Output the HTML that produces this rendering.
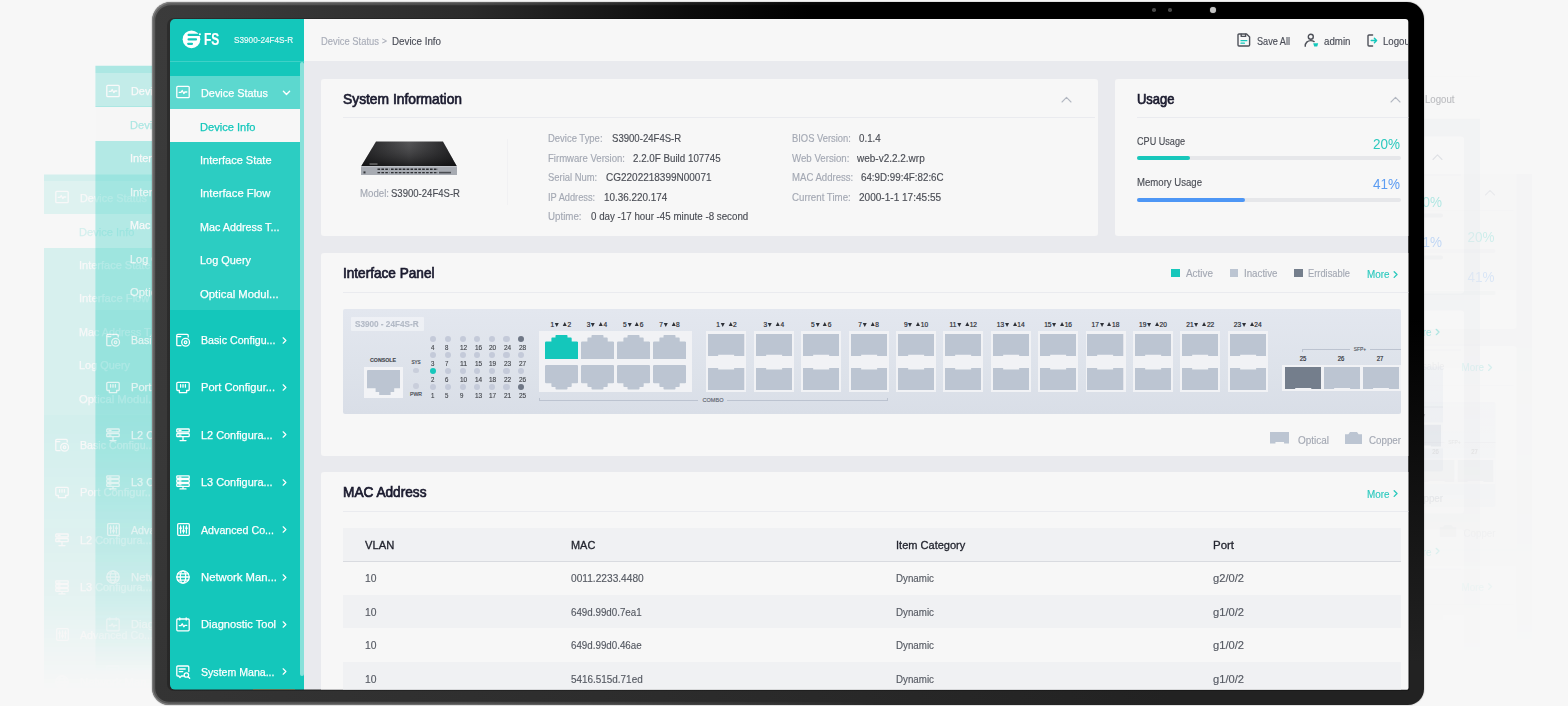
<!DOCTYPE html><html><head><meta charset="utf-8"><title>S3900-24F4S-R</title><style>
html,body{margin:0;padding:0}
body{width:1568px;height:706px;overflow:hidden;background:#f7f7f7;position:relative;font-family:"Liberation Sans",sans-serif}
.r,.t,.L{position:absolute}
.t{white-space:nowrap}
.L{left:0;top:0;width:1568px;height:706px;overflow:hidden}
.td,.tu{display:inline-block;width:0;height:0;border-left:2.7px solid transparent;border-right:2.7px solid transparent;position:relative}
.td{border-top:4.4px solid #2e3138;top:0;margin:0 1.9px 0 .8px}
.tu{border-bottom:4.4px solid #2e3138;top:-.7px;margin:0 .6px 0 1.9px}
</style></head><body><div class="L" style="clip-path:inset(174.5px 1415.5px 0 44px);-webkit-mask-image:linear-gradient(180deg,rgba(0,0,0,.155) 0,rgba(0,0,0,.155) 430px,rgba(0,0,0,.08) 600px,rgba(0,0,0,.0) 690px);mask-image:linear-gradient(180deg,rgba(0,0,0,.155) 0,rgba(0,0,0,.155) 430px,rgba(0,0,0,.08) 600px,rgba(0,0,0,.0) 690px)"><div class="L" style="overflow:visible;transform:translate(-121px,105px)"><div class="r" style="left:150.0px;top:19.0px;width:154.0px;height:681.0px;background:#14c7bb;"></div><div class="r" style="left:150.0px;top:61.0px;width:154.0px;height:1.0px;background:rgba(255,255,255,.18);"></div><div class="r" style="left:300.0px;top:61.7px;width:3.5px;height:614.3px;background:#88e1da;border-radius:2px"></div><svg class="r" style="left:180.0px;top:28.0px;" width="24" height="24" viewBox="0 0 24 24" fill="none"><circle cx="11.5" cy="11.3" r="8.85" fill="#fff"/><path d="M8.6 6.9h10.6M8.6 11.4h7.4M8.2 15.8h3.8" stroke="#14c7bb" stroke-width="2.2" stroke-linecap="round"/><circle cx="19.9" cy="6.2" r="1.05" fill="#fff"/></svg><span class="t" style="left:203.9px;transform-origin:0 50%;transform:scaleX(0.753);top:28.7px;font-size:16px;line-height:21px;color:#fff;font-weight:700;-webkit-text-stroke:0.15px #fff;">FS</span><span class="t" style="left:234.1px;transform-origin:0 50%;transform:scaleX(0.910);top:34.4px;font-size:9px;line-height:12px;color:#fff;font-weight:400;-webkit-text-stroke:0.15px #fff;opacity:.93">S3900-24F4S-R</span><div class="r" style="left:150.0px;top:76.0px;width:150.0px;height:32.6px;background:#5cd8cf;"></div><svg class="r" style="left:176.0px;top:85.0px;" width="14" height="14" viewBox="0 0 14 14" fill="none"><rect x="0.8" y="1.3" width="12.4" height="11.4" rx="1" stroke="#fff" stroke-width="1.3" stroke-linecap="round" stroke-linejoin="round"/><path d="M3.2 7.3h1.8l1.2-1.8 1.6 3 1.1-1.5h1.9" stroke="#fff" stroke-width="1.3" stroke-linecap="round" stroke-linejoin="round" stroke-width="1.1"/></svg><span class="t" style="left:201.0px;transform-origin:0 50%;transform:scaleX(0.929);top:84.8px;font-size:11.7px;line-height:15px;color:#fff;font-weight:400;-webkit-text-stroke:0.25px #fff;">Device Status</span><svg class="r" style="left:282.0px;top:89.5px;" width="9" height="6" viewBox="0 0 9 6" fill="none"><path d="M1.4 1.3l3.1 3.1L7.6 1.3" stroke="#fff" stroke-width="1.4" stroke-linecap="round" stroke-linejoin="round"/></svg><div class="r" style="left:150.0px;top:143.0px;width:150.0px;height:167.0px;background:#2ccdc2;"></div><div class="r" style="left:150.0px;top:108.6px;width:150.0px;height:34.4px;background:#f7f7f7;"></div><span class="t" style="left:200.0px;transform-origin:0 50%;transform:scaleX(0.949);top:118.5px;font-size:11.7px;line-height:15px;color:#14c7bb;font-weight:400;-webkit-text-stroke:0.25px #14c7bb;">Device Info</span><span class="t" style="left:200.0px;transform-origin:0 50%;transform:scaleX(0.941);top:151.8px;font-size:11.7px;line-height:15px;color:#fff;font-weight:400;-webkit-text-stroke:0.25px #fff;">Interface State</span><span class="t" style="left:200.0px;transform-origin:0 50%;transform:scaleX(0.960);top:185.3px;font-size:11.7px;line-height:15px;color:#fff;font-weight:400;-webkit-text-stroke:0.25px #fff;">Interface Flow</span><span class="t" style="left:200.0px;transform-origin:0 50%;transform:scaleX(0.922);top:218.8px;font-size:11.7px;line-height:15px;color:#fff;font-weight:400;-webkit-text-stroke:0.25px #fff;">Mac Address T...</span><span class="t" style="left:200.0px;transform-origin:0 50%;transform:scaleX(0.934);top:252.3px;font-size:11.7px;line-height:15px;color:#fff;font-weight:400;-webkit-text-stroke:0.25px #fff;">Log Query</span><span class="t" style="left:200.0px;transform-origin:0 50%;transform:scaleX(0.967);top:285.8px;font-size:11.7px;line-height:15px;color:#fff;font-weight:400;-webkit-text-stroke:0.25px #fff;">Optical Modul...</span><svg class="r" style="left:176.0px;top:333.3px;" width="15" height="14" viewBox="0 0 15 14" fill="none"><path d="M5 12.7H1.8a1 1 0 0 1-1-1V2.3a1 1 0 0 1 1-1h9.4a1 1 0 0 1 1 1V4" stroke="#fff" stroke-width="1.3" stroke-linecap="round" stroke-linejoin="round"/><path d="M.8 3.6h4" stroke="#fff" stroke-width="1.3" stroke-linecap="round" stroke-linejoin="round"/><circle cx="9.6" cy="9.2" r="3.9" stroke="#fff" stroke-width="1.3" stroke-linecap="round" stroke-linejoin="round"/><circle cx="9.6" cy="9.2" r="1.3" stroke="#fff" stroke-width="1.3" stroke-linecap="round" stroke-linejoin="round"/></svg><span class="t" style="left:201.0px;transform-origin:0 50%;transform:scaleX(0.910);top:332.1px;font-size:11.7px;line-height:15px;color:#fff;font-weight:400;-webkit-text-stroke:0.25px #fff;">Basic Configu...</span><svg class="r" style="left:282.0px;top:336.6px;" width="4.68" height="7.02" viewBox="0 0 6 9" fill="none"><path d="M1.5 1l3.5 3.5L1.5 8" stroke="#fff" stroke-width="1.5" stroke-linecap="round" stroke-linejoin="round"/></svg><svg class="r" style="left:176.0px;top:380.6px;" width="14" height="14" viewBox="0 0 14 14" fill="none"><path d="M1.8 1.3h10.4a1 1 0 0 1 1 1v6.2a1 1 0 0 1-1 1H10.6v2.2H3.4V9.5H1.8a1 1 0 0 1-1-1V2.3a1 1 0 0 1 1-1z" stroke="#fff" stroke-width="1.3" stroke-linecap="round" stroke-linejoin="round"/><path d="M4.6 3.6v2.6M7 3.6v2.6M9.4 3.6v2.6" stroke="#fff" stroke-width="1.3" stroke-linecap="round" stroke-linejoin="round"/></svg><span class="t" style="left:201.0px;transform-origin:0 50%;transform:scaleX(0.949);top:379.4px;font-size:11.7px;line-height:15px;color:#fff;font-weight:400;-webkit-text-stroke:0.25px #fff;">Port Configur...</span><svg class="r" style="left:282.0px;top:383.9px;" width="4.68" height="7.02" viewBox="0 0 6 9" fill="none"><path d="M1.5 1l3.5 3.5L1.5 8" stroke="#fff" stroke-width="1.5" stroke-linecap="round" stroke-linejoin="round"/></svg><svg class="r" style="left:176.0px;top:428.0px;" width="14" height="14" viewBox="0 0 14 14" fill="none"><rect x="0.8" y="1" width="12.4" height="3" rx=".6" stroke="#fff" stroke-width="1.3" stroke-linecap="round" stroke-linejoin="round"/><rect x="0.8" y="5.6" width="12.4" height="3" rx=".6" stroke="#fff" stroke-width="1.3" stroke-linecap="round" stroke-linejoin="round"/><path d="M7 8.6v3.6M4 12.6h6M3 2.5h2M3 7.1h2" stroke="#fff" stroke-width="1.3" stroke-linecap="round" stroke-linejoin="round"/></svg><span class="t" style="left:201.0px;transform-origin:0 50%;transform:scaleX(0.933);top:426.8px;font-size:11.7px;line-height:15px;color:#fff;font-weight:400;-webkit-text-stroke:0.25px #fff;">L2 Configura...</span><svg class="r" style="left:282.0px;top:431.3px;" width="4.68" height="7.02" viewBox="0 0 6 9" fill="none"><path d="M1.5 1l3.5 3.5L1.5 8" stroke="#fff" stroke-width="1.5" stroke-linecap="round" stroke-linejoin="round"/></svg><svg class="r" style="left:176.0px;top:474.9px;" width="14" height="15" viewBox="0 0 14 15" fill="none"><rect x="0.8" y=".8" width="12.4" height="2.7" rx=".6" stroke="#fff" stroke-width="1.3" stroke-linecap="round" stroke-linejoin="round"/><rect x="0.8" y="4.7" width="12.4" height="2.7" rx=".6" stroke="#fff" stroke-width="1.3" stroke-linecap="round" stroke-linejoin="round"/><rect x="0.8" y="8.6" width="12.4" height="2.7" rx=".6" stroke="#fff" stroke-width="1.3" stroke-linecap="round" stroke-linejoin="round"/><path d="M7 11.3v2.2M4 13.9h6M3 2.1h2M3 6h2M3 9.9h2" stroke="#fff" stroke-width="1.3" stroke-linecap="round" stroke-linejoin="round"/></svg><span class="t" style="left:201.0px;transform-origin:0 50%;transform:scaleX(0.933);top:474.2px;font-size:11.7px;line-height:15px;color:#fff;font-weight:400;-webkit-text-stroke:0.25px #fff;">L3 Configura...</span><svg class="r" style="left:282.0px;top:478.7px;" width="4.68" height="7.02" viewBox="0 0 6 9" fill="none"><path d="M1.5 1l3.5 3.5L1.5 8" stroke="#fff" stroke-width="1.5" stroke-linecap="round" stroke-linejoin="round"/></svg><svg class="r" style="left:176.5px;top:523.3px;" width="13" height="13" viewBox="0 0 13 13" fill="none"><rect x="0.7" y=".7" width="11.6" height="11.6" rx="1" stroke="#fff" stroke-width="1.3" stroke-linecap="round" stroke-linejoin="round"/><path d="M3.6 3v7M6.5 3v7M9.4 3v7" stroke="#fff" stroke-width="1.3" stroke-linecap="round" stroke-linejoin="round" stroke-width="1"/><path d="M2.7 5.2h1.8M5.6 8h1.8M8.5 5.2h1.8" stroke="#fff" stroke-width="1.3" stroke-linecap="round" stroke-linejoin="round" stroke-width="1.4"/></svg><span class="t" style="left:201.0px;transform-origin:0 50%;transform:scaleX(0.913);top:521.6px;font-size:11.7px;line-height:15px;color:#fff;font-weight:400;-webkit-text-stroke:0.25px #fff;">Advanced Co...</span><svg class="r" style="left:282.0px;top:526.1px;" width="4.68" height="7.02" viewBox="0 0 6 9" fill="none"><path d="M1.5 1l3.5 3.5L1.5 8" stroke="#fff" stroke-width="1.5" stroke-linecap="round" stroke-linejoin="round"/></svg><svg class="r" style="left:176.0px;top:570.2px;" width="14" height="14" viewBox="0 0 14 14" fill="none"><circle cx="7" cy="7" r="6.2" stroke="#fff" stroke-width="1.3" stroke-linecap="round" stroke-linejoin="round"/><ellipse cx="7" cy="7" rx="2.7" ry="6.2" stroke="#fff" stroke-width="1.3" stroke-linecap="round" stroke-linejoin="round" stroke-width="1.1"/><path d="M.8 7h12.4M1.7 3.9h10.6M1.7 10.1h10.6" stroke="#fff" stroke-width="1.3" stroke-linecap="round" stroke-linejoin="round" stroke-width="1.1"/></svg><span class="t" style="left:201.0px;transform-origin:0 50%;transform:scaleX(0.967);top:569.0px;font-size:11.7px;line-height:15px;color:#fff;font-weight:400;-webkit-text-stroke:0.25px #fff;">Network Man...</span><svg class="r" style="left:282.0px;top:573.5px;" width="4.68" height="7.02" viewBox="0 0 6 9" fill="none"><path d="M1.5 1l3.5 3.5L1.5 8" stroke="#fff" stroke-width="1.5" stroke-linecap="round" stroke-linejoin="round"/></svg><svg class="r" style="left:176.0px;top:617.1px;" width="14" height="15" viewBox="0 0 14 15" fill="none"><rect x="0.8" y="2" width="12.4" height="11.8" rx="1" stroke="#fff" stroke-width="1.3" stroke-linecap="round" stroke-linejoin="round"/><path d="M3.8 .8v2.2M10.2 .8v2.2M3.2 8.6h1.8l1.2-1.8 1.6 3 1.1-1.5h1.9" stroke="#fff" stroke-width="1.3" stroke-linecap="round" stroke-linejoin="round" stroke-width="1.1"/></svg><span class="t" style="left:201.0px;transform-origin:0 50%;transform:scaleX(0.949);top:616.4px;font-size:11.7px;line-height:15px;color:#fff;font-weight:400;-webkit-text-stroke:0.25px #fff;">Diagnostic Tool</span><svg class="r" style="left:282.0px;top:620.9px;" width="4.68" height="7.02" viewBox="0 0 6 9" fill="none"><path d="M1.5 1l3.5 3.5L1.5 8" stroke="#fff" stroke-width="1.5" stroke-linecap="round" stroke-linejoin="round"/></svg><svg class="r" style="left:176.0px;top:665.0px;" width="15" height="15" viewBox="0 0 15 15" fill="none"><path d="M7.6 11H5.4L4 12.6 2.8 11H1.8a1 1 0 0 1-1-1V2a1 1 0 0 1 1-1h10a1 1 0 0 1 1 1v4.5" stroke="#fff" stroke-width="1.3" stroke-linecap="round" stroke-linejoin="round"/><path d="M3.2 4h6M3.2 6.6h3.6" stroke="#fff" stroke-width="1.3" stroke-linecap="round" stroke-linejoin="round"/><circle cx="10.4" cy="10" r="2.2" stroke="#fff" stroke-width="1.3" stroke-linecap="round" stroke-linejoin="round"/><path d="M12.1 11.7l1.6 1.6" stroke="#fff" stroke-width="1.3" stroke-linecap="round" stroke-linejoin="round"/></svg><span class="t" style="left:201.0px;transform-origin:0 50%;transform:scaleX(0.905);top:663.8px;font-size:11.7px;line-height:15px;color:#fff;font-weight:400;-webkit-text-stroke:0.25px #fff;">System Mana...</span><svg class="r" style="left:282.0px;top:668.3px;" width="4.68" height="7.02" viewBox="0 0 6 9" fill="none"><path d="M1.5 1l3.5 3.5L1.5 8" stroke="#fff" stroke-width="1.5" stroke-linecap="round" stroke-linejoin="round"/></svg></div></div><div class="L" style="clip-path:inset(65.7px 1415.5px 0 95.4px);-webkit-mask-image:linear-gradient(180deg,rgba(0,0,0,.33) 0,rgba(0,0,0,.33) 380px,rgba(0,0,0,.21) 500px,rgba(0,0,0,.1) 600px,rgba(0,0,0,.0) 672px);mask-image:linear-gradient(180deg,rgba(0,0,0,.33) 0,rgba(0,0,0,.33) 380px,rgba(0,0,0,.21) 500px,rgba(0,0,0,.1) 600px,rgba(0,0,0,.0) 672px)"><div class="L" style="overflow:visible;transform:translate(-70px,0px)"><div class="r" style="left:150.0px;top:19.0px;width:154.0px;height:681.0px;background:#14c7bb;"></div><div class="r" style="left:150.0px;top:61.0px;width:154.0px;height:1.0px;background:rgba(255,255,255,.18);"></div><div class="r" style="left:300.0px;top:61.7px;width:3.5px;height:614.3px;background:#88e1da;border-radius:2px"></div><svg class="r" style="left:180.0px;top:28.0px;" width="24" height="24" viewBox="0 0 24 24" fill="none"><circle cx="11.5" cy="11.3" r="8.85" fill="#fff"/><path d="M8.6 6.9h10.6M8.6 11.4h7.4M8.2 15.8h3.8" stroke="#14c7bb" stroke-width="2.2" stroke-linecap="round"/><circle cx="19.9" cy="6.2" r="1.05" fill="#fff"/></svg><span class="t" style="left:203.9px;transform-origin:0 50%;transform:scaleX(0.753);top:28.7px;font-size:16px;line-height:21px;color:#fff;font-weight:700;-webkit-text-stroke:0.15px #fff;">FS</span><span class="t" style="left:234.1px;transform-origin:0 50%;transform:scaleX(0.910);top:34.4px;font-size:9px;line-height:12px;color:#fff;font-weight:400;-webkit-text-stroke:0.15px #fff;opacity:.93">S3900-24F4S-R</span><div class="r" style="left:150.0px;top:73.4px;width:150.0px;height:33.1px;background:#5cd8cf;"></div><svg class="r" style="left:176.0px;top:83.5px;" width="14" height="14" viewBox="0 0 14 14" fill="none"><rect x="0.8" y="1.3" width="12.4" height="11.4" rx="1" stroke="#fff" stroke-width="1.3" stroke-linecap="round" stroke-linejoin="round"/><path d="M3.2 7.3h1.8l1.2-1.8 1.6 3 1.1-1.5h1.9" stroke="#fff" stroke-width="1.3" stroke-linecap="round" stroke-linejoin="round" stroke-width="1.1"/></svg><span class="t" style="left:201.0px;transform-origin:0 50%;transform:scaleX(0.929);top:83.3px;font-size:11.7px;line-height:15px;color:#fff;font-weight:400;-webkit-text-stroke:0.25px #fff;">Device Status</span><svg class="r" style="left:282.0px;top:88.0px;" width="9" height="6" viewBox="0 0 9 6" fill="none"><path d="M1.4 1.3l3.1 3.1L7.6 1.3" stroke="#fff" stroke-width="1.4" stroke-linecap="round" stroke-linejoin="round"/></svg><div class="r" style="left:150.0px;top:141.0px;width:150.0px;height:169.0px;background:#2ccdc2;"></div><div class="r" style="left:150.0px;top:106.5px;width:150.0px;height:34.5px;background:#f7f7f7;"></div><span class="t" style="left:200.0px;transform-origin:0 50%;transform:scaleX(0.949);top:117.0px;font-size:11.7px;line-height:15px;color:#14c7bb;font-weight:400;-webkit-text-stroke:0.25px #14c7bb;">Device Info</span><span class="t" style="left:200.0px;transform-origin:0 50%;transform:scaleX(0.941);top:150.3px;font-size:11.7px;line-height:15px;color:#fff;font-weight:400;-webkit-text-stroke:0.25px #fff;">Interface State</span><span class="t" style="left:200.0px;transform-origin:0 50%;transform:scaleX(0.960);top:183.8px;font-size:11.7px;line-height:15px;color:#fff;font-weight:400;-webkit-text-stroke:0.25px #fff;">Interface Flow</span><span class="t" style="left:200.0px;transform-origin:0 50%;transform:scaleX(0.922);top:217.3px;font-size:11.7px;line-height:15px;color:#fff;font-weight:400;-webkit-text-stroke:0.25px #fff;">Mac Address T...</span><span class="t" style="left:200.0px;transform-origin:0 50%;transform:scaleX(0.934);top:250.8px;font-size:11.7px;line-height:15px;color:#fff;font-weight:400;-webkit-text-stroke:0.25px #fff;">Log Query</span><span class="t" style="left:200.0px;transform-origin:0 50%;transform:scaleX(0.967);top:284.3px;font-size:11.7px;line-height:15px;color:#fff;font-weight:400;-webkit-text-stroke:0.25px #fff;">Optical Modul...</span><svg class="r" style="left:176.0px;top:333.3px;" width="15" height="14" viewBox="0 0 15 14" fill="none"><path d="M5 12.7H1.8a1 1 0 0 1-1-1V2.3a1 1 0 0 1 1-1h9.4a1 1 0 0 1 1 1V4" stroke="#fff" stroke-width="1.3" stroke-linecap="round" stroke-linejoin="round"/><path d="M.8 3.6h4" stroke="#fff" stroke-width="1.3" stroke-linecap="round" stroke-linejoin="round"/><circle cx="9.6" cy="9.2" r="3.9" stroke="#fff" stroke-width="1.3" stroke-linecap="round" stroke-linejoin="round"/><circle cx="9.6" cy="9.2" r="1.3" stroke="#fff" stroke-width="1.3" stroke-linecap="round" stroke-linejoin="round"/></svg><span class="t" style="left:201.0px;transform-origin:0 50%;transform:scaleX(0.910);top:332.1px;font-size:11.7px;line-height:15px;color:#fff;font-weight:400;-webkit-text-stroke:0.25px #fff;">Basic Configu...</span><svg class="r" style="left:282.0px;top:336.6px;" width="4.68" height="7.02" viewBox="0 0 6 9" fill="none"><path d="M1.5 1l3.5 3.5L1.5 8" stroke="#fff" stroke-width="1.5" stroke-linecap="round" stroke-linejoin="round"/></svg><svg class="r" style="left:176.0px;top:380.6px;" width="14" height="14" viewBox="0 0 14 14" fill="none"><path d="M1.8 1.3h10.4a1 1 0 0 1 1 1v6.2a1 1 0 0 1-1 1H10.6v2.2H3.4V9.5H1.8a1 1 0 0 1-1-1V2.3a1 1 0 0 1 1-1z" stroke="#fff" stroke-width="1.3" stroke-linecap="round" stroke-linejoin="round"/><path d="M4.6 3.6v2.6M7 3.6v2.6M9.4 3.6v2.6" stroke="#fff" stroke-width="1.3" stroke-linecap="round" stroke-linejoin="round"/></svg><span class="t" style="left:201.0px;transform-origin:0 50%;transform:scaleX(0.949);top:379.4px;font-size:11.7px;line-height:15px;color:#fff;font-weight:400;-webkit-text-stroke:0.25px #fff;">Port Configur...</span><svg class="r" style="left:282.0px;top:383.9px;" width="4.68" height="7.02" viewBox="0 0 6 9" fill="none"><path d="M1.5 1l3.5 3.5L1.5 8" stroke="#fff" stroke-width="1.5" stroke-linecap="round" stroke-linejoin="round"/></svg><svg class="r" style="left:176.0px;top:428.0px;" width="14" height="14" viewBox="0 0 14 14" fill="none"><rect x="0.8" y="1" width="12.4" height="3" rx=".6" stroke="#fff" stroke-width="1.3" stroke-linecap="round" stroke-linejoin="round"/><rect x="0.8" y="5.6" width="12.4" height="3" rx=".6" stroke="#fff" stroke-width="1.3" stroke-linecap="round" stroke-linejoin="round"/><path d="M7 8.6v3.6M4 12.6h6M3 2.5h2M3 7.1h2" stroke="#fff" stroke-width="1.3" stroke-linecap="round" stroke-linejoin="round"/></svg><span class="t" style="left:201.0px;transform-origin:0 50%;transform:scaleX(0.933);top:426.8px;font-size:11.7px;line-height:15px;color:#fff;font-weight:400;-webkit-text-stroke:0.25px #fff;">L2 Configura...</span><svg class="r" style="left:282.0px;top:431.3px;" width="4.68" height="7.02" viewBox="0 0 6 9" fill="none"><path d="M1.5 1l3.5 3.5L1.5 8" stroke="#fff" stroke-width="1.5" stroke-linecap="round" stroke-linejoin="round"/></svg><svg class="r" style="left:176.0px;top:474.9px;" width="14" height="15" viewBox="0 0 14 15" fill="none"><rect x="0.8" y=".8" width="12.4" height="2.7" rx=".6" stroke="#fff" stroke-width="1.3" stroke-linecap="round" stroke-linejoin="round"/><rect x="0.8" y="4.7" width="12.4" height="2.7" rx=".6" stroke="#fff" stroke-width="1.3" stroke-linecap="round" stroke-linejoin="round"/><rect x="0.8" y="8.6" width="12.4" height="2.7" rx=".6" stroke="#fff" stroke-width="1.3" stroke-linecap="round" stroke-linejoin="round"/><path d="M7 11.3v2.2M4 13.9h6M3 2.1h2M3 6h2M3 9.9h2" stroke="#fff" stroke-width="1.3" stroke-linecap="round" stroke-linejoin="round"/></svg><span class="t" style="left:201.0px;transform-origin:0 50%;transform:scaleX(0.933);top:474.2px;font-size:11.7px;line-height:15px;color:#fff;font-weight:400;-webkit-text-stroke:0.25px #fff;">L3 Configura...</span><svg class="r" style="left:282.0px;top:478.7px;" width="4.68" height="7.02" viewBox="0 0 6 9" fill="none"><path d="M1.5 1l3.5 3.5L1.5 8" stroke="#fff" stroke-width="1.5" stroke-linecap="round" stroke-linejoin="round"/></svg><svg class="r" style="left:176.5px;top:523.3px;" width="13" height="13" viewBox="0 0 13 13" fill="none"><rect x="0.7" y=".7" width="11.6" height="11.6" rx="1" stroke="#fff" stroke-width="1.3" stroke-linecap="round" stroke-linejoin="round"/><path d="M3.6 3v7M6.5 3v7M9.4 3v7" stroke="#fff" stroke-width="1.3" stroke-linecap="round" stroke-linejoin="round" stroke-width="1"/><path d="M2.7 5.2h1.8M5.6 8h1.8M8.5 5.2h1.8" stroke="#fff" stroke-width="1.3" stroke-linecap="round" stroke-linejoin="round" stroke-width="1.4"/></svg><span class="t" style="left:201.0px;transform-origin:0 50%;transform:scaleX(0.913);top:521.6px;font-size:11.7px;line-height:15px;color:#fff;font-weight:400;-webkit-text-stroke:0.25px #fff;">Advanced Co...</span><svg class="r" style="left:282.0px;top:526.1px;" width="4.68" height="7.02" viewBox="0 0 6 9" fill="none"><path d="M1.5 1l3.5 3.5L1.5 8" stroke="#fff" stroke-width="1.5" stroke-linecap="round" stroke-linejoin="round"/></svg><svg class="r" style="left:176.0px;top:570.2px;" width="14" height="14" viewBox="0 0 14 14" fill="none"><circle cx="7" cy="7" r="6.2" stroke="#fff" stroke-width="1.3" stroke-linecap="round" stroke-linejoin="round"/><ellipse cx="7" cy="7" rx="2.7" ry="6.2" stroke="#fff" stroke-width="1.3" stroke-linecap="round" stroke-linejoin="round" stroke-width="1.1"/><path d="M.8 7h12.4M1.7 3.9h10.6M1.7 10.1h10.6" stroke="#fff" stroke-width="1.3" stroke-linecap="round" stroke-linejoin="round" stroke-width="1.1"/></svg><span class="t" style="left:201.0px;transform-origin:0 50%;transform:scaleX(0.967);top:569.0px;font-size:11.7px;line-height:15px;color:#fff;font-weight:400;-webkit-text-stroke:0.25px #fff;">Network Man...</span><svg class="r" style="left:282.0px;top:573.5px;" width="4.68" height="7.02" viewBox="0 0 6 9" fill="none"><path d="M1.5 1l3.5 3.5L1.5 8" stroke="#fff" stroke-width="1.5" stroke-linecap="round" stroke-linejoin="round"/></svg><svg class="r" style="left:176.0px;top:617.1px;" width="14" height="15" viewBox="0 0 14 15" fill="none"><rect x="0.8" y="2" width="12.4" height="11.8" rx="1" stroke="#fff" stroke-width="1.3" stroke-linecap="round" stroke-linejoin="round"/><path d="M3.8 .8v2.2M10.2 .8v2.2M3.2 8.6h1.8l1.2-1.8 1.6 3 1.1-1.5h1.9" stroke="#fff" stroke-width="1.3" stroke-linecap="round" stroke-linejoin="round" stroke-width="1.1"/></svg><span class="t" style="left:201.0px;transform-origin:0 50%;transform:scaleX(0.949);top:616.4px;font-size:11.7px;line-height:15px;color:#fff;font-weight:400;-webkit-text-stroke:0.25px #fff;">Diagnostic Tool</span><svg class="r" style="left:282.0px;top:620.9px;" width="4.68" height="7.02" viewBox="0 0 6 9" fill="none"><path d="M1.5 1l3.5 3.5L1.5 8" stroke="#fff" stroke-width="1.5" stroke-linecap="round" stroke-linejoin="round"/></svg><svg class="r" style="left:176.0px;top:665.0px;" width="15" height="15" viewBox="0 0 15 15" fill="none"><path d="M7.6 11H5.4L4 12.6 2.8 11H1.8a1 1 0 0 1-1-1V2a1 1 0 0 1 1-1h10a1 1 0 0 1 1 1v4.5" stroke="#fff" stroke-width="1.3" stroke-linecap="round" stroke-linejoin="round"/><path d="M3.2 4h6M3.2 6.6h3.6" stroke="#fff" stroke-width="1.3" stroke-linecap="round" stroke-linejoin="round"/><circle cx="10.4" cy="10" r="2.2" stroke="#fff" stroke-width="1.3" stroke-linecap="round" stroke-linejoin="round"/><path d="M12.1 11.7l1.6 1.6" stroke="#fff" stroke-width="1.3" stroke-linecap="round" stroke-linejoin="round"/></svg><span class="t" style="left:201.0px;transform-origin:0 50%;transform:scaleX(0.905);top:663.8px;font-size:11.7px;line-height:15px;color:#fff;font-weight:400;-webkit-text-stroke:0.25px #fff;">System Mana...</span><svg class="r" style="left:282.0px;top:668.3px;" width="4.68" height="7.02" viewBox="0 0 6 9" fill="none"><path d="M1.5 1l3.5 3.5L1.5 8" stroke="#fff" stroke-width="1.5" stroke-linecap="round" stroke-linejoin="round"/></svg></div></div><div class="L" style="clip-path:inset(174px 36px 0 1423px);-webkit-mask-image:linear-gradient(180deg,rgba(0,0,0,.2) 0,rgba(0,0,0,.2) 250px,rgba(0,0,0,.15) 400px,rgba(0,0,0,.0) 680px);mask-image:linear-gradient(180deg,rgba(0,0,0,.2) 0,rgba(0,0,0,.2) 250px,rgba(0,0,0,.15) 400px,rgba(0,0,0,.0) 680px)"><div class="L" style="overflow:visible;transform:translate(94.5px,93px)"><div class="r" style="left:304.0px;top:61.0px;width:1134.0px;height:699.0px;background:#e9eaee;"></div><div class="r" style="left:304.0px;top:19.0px;width:1134.0px;height:42.0px;background:#f7f7f7;"></div><span class="t" style="left:321.0px;transform-origin:0 50%;transform:scaleX(0.895);top:34.0px;font-size:10.5px;line-height:14px;color:#a9adb8;font-weight:400;-webkit-text-stroke:0.15px #a9adb8;">Device Status</span><span class="t" style="left:382.0px;transform-origin:0 50%;transform:scaleX(0.950);top:35.0px;font-size:9px;line-height:12px;color:#a9adb8;font-weight:400;-webkit-text-stroke:0.15px #a9adb8;">&gt;</span><span class="t" style="left:391.5px;transform-origin:0 50%;transform:scaleX(0.933);top:34.0px;font-size:10.5px;line-height:14px;color:#4a4d57;font-weight:400;-webkit-text-stroke:0.15px #4a4d57;">Device Info</span><svg class="r" style="left:1237.0px;top:33.0px;" width="14" height="14" viewBox="0 0 14 14" fill="none"><path d="M2 1h7.6L12.6 4v8a1 1 0 0 1-1 1H2a1 1 0 0 1-1-1V2a1 1 0 0 1 1-1z" stroke="#4e5159" stroke-width="1.4" stroke-linecap="round" stroke-linejoin="round"/><path d="M4.2 1.2v2.2h4.4V1.2" stroke="#4e5159" stroke-width="1.4" stroke-linecap="round" stroke-linejoin="round" stroke-width="1.8"/><path d="M4 7.7h5.8M4 10.2h3.4" stroke="#14c7bb" stroke-width="1.3" stroke-linecap="round"/></svg><span class="t" style="left:1257.0px;transform-origin:0 50%;transform:scaleX(0.913);top:34.5px;font-size:10px;line-height:13px;color:#4a4d57;font-weight:400;-webkit-text-stroke:0.15px #4a4d57;">Save All</span><svg class="r" style="left:1303.5px;top:33.0px;" width="15" height="15" viewBox="0 0 15 15" fill="none"><circle cx="6.8" cy="3.8" r="2.5" stroke="#4e5159" stroke-width="1.4" stroke-linecap="round" stroke-linejoin="round"/><path d="M1.2 13.2c0-3.4 2.4-5.6 5.6-5.6 1.3 0 2.4.3 3.3 1" stroke="#4e5159" stroke-width="1.4" stroke-linecap="round" stroke-linejoin="round"/><path d="M9.2 10.2h5l-1 3.4h-3z" fill="#14c7bb"/></svg><span class="t" style="left:1324.0px;transform-origin:0 50%;transform:scaleX(0.955);top:34.5px;font-size:10.2px;line-height:13px;color:#4a4d57;font-weight:400;-webkit-text-stroke:0.15px #4a4d57;">admin</span><svg class="r" style="left:1366.5px;top:34.0px;" width="12" height="13" viewBox="0 0 12 13" fill="none"><path d="M5.6 1H2a1 1 0 0 0-1 1v9a1 1 0 0 0 1 1h3.6" stroke="#4e5159" stroke-width="1.4" stroke-linecap="round" stroke-linejoin="round"/><path d="M4.2 6.5h5.2M7.4 4.2l2.2 2.3L7.4 8.8" stroke="#14c7bb" stroke-width="1.4" stroke-linecap="round" stroke-linejoin="round"/></svg><span class="t" style="left:1382.5px;transform-origin:0 50%;transform:scaleX(0.946);top:34.5px;font-size:10.2px;line-height:13px;color:#4a4d57;font-weight:400;-webkit-text-stroke:0.15px #4a4d57;">Logout</span><div class="r" style="left:321.0px;top:79.4px;width:777.0px;height:156.9px;background:#f7f7f7;border-radius:3px"></div><span class="t" style="left:343.0px;transform-origin:0 50%;transform:scaleX(0.953);top:90.3px;font-size:14.5px;line-height:19px;color:#1a1a2e;font-weight:400;-webkit-text-stroke:0.7px #1a1a2e;">System Information</span><svg class="r" style="left:1061.0px;top:96.0px;" width="11" height="7" viewBox="0 0 11 7" fill="none"><path d="M1 6l4.5-4.7L10 6" stroke="#b3b8c2" stroke-width="1.1" stroke-linecap="round" stroke-linejoin="round"/></svg><div class="r" style="left:343.0px;top:117.0px;width:752.0px;height:1.0px;background:#eaebef;"></div><svg class="r" style="left:360.0px;top:140.0px;" width="98" height="36" viewBox="0 0 98 36" fill="none"><defs><linearGradient id="sw1" x1="0" y1="0" x2="1" y2="0"><stop offset="0" stop-color="#1f1f21"/><stop offset=".5" stop-color="#555557"/><stop offset="1" stop-color="#1a1a1c"/></linearGradient><linearGradient id="sw2" x1="0" y1="0" x2="0" y2="1"><stop offset="0" stop-color="#3a3a3c" stop-opacity="0"/><stop offset="1" stop-color="#0c0c0d" stop-opacity=".75"/></linearGradient></defs><path d="M16 1.6h67L96.9 26.4H1.1z" fill="url(#sw1)"/><path d="M16 1.6h67L96.9 26.4H1.1z" fill="url(#sw2)"/><rect x="1" y="26.2" width="96" height="8.8" fill="#a7abb2"/><rect x="1" y="26.2" width="96" height=".9" fill="#c9ccd1"/><path d="M17.5 29.2h12M31 29.2h47M17.5 32.6h12M31 32.6h47" stroke="#2d2f33" stroke-width="1.4" stroke-dasharray="2.6 1.3"/><rect x="79" y="31.8" width="12" height="1.6" fill="#4a4d52"/><rect x="3.5" y="31.4" width="2" height="2" fill="#33363a"/><rect x="9.5" y="23.4" width="8" height="1.3" fill="#777"/></svg><span class="t" style="left:360.0px;transform-origin:0 50%;transform:scaleX(0.920);top:186.3px;font-size:10.5px;line-height:14px;color:#a3a8b3;font-weight:400;-webkit-text-stroke:0.15px #a3a8b3;">Model:</span><span class="t" style="left:391.3px;transform-origin:0 50%;transform:scaleX(0.909);top:186.3px;font-size:10.5px;line-height:14px;color:#4a4d55;font-weight:400;-webkit-text-stroke:0.15px #4a4d55;">S3900-24F4S-R</span><div class="r" style="left:507.0px;top:139.0px;width:1.0px;height:66.0px;background:#f1f1f3;"></div><span class="t" style="left:548.4px;transform-origin:0 50%;transform:scaleX(0.901);top:131.0px;font-size:10.5px;line-height:14px;color:#a3a8b3;font-weight:400;-webkit-text-stroke:0.15px #a3a8b3;">Device Type:</span><span class="t" style="left:611.5px;transform-origin:0 50%;transform:scaleX(0.912);top:131.0px;font-size:10.5px;line-height:14px;color:#4a4d55;font-weight:400;-webkit-text-stroke:0.15px #4a4d55;">S3900-24F4S-R</span><span class="t" style="left:548.4px;transform-origin:0 50%;transform:scaleX(0.910);top:150.5px;font-size:10.5px;line-height:14px;color:#a3a8b3;font-weight:400;-webkit-text-stroke:0.15px #a3a8b3;">Firmware Version:</span><span class="t" style="left:633.4px;transform-origin:0 50%;transform:scaleX(0.932);top:150.5px;font-size:10.5px;line-height:14px;color:#4a4d55;font-weight:400;-webkit-text-stroke:0.15px #4a4d55;">2.2.0F Build 107745</span><span class="t" style="left:548.4px;transform-origin:0 50%;transform:scaleX(0.897);top:170.0px;font-size:10.5px;line-height:14px;color:#a3a8b3;font-weight:400;-webkit-text-stroke:0.15px #a3a8b3;">Serial Num:</span><span class="t" style="left:606.0px;transform-origin:0 50%;transform:scaleX(0.951);top:170.0px;font-size:10.5px;line-height:14px;color:#4a4d55;font-weight:400;-webkit-text-stroke:0.15px #4a4d55;">CG2202218399N00071</span><span class="t" style="left:548.4px;transform-origin:0 50%;transform:scaleX(0.882);top:189.7px;font-size:10.5px;line-height:14px;color:#a3a8b3;font-weight:400;-webkit-text-stroke:0.15px #a3a8b3;">IP Address:</span><span class="t" style="left:604.0px;transform-origin:0 50%;transform:scaleX(0.943);top:189.7px;font-size:10.5px;line-height:14px;color:#4a4d55;font-weight:400;-webkit-text-stroke:0.15px #4a4d55;">10.36.220.174</span><span class="t" style="left:548.4px;transform-origin:0 50%;transform:scaleX(0.928);top:209.2px;font-size:10.5px;line-height:14px;color:#a3a8b3;font-weight:400;-webkit-text-stroke:0.15px #a3a8b3;">Uptime:</span><span class="t" style="left:590.6px;transform-origin:0 50%;transform:scaleX(0.929);top:209.2px;font-size:10.5px;line-height:14px;color:#4a4d55;font-weight:400;-webkit-text-stroke:0.15px #4a4d55;">0 day -17 hour -45 minute -8 second</span><span class="t" style="left:792.0px;transform-origin:0 50%;transform:scaleX(0.892);top:131.0px;font-size:10.5px;line-height:14px;color:#a3a8b3;font-weight:400;-webkit-text-stroke:0.15px #a3a8b3;">BIOS Version:</span><span class="t" style="left:859.3px;transform-origin:0 50%;transform:scaleX(0.929);top:131.0px;font-size:10.5px;line-height:14px;color:#4a4d55;font-weight:400;-webkit-text-stroke:0.15px #4a4d55;">0.1.4</span><span class="t" style="left:792.0px;transform-origin:0 50%;transform:scaleX(0.922);top:150.5px;font-size:10.5px;line-height:14px;color:#a3a8b3;font-weight:400;-webkit-text-stroke:0.15px #a3a8b3;">Web Version:</span><span class="t" style="left:857.3px;transform-origin:0 50%;transform:scaleX(0.951);top:150.5px;font-size:10.5px;line-height:14px;color:#4a4d55;font-weight:400;-webkit-text-stroke:0.15px #4a4d55;">web-v2.2.2.wrp</span><span class="t" style="left:792.0px;transform-origin:0 50%;transform:scaleX(0.913);top:170.0px;font-size:10.5px;line-height:14px;color:#a3a8b3;font-weight:400;-webkit-text-stroke:0.15px #a3a8b3;">MAC Address:</span><span class="t" style="left:861.3px;transform-origin:0 50%;transform:scaleX(0.931);top:170.0px;font-size:10.5px;line-height:14px;color:#4a4d55;font-weight:400;-webkit-text-stroke:0.15px #4a4d55;">64:9D:99:4F:82:6C</span><span class="t" style="left:792.0px;transform-origin:0 50%;transform:scaleX(0.924);top:189.7px;font-size:10.5px;line-height:14px;color:#a3a8b3;font-weight:400;-webkit-text-stroke:0.15px #a3a8b3;">Current Time:</span><span class="t" style="left:859.3px;transform-origin:0 50%;transform:scaleX(0.957);top:189.7px;font-size:10.5px;line-height:14px;color:#4a4d55;font-weight:400;-webkit-text-stroke:0.15px #4a4d55;">2000-1-1 17:45:55</span><div class="r" style="left:1114.7px;top:79.4px;width:307.3px;height:156.9px;background:#f7f7f7;border-radius:3px"></div><span class="t" style="left:1137.0px;transform-origin:0 50%;transform:scaleX(0.895);top:90.3px;font-size:14.5px;line-height:19px;color:#1a1a2e;font-weight:400;-webkit-text-stroke:0.7px #1a1a2e;">Usage</span><svg class="r" style="left:1390.0px;top:96.0px;" width="11" height="7" viewBox="0 0 11 7" fill="none"><path d="M1 6l4.5-4.7L10 6" stroke="#b3b8c2" stroke-width="1.1" stroke-linecap="round" stroke-linejoin="round"/></svg><div class="r" style="left:1137.0px;top:117.0px;width:282.0px;height:1.0px;background:#eaebef;"></div><span class="t" style="left:1137.0px;transform-origin:0 50%;transform:scaleX(0.866);top:134.2px;font-size:10.5px;line-height:14px;color:#4a4d55;font-weight:400;-webkit-text-stroke:0.15px #4a4d55;">CPU Usage</span><span class="t" style="right:167.5px;transform-origin:100% 50%;transform:scaleX(0.930);top:134.5px;font-size:14.5px;line-height:19px;color:#2cc9be;font-weight:400;">20%</span><div class="r" style="left:1137.0px;top:156.2px;width:263.5px;height:4.0px;background:#e6e7ea;border-radius:2px"></div><div class="r" style="left:1137.0px;top:156.2px;width:53.0px;height:4.0px;background:#17c7bb;border-radius:2px"></div><span class="t" style="left:1137.0px;transform-origin:0 50%;transform:scaleX(0.913);top:175.0px;font-size:10.5px;line-height:14px;color:#4a4d55;font-weight:400;-webkit-text-stroke:0.15px #4a4d55;">Memory Usage</span><span class="t" style="right:167.5px;transform-origin:100% 50%;transform:scaleX(0.930);top:175.2px;font-size:14.5px;line-height:19px;color:#5b9cf2;font-weight:400;">41%</span><div class="r" style="left:1137.0px;top:197.8px;width:263.5px;height:4.0px;background:#e6e7ea;border-radius:2px"></div><div class="r" style="left:1137.0px;top:197.8px;width:108.0px;height:4.0px;background:#4d96f5;border-radius:2px"></div><div class="r" style="left:321.0px;top:253.3px;width:1101.0px;height:202.5px;background:#f7f7f7;border-radius:3px"></div><span class="t" style="left:343.0px;transform-origin:0 50%;transform:scaleX(0.938);top:264.3px;font-size:14.5px;line-height:19px;color:#1a1a2e;font-weight:400;-webkit-text-stroke:0.7px #1a1a2e;">Interface Panel</span><div class="r" style="left:343.0px;top:291.6px;width:1076.0px;height:1.0px;background:#eaebef;"></div><div class="r" style="left:1171.4px;top:268.5px;width:8.6px;height:8.5px;background:#17c7bb;"></div><span class="t" style="left:1185.7px;transform-origin:0 50%;transform:scaleX(0.944);top:266.0px;font-size:10.5px;line-height:14px;color:#a3a8b3;font-weight:400;-webkit-text-stroke:0.15px #a3a8b3;">Active</span><div class="r" style="left:1229.8px;top:268.5px;width:8.4px;height:8.5px;background:#bcc5d2;"></div><span class="t" style="left:1243.5px;transform-origin:0 50%;transform:scaleX(0.926);top:266.0px;font-size:10.5px;line-height:14px;color:#a3a8b3;font-weight:400;-webkit-text-stroke:0.15px #a3a8b3;">Inactive</span><div class="r" style="left:1294.0px;top:268.5px;width:8.6px;height:8.5px;background:#747e8c;"></div><span class="t" style="left:1308.0px;transform-origin:0 50%;transform:scaleX(0.888);top:266.0px;font-size:10.5px;line-height:14px;color:#a3a8b3;font-weight:400;-webkit-text-stroke:0.15px #a3a8b3;">Errdisable</span><span class="t" style="left:1367.0px;transform-origin:0 50%;transform:scaleX(0.940);top:267.0px;font-size:10.5px;line-height:14px;color:#2cc9be;font-weight:400;-webkit-text-stroke:0.15px #2cc9be;">More</span><svg class="r" style="left:1393.3px;top:270.7px;" width="4.8" height="7.2" viewBox="0 0 6 9" fill="none"><path d="M1.5 1l3.5 3.5L1.5 8" stroke="#2cc9be" stroke-width="1.7" stroke-linecap="round" stroke-linejoin="round"/></svg><div class="r" style="left:343.0px;top:309.2px;width:1058.0px;height:105.3px;background:linear-gradient(180deg,#e3e7ef 0%,#dde2ea 60%,#d9dee7 100%);border-radius:2px"></div><div class="r" style="left:351.0px;top:317.2px;width:73.0px;height:13.6px;background:rgba(255,255,255,.42);border-radius:1px"></div><span class="t" style="left:355.2px;transform-origin:0 50%;transform:scaleX(0.907);top:318.0px;font-size:9px;line-height:12px;color:#b3bac6;font-weight:700;-webkit-text-stroke:0.15px #b3bac6;">S3900 - 24F4S-R</span><span class="t" style="left:383.0px;transform:translateX(-50%) scaleX(0.956);top:356.5px;font-size:5.5px;line-height:7px;color:#44474d;font-weight:700;-webkit-text-stroke:0.15px #44474d;">CONSOLE</span><div class="r" style="left:364.0px;top:367.2px;width:38.7px;height:30.6px;background:#f2f3f6;"></div><svg class="r" style="left:366.5px;top:369.8px;" width="33.8" height="25" viewBox="0 0 33.8 25" fill="none"><path d="M1 0h31.8a1 1 0 0 1 1 1v17.3h-6.6v3.6h-3.6v3h-11.4v-3h-3.6v-3.6H0V1a1 1 0 0 1 1-1z" fill="#bcc5d2"/></svg><span class="t" style="left:416.3px;transform:translateX(-50%) scaleX(0.885);top:359.3px;font-size:5.2px;line-height:7px;color:#4a4e56;font-weight:400;-webkit-text-stroke:0.2px #4a4e56;">SYS</span><span class="t" style="left:416.3px;transform:translateX(-50%) scaleX(0.991);top:391.3px;font-size:5.2px;line-height:7px;color:#4a4e56;font-weight:400;-webkit-text-stroke:0.2px #4a4e56;">PWR</span><div class="r" style="left:413.4px;top:367.6px;width:5.8px;height:5.8px;background:#c9cedb;border-radius:50%"></div><div class="r" style="left:413.4px;top:383.3px;width:5.8px;height:5.8px;background:#c9cedb;border-radius:50%"></div><div class="r" style="left:430.1px;top:335.5px;width:6.2px;height:6.2px;background:#c4cad9;border-radius:50%"></div><span class="t" style="left:430.5px;transform-origin:0 50%;transform:scaleX(0.899);top:342.8px;font-size:6.8px;line-height:9px;color:#44474d;font-weight:400;-webkit-text-stroke:0.15px #44474d;">4</span><div class="r" style="left:430.1px;top:351.5px;width:6.2px;height:6.2px;background:#c4cad9;border-radius:50%"></div><span class="t" style="left:430.5px;transform-origin:0 50%;transform:scaleX(0.899);top:358.9px;font-size:6.8px;line-height:9px;color:#44474d;font-weight:400;-webkit-text-stroke:0.15px #44474d;">3</span><div class="r" style="left:430.1px;top:367.5px;width:6.2px;height:6.2px;background:#17c7bb;border-radius:50%"></div><span class="t" style="left:430.5px;transform-origin:0 50%;transform:scaleX(0.899);top:374.9px;font-size:6.8px;line-height:9px;color:#44474d;font-weight:400;-webkit-text-stroke:0.15px #44474d;">2</span><div class="r" style="left:430.1px;top:383.5px;width:6.2px;height:6.2px;background:#c4cad9;border-radius:50%"></div><span class="t" style="left:430.5px;transform-origin:0 50%;transform:scaleX(0.899);top:390.7px;font-size:6.8px;line-height:9px;color:#44474d;font-weight:400;-webkit-text-stroke:0.15px #44474d;">1</span><div class="r" style="left:444.9px;top:335.5px;width:6.2px;height:6.2px;background:#c4cad9;border-radius:50%"></div><span class="t" style="left:445.3px;transform-origin:0 50%;transform:scaleX(0.899);top:342.8px;font-size:6.8px;line-height:9px;color:#44474d;font-weight:400;-webkit-text-stroke:0.15px #44474d;">8</span><div class="r" style="left:444.9px;top:351.5px;width:6.2px;height:6.2px;background:#c4cad9;border-radius:50%"></div><span class="t" style="left:445.3px;transform-origin:0 50%;transform:scaleX(0.899);top:358.9px;font-size:6.8px;line-height:9px;color:#44474d;font-weight:400;-webkit-text-stroke:0.15px #44474d;">7</span><div class="r" style="left:444.9px;top:367.5px;width:6.2px;height:6.2px;background:#c4cad9;border-radius:50%"></div><span class="t" style="left:445.3px;transform-origin:0 50%;transform:scaleX(0.899);top:374.9px;font-size:6.8px;line-height:9px;color:#44474d;font-weight:400;-webkit-text-stroke:0.15px #44474d;">6</span><div class="r" style="left:444.9px;top:383.5px;width:6.2px;height:6.2px;background:#c4cad9;border-radius:50%"></div><span class="t" style="left:445.3px;transform-origin:0 50%;transform:scaleX(0.899);top:390.7px;font-size:6.8px;line-height:9px;color:#44474d;font-weight:400;-webkit-text-stroke:0.15px #44474d;">5</span><div class="r" style="left:459.5px;top:335.5px;width:6.2px;height:6.2px;background:#c4cad9;border-radius:50%"></div><span class="t" style="left:459.9px;transform-origin:0 50%;transform:scaleX(0.952);top:342.8px;font-size:6.8px;line-height:9px;color:#44474d;font-weight:400;-webkit-text-stroke:0.15px #44474d;">12</span><div class="r" style="left:459.5px;top:351.5px;width:6.2px;height:6.2px;background:#c4cad9;border-radius:50%"></div><span class="t" style="left:459.9px;transform-origin:0 50%;transform:scaleX(1.019);top:358.9px;font-size:6.8px;line-height:9px;color:#44474d;font-weight:400;-webkit-text-stroke:0.15px #44474d;">11</span><div class="r" style="left:459.5px;top:367.5px;width:6.2px;height:6.2px;background:#c4cad9;border-radius:50%"></div><span class="t" style="left:459.9px;transform-origin:0 50%;transform:scaleX(0.952);top:374.9px;font-size:6.8px;line-height:9px;color:#44474d;font-weight:400;-webkit-text-stroke:0.15px #44474d;">10</span><div class="r" style="left:459.5px;top:383.5px;width:6.2px;height:6.2px;background:#c4cad9;border-radius:50%"></div><span class="t" style="left:459.9px;transform-origin:0 50%;transform:scaleX(0.899);top:390.7px;font-size:6.8px;line-height:9px;color:#44474d;font-weight:400;-webkit-text-stroke:0.15px #44474d;">9</span><div class="r" style="left:474.1px;top:335.5px;width:6.2px;height:6.2px;background:#c4cad9;border-radius:50%"></div><span class="t" style="left:474.5px;transform-origin:0 50%;transform:scaleX(0.952);top:342.8px;font-size:6.8px;line-height:9px;color:#44474d;font-weight:400;-webkit-text-stroke:0.15px #44474d;">16</span><div class="r" style="left:474.1px;top:351.5px;width:6.2px;height:6.2px;background:#c4cad9;border-radius:50%"></div><span class="t" style="left:474.5px;transform-origin:0 50%;transform:scaleX(0.952);top:358.9px;font-size:6.8px;line-height:9px;color:#44474d;font-weight:400;-webkit-text-stroke:0.15px #44474d;">15</span><div class="r" style="left:474.1px;top:367.5px;width:6.2px;height:6.2px;background:#c4cad9;border-radius:50%"></div><span class="t" style="left:474.5px;transform-origin:0 50%;transform:scaleX(0.952);top:374.9px;font-size:6.8px;line-height:9px;color:#44474d;font-weight:400;-webkit-text-stroke:0.15px #44474d;">14</span><div class="r" style="left:474.1px;top:383.5px;width:6.2px;height:6.2px;background:#c4cad9;border-radius:50%"></div><span class="t" style="left:474.5px;transform-origin:0 50%;transform:scaleX(0.952);top:390.7px;font-size:6.8px;line-height:9px;color:#44474d;font-weight:400;-webkit-text-stroke:0.15px #44474d;">13</span><div class="r" style="left:488.9px;top:335.5px;width:6.2px;height:6.2px;background:#c4cad9;border-radius:50%"></div><span class="t" style="left:489.3px;transform-origin:0 50%;transform:scaleX(0.952);top:342.8px;font-size:6.8px;line-height:9px;color:#44474d;font-weight:400;-webkit-text-stroke:0.15px #44474d;">20</span><div class="r" style="left:488.9px;top:351.5px;width:6.2px;height:6.2px;background:#c4cad9;border-radius:50%"></div><span class="t" style="left:489.3px;transform-origin:0 50%;transform:scaleX(0.952);top:358.9px;font-size:6.8px;line-height:9px;color:#44474d;font-weight:400;-webkit-text-stroke:0.15px #44474d;">19</span><div class="r" style="left:488.9px;top:367.5px;width:6.2px;height:6.2px;background:#c4cad9;border-radius:50%"></div><span class="t" style="left:489.3px;transform-origin:0 50%;transform:scaleX(0.952);top:374.9px;font-size:6.8px;line-height:9px;color:#44474d;font-weight:400;-webkit-text-stroke:0.15px #44474d;">18</span><div class="r" style="left:488.9px;top:383.5px;width:6.2px;height:6.2px;background:#c4cad9;border-radius:50%"></div><span class="t" style="left:489.3px;transform-origin:0 50%;transform:scaleX(0.952);top:390.7px;font-size:6.8px;line-height:9px;color:#44474d;font-weight:400;-webkit-text-stroke:0.15px #44474d;">17</span><div class="r" style="left:503.4px;top:335.5px;width:6.2px;height:6.2px;background:#c4cad9;border-radius:50%"></div><span class="t" style="left:503.8px;transform-origin:0 50%;transform:scaleX(0.952);top:342.8px;font-size:6.8px;line-height:9px;color:#44474d;font-weight:400;-webkit-text-stroke:0.15px #44474d;">24</span><div class="r" style="left:503.4px;top:351.5px;width:6.2px;height:6.2px;background:#c4cad9;border-radius:50%"></div><span class="t" style="left:503.8px;transform-origin:0 50%;transform:scaleX(0.952);top:358.9px;font-size:6.8px;line-height:9px;color:#44474d;font-weight:400;-webkit-text-stroke:0.15px #44474d;">23</span><div class="r" style="left:503.4px;top:367.5px;width:6.2px;height:6.2px;background:#c4cad9;border-radius:50%"></div><span class="t" style="left:503.8px;transform-origin:0 50%;transform:scaleX(0.952);top:374.9px;font-size:6.8px;line-height:9px;color:#44474d;font-weight:400;-webkit-text-stroke:0.15px #44474d;">22</span><div class="r" style="left:503.4px;top:383.5px;width:6.2px;height:6.2px;background:#c4cad9;border-radius:50%"></div><span class="t" style="left:503.8px;transform-origin:0 50%;transform:scaleX(0.952);top:390.7px;font-size:6.8px;line-height:9px;color:#44474d;font-weight:400;-webkit-text-stroke:0.15px #44474d;">21</span><div class="r" style="left:518.1px;top:335.5px;width:6.2px;height:6.2px;background:#6f7786;border-radius:50%"></div><span class="t" style="left:518.5px;transform-origin:0 50%;transform:scaleX(0.952);top:342.8px;font-size:6.8px;line-height:9px;color:#44474d;font-weight:400;-webkit-text-stroke:0.15px #44474d;">28</span><div class="r" style="left:518.1px;top:351.5px;width:6.2px;height:6.2px;background:#c4cad9;border-radius:50%"></div><span class="t" style="left:518.5px;transform-origin:0 50%;transform:scaleX(0.952);top:358.9px;font-size:6.8px;line-height:9px;color:#44474d;font-weight:400;-webkit-text-stroke:0.15px #44474d;">27</span><div class="r" style="left:518.1px;top:367.5px;width:6.2px;height:6.2px;background:#c4cad9;border-radius:50%"></div><span class="t" style="left:518.5px;transform-origin:0 50%;transform:scaleX(0.952);top:374.9px;font-size:6.8px;line-height:9px;color:#44474d;font-weight:400;-webkit-text-stroke:0.15px #44474d;">26</span><div class="r" style="left:518.1px;top:383.5px;width:6.2px;height:6.2px;background:#6f7786;border-radius:50%"></div><span class="t" style="left:518.5px;transform-origin:0 50%;transform:scaleX(0.952);top:390.7px;font-size:6.8px;line-height:9px;color:#44474d;font-weight:400;-webkit-text-stroke:0.15px #44474d;">25</span><div class="r" style="left:539.0px;top:331.0px;width:153.0px;height:61.0px;background:#f1f2f5;"></div><svg class="r" style="left:544.6px;top:334.6px;" width="33.2" height="24.6" viewBox="0 0 33.2 24.6" fill="none"><path d="M11.3 0h10.4a.8 .8 0 0 1 .8 .8v1.8h3.4a.8 .8 0 0 1 .8 .8v3.1h5.3a1.2 1.2 0 0 1 1.2 1.2v15.7a1.2 1.2 0 0 1-1.2 1.2H1.2a1.2 1.2 0 0 1-1.2-1.2V7.7a1.2 1.2 0 0 1 1.2-1.2h5.2V3.4a.8 .8 0 0 1 .8-.8h3.3V.8a.8 .8 0 0 1 .8-.8z" fill="#14c7bb"/></svg><svg class="r" style="left:544.6px;top:365.2px;" width="33.2" height="24.6" viewBox="0 0 33.2 24.6" fill="none"><path d="M1.2 0h30.8a1.2 1.2 0 0 1 1.2 1.2v15.8a1.2 1.2 0 0 1-1.2 1.2h-5.3v3a.8 .8 0 0 1-.8 .8h-3.4v1.8a.8 .8 0 0 1-.8 .8h-10.4a.8 .8 0 0 1-.8-.8v-1.8h-3.3a.8 .8 0 0 1-.8-.8v-3H1.2a1.2 1.2 0 0 1-1.2-1.2V1.2a1.2 1.2 0 0 1 1.2-1.2z" fill="#bcc5d2"/></svg><span class="t" style="left:560.8px;top:319.8px;transform:translateX(-50%);font-size:6.6px;line-height:9px;color:#2e3138;font-weight:400;-webkit-text-stroke:.2px #2e3138">1<i class="td"></i><i class="tu"></i>2</span><svg class="r" style="left:580.8px;top:334.6px;" width="33.2" height="24.6" viewBox="0 0 33.2 24.6" fill="none"><path d="M11.3 0h10.4a.8 .8 0 0 1 .8 .8v1.8h3.4a.8 .8 0 0 1 .8 .8v3.1h5.3a1.2 1.2 0 0 1 1.2 1.2v15.7a1.2 1.2 0 0 1-1.2 1.2H1.2a1.2 1.2 0 0 1-1.2-1.2V7.7a1.2 1.2 0 0 1 1.2-1.2h5.2V3.4a.8 .8 0 0 1 .8-.8h3.3V.8a.8 .8 0 0 1 .8-.8z" fill="#bcc5d2"/></svg><svg class="r" style="left:580.8px;top:365.2px;" width="33.2" height="24.6" viewBox="0 0 33.2 24.6" fill="none"><path d="M1.2 0h30.8a1.2 1.2 0 0 1 1.2 1.2v15.8a1.2 1.2 0 0 1-1.2 1.2h-5.3v3a.8 .8 0 0 1-.8 .8h-3.4v1.8a.8 .8 0 0 1-.8 .8h-10.4a.8 .8 0 0 1-.8-.8v-1.8h-3.3a.8 .8 0 0 1-.8-.8v-3H1.2a1.2 1.2 0 0 1-1.2-1.2V1.2a1.2 1.2 0 0 1 1.2-1.2z" fill="#bcc5d2"/></svg><span class="t" style="left:597.0px;top:319.8px;transform:translateX(-50%);font-size:6.6px;line-height:9px;color:#2e3138;font-weight:400;-webkit-text-stroke:.2px #2e3138">3<i class="td"></i><i class="tu"></i>4</span><svg class="r" style="left:617.0px;top:334.6px;" width="33.2" height="24.6" viewBox="0 0 33.2 24.6" fill="none"><path d="M11.3 0h10.4a.8 .8 0 0 1 .8 .8v1.8h3.4a.8 .8 0 0 1 .8 .8v3.1h5.3a1.2 1.2 0 0 1 1.2 1.2v15.7a1.2 1.2 0 0 1-1.2 1.2H1.2a1.2 1.2 0 0 1-1.2-1.2V7.7a1.2 1.2 0 0 1 1.2-1.2h5.2V3.4a.8 .8 0 0 1 .8-.8h3.3V.8a.8 .8 0 0 1 .8-.8z" fill="#bcc5d2"/></svg><svg class="r" style="left:617.0px;top:365.2px;" width="33.2" height="24.6" viewBox="0 0 33.2 24.6" fill="none"><path d="M1.2 0h30.8a1.2 1.2 0 0 1 1.2 1.2v15.8a1.2 1.2 0 0 1-1.2 1.2h-5.3v3a.8 .8 0 0 1-.8 .8h-3.4v1.8a.8 .8 0 0 1-.8 .8h-10.4a.8 .8 0 0 1-.8-.8v-1.8h-3.3a.8 .8 0 0 1-.8-.8v-3H1.2a1.2 1.2 0 0 1-1.2-1.2V1.2a1.2 1.2 0 0 1 1.2-1.2z" fill="#bcc5d2"/></svg><span class="t" style="left:633.2px;top:319.8px;transform:translateX(-50%);font-size:6.6px;line-height:9px;color:#2e3138;font-weight:400;-webkit-text-stroke:.2px #2e3138">5<i class="td"></i><i class="tu"></i>6</span><svg class="r" style="left:653.2px;top:334.6px;" width="33.2" height="24.6" viewBox="0 0 33.2 24.6" fill="none"><path d="M11.3 0h10.4a.8 .8 0 0 1 .8 .8v1.8h3.4a.8 .8 0 0 1 .8 .8v3.1h5.3a1.2 1.2 0 0 1 1.2 1.2v15.7a1.2 1.2 0 0 1-1.2 1.2H1.2a1.2 1.2 0 0 1-1.2-1.2V7.7a1.2 1.2 0 0 1 1.2-1.2h5.2V3.4a.8 .8 0 0 1 .8-.8h3.3V.8a.8 .8 0 0 1 .8-.8z" fill="#bcc5d2"/></svg><svg class="r" style="left:653.2px;top:365.2px;" width="33.2" height="24.6" viewBox="0 0 33.2 24.6" fill="none"><path d="M1.2 0h30.8a1.2 1.2 0 0 1 1.2 1.2v15.8a1.2 1.2 0 0 1-1.2 1.2h-5.3v3a.8 .8 0 0 1-.8 .8h-3.4v1.8a.8 .8 0 0 1-.8 .8h-10.4a.8 .8 0 0 1-.8-.8v-1.8h-3.3a.8 .8 0 0 1-.8-.8v-3H1.2a1.2 1.2 0 0 1-1.2-1.2V1.2a1.2 1.2 0 0 1 1.2-1.2z" fill="#bcc5d2"/></svg><span class="t" style="left:669.4px;top:319.8px;transform:translateX(-50%);font-size:6.6px;line-height:9px;color:#2e3138;font-weight:400;-webkit-text-stroke:.2px #2e3138">7<i class="td"></i><i class="tu"></i>8</span><div class="r" style="left:539.2px;top:397.6px;width:0.8px;height:3.0px;background:#bcc3d0;"></div><div class="r" style="left:539.2px;top:399.8px;width:158.8px;height:0.8px;background:#bcc3d0;"></div><span class="t" style="left:712.6px;transform:translateX(-50%) scaleX(1.011);top:396.7px;font-size:5.5px;line-height:7px;color:#5f6570;font-weight:400;-webkit-text-stroke:0.15px #5f6570;">COMBO</span><div class="r" style="left:727.0px;top:399.8px;width:160.6px;height:0.8px;background:#bcc3d0;"></div><div class="r" style="left:886.8px;top:397.6px;width:0.8px;height:3.0px;background:#bcc3d0;"></div><div class="r" style="left:706.4px;top:331.0px;width:40.1px;height:61.0px;background:#f1f2f5;"></div><svg class="r" style="left:708.3px;top:334.3px;" width="36.3" height="22.2" viewBox="0 0 36.3 22.2" fill="none"><path d="M0 0h36.3 v22.2 h-10.164 v-1.5 h-15.972 v1.5 H0z" fill="#bcc5d2"/></svg><svg class="r" style="left:708.3px;top:368.2px;" width="36.3" height="22.2" viewBox="0 0 36.3 22.2" fill="none"><path d="M0 22.2 V0 h10.164 v1.5 h15.972 v-1.5 H36.3 V22.2 z" fill="#bcc5d2"/></svg><span class="t" style="left:726.4px;top:319.8px;transform:translateX(-50%);font-size:6.6px;line-height:9px;color:#2e3138;font-weight:400;-webkit-text-stroke:.2px #2e3138">1<i class="td"></i><i class="tu"></i>2</span><div class="r" style="left:753.8px;top:331.0px;width:40.1px;height:61.0px;background:#f1f2f5;"></div><svg class="r" style="left:755.7px;top:334.3px;" width="36.3" height="22.2" viewBox="0 0 36.3 22.2" fill="none"><path d="M0 0h36.3 v22.2 h-10.164 v-1.5 h-15.972 v1.5 H0z" fill="#bcc5d2"/></svg><svg class="r" style="left:755.7px;top:368.2px;" width="36.3" height="22.2" viewBox="0 0 36.3 22.2" fill="none"><path d="M0 22.2 V0 h10.164 v1.5 h15.972 v-1.5 H36.3 V22.2 z" fill="#bcc5d2"/></svg><span class="t" style="left:773.8px;top:319.8px;transform:translateX(-50%);font-size:6.6px;line-height:9px;color:#2e3138;font-weight:400;-webkit-text-stroke:.2px #2e3138">3<i class="td"></i><i class="tu"></i>4</span><div class="r" style="left:801.2px;top:331.0px;width:40.1px;height:61.0px;background:#f1f2f5;"></div><svg class="r" style="left:803.1px;top:334.3px;" width="36.3" height="22.2" viewBox="0 0 36.3 22.2" fill="none"><path d="M0 0h36.3 v22.2 h-10.164 v-1.5 h-15.972 v1.5 H0z" fill="#bcc5d2"/></svg><svg class="r" style="left:803.1px;top:368.2px;" width="36.3" height="22.2" viewBox="0 0 36.3 22.2" fill="none"><path d="M0 22.2 V0 h10.164 v1.5 h15.972 v-1.5 H36.3 V22.2 z" fill="#bcc5d2"/></svg><span class="t" style="left:821.2px;top:319.8px;transform:translateX(-50%);font-size:6.6px;line-height:9px;color:#2e3138;font-weight:400;-webkit-text-stroke:.2px #2e3138">5<i class="td"></i><i class="tu"></i>6</span><div class="r" style="left:848.6px;top:331.0px;width:40.1px;height:61.0px;background:#f1f2f5;"></div><svg class="r" style="left:850.5px;top:334.3px;" width="36.3" height="22.2" viewBox="0 0 36.3 22.2" fill="none"><path d="M0 0h36.3 v22.2 h-10.164 v-1.5 h-15.972 v1.5 H0z" fill="#bcc5d2"/></svg><svg class="r" style="left:850.5px;top:368.2px;" width="36.3" height="22.2" viewBox="0 0 36.3 22.2" fill="none"><path d="M0 22.2 V0 h10.164 v1.5 h15.972 v-1.5 H36.3 V22.2 z" fill="#bcc5d2"/></svg><span class="t" style="left:868.6px;top:319.8px;transform:translateX(-50%);font-size:6.6px;line-height:9px;color:#2e3138;font-weight:400;-webkit-text-stroke:.2px #2e3138">7<i class="td"></i><i class="tu"></i>8</span><div class="r" style="left:896.0px;top:331.0px;width:40.1px;height:61.0px;background:#f1f2f5;"></div><svg class="r" style="left:897.9px;top:334.3px;" width="36.3" height="22.2" viewBox="0 0 36.3 22.2" fill="none"><path d="M0 0h36.3 v22.2 h-10.164 v-1.5 h-15.972 v1.5 H0z" fill="#bcc5d2"/></svg><svg class="r" style="left:897.9px;top:368.2px;" width="36.3" height="22.2" viewBox="0 0 36.3 22.2" fill="none"><path d="M0 22.2 V0 h10.164 v1.5 h15.972 v-1.5 H36.3 V22.2 z" fill="#bcc5d2"/></svg><span class="t" style="left:916.0px;top:319.8px;transform:translateX(-50%);font-size:6.6px;line-height:9px;color:#2e3138;font-weight:400;-webkit-text-stroke:.2px #2e3138">9<i class="td"></i><i class="tu"></i>10</span><div class="r" style="left:943.3px;top:331.0px;width:40.1px;height:61.0px;background:#f1f2f5;"></div><svg class="r" style="left:945.2px;top:334.3px;" width="36.3" height="22.2" viewBox="0 0 36.3 22.2" fill="none"><path d="M0 0h36.3 v22.2 h-10.164 v-1.5 h-15.972 v1.5 H0z" fill="#bcc5d2"/></svg><svg class="r" style="left:945.2px;top:368.2px;" width="36.3" height="22.2" viewBox="0 0 36.3 22.2" fill="none"><path d="M0 22.2 V0 h10.164 v1.5 h15.972 v-1.5 H36.3 V22.2 z" fill="#bcc5d2"/></svg><span class="t" style="left:963.3px;top:319.8px;transform:translateX(-50%);font-size:6.6px;line-height:9px;color:#2e3138;font-weight:400;-webkit-text-stroke:.2px #2e3138">11<i class="td"></i><i class="tu"></i>12</span><div class="r" style="left:990.7px;top:331.0px;width:40.1px;height:61.0px;background:#f1f2f5;"></div><svg class="r" style="left:992.6px;top:334.3px;" width="36.3" height="22.2" viewBox="0 0 36.3 22.2" fill="none"><path d="M0 0h36.3 v22.2 h-10.164 v-1.5 h-15.972 v1.5 H0z" fill="#bcc5d2"/></svg><svg class="r" style="left:992.6px;top:368.2px;" width="36.3" height="22.2" viewBox="0 0 36.3 22.2" fill="none"><path d="M0 22.2 V0 h10.164 v1.5 h15.972 v-1.5 H36.3 V22.2 z" fill="#bcc5d2"/></svg><span class="t" style="left:1010.7px;top:319.8px;transform:translateX(-50%);font-size:6.6px;line-height:9px;color:#2e3138;font-weight:400;-webkit-text-stroke:.2px #2e3138">13<i class="td"></i><i class="tu"></i>14</span><div class="r" style="left:1038.1px;top:331.0px;width:40.1px;height:61.0px;background:#f1f2f5;"></div><svg class="r" style="left:1040.0px;top:334.3px;" width="36.3" height="22.2" viewBox="0 0 36.3 22.2" fill="none"><path d="M0 0h36.3 v22.2 h-10.164 v-1.5 h-15.972 v1.5 H0z" fill="#bcc5d2"/></svg><svg class="r" style="left:1040.0px;top:368.2px;" width="36.3" height="22.2" viewBox="0 0 36.3 22.2" fill="none"><path d="M0 22.2 V0 h10.164 v1.5 h15.972 v-1.5 H36.3 V22.2 z" fill="#bcc5d2"/></svg><span class="t" style="left:1058.1px;top:319.8px;transform:translateX(-50%);font-size:6.6px;line-height:9px;color:#2e3138;font-weight:400;-webkit-text-stroke:.2px #2e3138">15<i class="td"></i><i class="tu"></i>16</span><div class="r" style="left:1085.5px;top:331.0px;width:40.1px;height:61.0px;background:#f1f2f5;"></div><svg class="r" style="left:1087.4px;top:334.3px;" width="36.3" height="22.2" viewBox="0 0 36.3 22.2" fill="none"><path d="M0 0h36.3 v22.2 h-10.164 v-1.5 h-15.972 v1.5 H0z" fill="#bcc5d2"/></svg><svg class="r" style="left:1087.4px;top:368.2px;" width="36.3" height="22.2" viewBox="0 0 36.3 22.2" fill="none"><path d="M0 22.2 V0 h10.164 v1.5 h15.972 v-1.5 H36.3 V22.2 z" fill="#bcc5d2"/></svg><span class="t" style="left:1105.5px;top:319.8px;transform:translateX(-50%);font-size:6.6px;line-height:9px;color:#2e3138;font-weight:400;-webkit-text-stroke:.2px #2e3138">17<i class="td"></i><i class="tu"></i>18</span><div class="r" style="left:1132.9px;top:331.0px;width:40.1px;height:61.0px;background:#f1f2f5;"></div><svg class="r" style="left:1134.8px;top:334.3px;" width="36.3" height="22.2" viewBox="0 0 36.3 22.2" fill="none"><path d="M0 0h36.3 v22.2 h-10.164 v-1.5 h-15.972 v1.5 H0z" fill="#bcc5d2"/></svg><svg class="r" style="left:1134.8px;top:368.2px;" width="36.3" height="22.2" viewBox="0 0 36.3 22.2" fill="none"><path d="M0 22.2 V0 h10.164 v1.5 h15.972 v-1.5 H36.3 V22.2 z" fill="#bcc5d2"/></svg><span class="t" style="left:1152.9px;top:319.8px;transform:translateX(-50%);font-size:6.6px;line-height:9px;color:#2e3138;font-weight:400;-webkit-text-stroke:.2px #2e3138">19<i class="td"></i><i class="tu"></i>20</span><div class="r" style="left:1180.3px;top:331.0px;width:40.1px;height:61.0px;background:#f1f2f5;"></div><svg class="r" style="left:1182.2px;top:334.3px;" width="36.3" height="22.2" viewBox="0 0 36.3 22.2" fill="none"><path d="M0 0h36.3 v22.2 h-10.164 v-1.5 h-15.972 v1.5 H0z" fill="#bcc5d2"/></svg><svg class="r" style="left:1182.2px;top:368.2px;" width="36.3" height="22.2" viewBox="0 0 36.3 22.2" fill="none"><path d="M0 22.2 V0 h10.164 v1.5 h15.972 v-1.5 H36.3 V22.2 z" fill="#bcc5d2"/></svg><span class="t" style="left:1200.3px;top:319.8px;transform:translateX(-50%);font-size:6.6px;line-height:9px;color:#2e3138;font-weight:400;-webkit-text-stroke:.2px #2e3138">21<i class="td"></i><i class="tu"></i>22</span><div class="r" style="left:1227.7px;top:331.0px;width:40.1px;height:61.0px;background:#f1f2f5;"></div><svg class="r" style="left:1229.6px;top:334.3px;" width="36.3" height="22.2" viewBox="0 0 36.3 22.2" fill="none"><path d="M0 0h36.3 v22.2 h-10.164 v-1.5 h-15.972 v1.5 H0z" fill="#bcc5d2"/></svg><svg class="r" style="left:1229.6px;top:368.2px;" width="36.3" height="22.2" viewBox="0 0 36.3 22.2" fill="none"><path d="M0 22.2 V0 h10.164 v1.5 h15.972 v-1.5 H36.3 V22.2 z" fill="#bcc5d2"/></svg><span class="t" style="left:1247.7px;top:319.8px;transform:translateX(-50%);font-size:6.6px;line-height:9px;color:#2e3138;font-weight:400;-webkit-text-stroke:.2px #2e3138">23<i class="td"></i><i class="tu"></i>24</span><div class="r" style="left:1282.0px;top:364.6px;width:119.0px;height:26.6px;background:#f1f2f5;"></div><svg class="r" style="left:1284.5px;top:366.5px;" width="36.5" height="22.6" viewBox="0 0 36.5 22.6" fill="none"><path d="M0 0h36.5 v22.6 h-10.22 v-1.5 h-16.06 v1.5 H0z" fill="#747e8c"/></svg><span class="t" style="left:1302.5px;transform:translateX(-50%) scaleX(0.928);top:354.6px;font-size:6.4px;line-height:8px;color:#2e3138;font-weight:400;-webkit-text-stroke:0.2px #2e3138;">25</span><svg class="r" style="left:1323.6px;top:366.5px;" width="36.2" height="22.6" viewBox="0 0 36.2 22.6" fill="none"><path d="M0 0h36.2 v22.6 h-10.136 v-1.5 h-15.928 v1.5 H0z" fill="#bcc5d2"/></svg><span class="t" style="left:1341.4px;transform:translateX(-50%) scaleX(0.928);top:354.6px;font-size:6.4px;line-height:8px;color:#2e3138;font-weight:400;-webkit-text-stroke:0.2px #2e3138;">26</span><svg class="r" style="left:1362.6px;top:366.5px;" width="36" height="22.6" viewBox="0 0 36 22.6" fill="none"><path d="M0 0h36 v22.6 h-10.08 v-1.5 h-15.84 v1.5 H0z" fill="#bcc5d2"/></svg><span class="t" style="left:1380.3px;transform:translateX(-50%) scaleX(0.928);top:354.6px;font-size:6.4px;line-height:8px;color:#2e3138;font-weight:400;-webkit-text-stroke:0.2px #2e3138;">27</span><div class="r" style="left:1302.0px;top:348.8px;width:0.8px;height:3.0px;background:#bcc3d0;"></div><div class="r" style="left:1302.0px;top:348.8px;width:48.0px;height:0.8px;background:#bcc3d0;"></div><div class="r" style="left:1369.5px;top:348.8px;width:31.5px;height:0.8px;background:#bcc3d0;"></div><span class="t" style="left:1359.8px;transform:translateX(-50%) scaleX(0.898);top:345.5px;font-size:5.5px;line-height:7px;color:#555a64;font-weight:400;-webkit-text-stroke:0.15px #555a64;">SFP+</span><svg class="r" style="left:1269.8px;top:432.0px;" width="19.5" height="11.5" viewBox="0 0 19.5 11.5" fill="none"><path d="M0 0h19.5 v11.5 h-5.46 v-1.5 h-8.58 v1.5 H0z" fill="#bcc5d2"/></svg><span class="t" style="left:1297.5px;transform-origin:0 50%;transform:scaleX(0.948);top:432.7px;font-size:10.5px;line-height:14px;color:#a3a8b3;font-weight:400;-webkit-text-stroke:0.15px #a3a8b3;">Optical</span><svg class="r" style="left:1344.5px;top:431.5px;" width="17" height="12" viewBox="0 0 17 12" fill="none"><path d="M5 0h7l1.6 2.2h3.4V12H0V2.2h3.4z" fill="#bcc5d2"/></svg><span class="t" style="left:1369.0px;transform-origin:0 50%;transform:scaleX(0.929);top:432.7px;font-size:10.5px;line-height:14px;color:#a3a8b3;font-weight:400;-webkit-text-stroke:0.15px #a3a8b3;">Copper</span><div class="r" style="left:321.0px;top:471.7px;width:1101.0px;height:288.3px;background:#f7f7f7;border-radius:3px"></div><span class="t" style="left:343.0px;transform-origin:0 50%;transform:scaleX(0.942);top:482.5px;font-size:14.5px;line-height:19px;color:#1a1a2e;font-weight:400;-webkit-text-stroke:0.7px #1a1a2e;">MAC Address</span><span class="t" style="left:1367.0px;transform-origin:0 50%;transform:scaleX(0.940);top:486.5px;font-size:10.5px;line-height:14px;color:#2cc9be;font-weight:400;-webkit-text-stroke:0.15px #2cc9be;">More</span><svg class="r" style="left:1393.3px;top:490.2px;" width="4.8" height="7.2" viewBox="0 0 6 9" fill="none"><path d="M1.5 1l3.5 3.5L1.5 8" stroke="#2cc9be" stroke-width="1.7" stroke-linecap="round" stroke-linejoin="round"/></svg><div class="r" style="left:343.0px;top:511.0px;width:1076.0px;height:1.0px;background:#eaebef;"></div><div class="r" style="left:343.0px;top:528.0px;width:1058.0px;height:33.3px;background:#f0f1f3;"></div><div class="r" style="left:343.0px;top:560.5px;width:1058.0px;height:1.0px;background:#d9dbe0;"></div><span class="t" style="left:365.3px;transform-origin:0 50%;transform:scaleX(0.984);top:537.5px;font-size:11.4px;line-height:15px;color:#23252f;font-weight:400;-webkit-text-stroke:0.3px #23252f;">VLAN</span><span class="t" style="left:570.7px;transform-origin:0 50%;transform:scaleX(0.960);top:537.5px;font-size:11.4px;line-height:15px;color:#23252f;font-weight:400;-webkit-text-stroke:0.3px #23252f;">MAC</span><span class="t" style="left:896.0px;transform-origin:0 50%;transform:scaleX(0.969);top:537.5px;font-size:11.4px;line-height:15px;color:#23252f;font-weight:400;-webkit-text-stroke:0.3px #23252f;">Item Category</span><span class="t" style="left:1213.0px;transform-origin:0 50%;transform:scaleX(1.005);top:537.5px;font-size:11.4px;line-height:15px;color:#23252f;font-weight:400;-webkit-text-stroke:0.3px #23252f;">Port</span><div class="r" style="left:343.0px;top:594.7px;width:1058.0px;height:33.4px;background:#f0f1f3;"></div><div class="r" style="left:343.0px;top:661.5px;width:1058.0px;height:33.5px;background:#f0f1f3;"></div><span class="t" style="left:365.3px;transform-origin:0 50%;transform:scaleX(0.984);top:571.4px;font-size:10.5px;line-height:14px;color:#555962;font-weight:400;-webkit-text-stroke:0.15px #555962;">10</span><span class="t" style="left:570.7px;transform-origin:0 50%;transform:scaleX(0.968);top:571.4px;font-size:10.5px;line-height:14px;color:#555962;font-weight:400;-webkit-text-stroke:0.15px #555962;">0011.2233.4480</span><span class="t" style="left:896.0px;transform-origin:0 50%;transform:scaleX(0.930);top:571.4px;font-size:10.5px;line-height:14px;color:#555962;font-weight:400;-webkit-text-stroke:0.15px #555962;">Dynamic</span><span class="t" style="left:1213.0px;transform-origin:0 50%;transform:scaleX(1.062);top:571.4px;font-size:10.5px;line-height:14px;color:#555962;font-weight:400;-webkit-text-stroke:0.15px #555962;">g2/0/2</span><span class="t" style="left:365.3px;transform-origin:0 50%;transform:scaleX(0.984);top:604.8px;font-size:10.5px;line-height:14px;color:#555962;font-weight:400;-webkit-text-stroke:0.15px #555962;">10</span><span class="t" style="left:570.7px;transform-origin:0 50%;transform:scaleX(0.931);top:604.8px;font-size:10.5px;line-height:14px;color:#555962;font-weight:400;-webkit-text-stroke:0.15px #555962;">649d.99d0.7ea1</span><span class="t" style="left:896.0px;transform-origin:0 50%;transform:scaleX(0.930);top:604.8px;font-size:10.5px;line-height:14px;color:#555962;font-weight:400;-webkit-text-stroke:0.15px #555962;">Dynamic</span><span class="t" style="left:1213.0px;transform-origin:0 50%;transform:scaleX(1.062);top:604.8px;font-size:10.5px;line-height:14px;color:#555962;font-weight:400;-webkit-text-stroke:0.15px #555962;">g1/0/2</span><span class="t" style="left:365.3px;transform-origin:0 50%;transform:scaleX(0.984);top:638.2px;font-size:10.5px;line-height:14px;color:#555962;font-weight:400;-webkit-text-stroke:0.15px #555962;">10</span><span class="t" style="left:570.7px;transform-origin:0 50%;transform:scaleX(0.931);top:638.2px;font-size:10.5px;line-height:14px;color:#555962;font-weight:400;-webkit-text-stroke:0.15px #555962;">649d.99d0.46ae</span><span class="t" style="left:896.0px;transform-origin:0 50%;transform:scaleX(0.930);top:638.2px;font-size:10.5px;line-height:14px;color:#555962;font-weight:400;-webkit-text-stroke:0.15px #555962;">Dynamic</span><span class="t" style="left:1213.0px;transform-origin:0 50%;transform:scaleX(1.062);top:638.2px;font-size:10.5px;line-height:14px;color:#555962;font-weight:400;-webkit-text-stroke:0.15px #555962;">g1/0/2</span><span class="t" style="left:365.3px;transform-origin:0 50%;transform:scaleX(0.984);top:671.6px;font-size:10.5px;line-height:14px;color:#555962;font-weight:400;-webkit-text-stroke:0.15px #555962;">10</span><span class="t" style="left:570.7px;transform-origin:0 50%;transform:scaleX(0.944);top:671.6px;font-size:10.5px;line-height:14px;color:#555962;font-weight:400;-webkit-text-stroke:0.15px #555962;">5416.515d.71ed</span><span class="t" style="left:896.0px;transform-origin:0 50%;transform:scaleX(0.930);top:671.6px;font-size:10.5px;line-height:14px;color:#555962;font-weight:400;-webkit-text-stroke:0.15px #555962;">Dynamic</span><span class="t" style="left:1213.0px;transform-origin:0 50%;transform:scaleX(1.062);top:671.6px;font-size:10.5px;line-height:14px;color:#555962;font-weight:400;-webkit-text-stroke:0.15px #555962;">g1/0/2</span></div></div><div class="L" style="clip-path:inset(76px 88px 0 1423px);-webkit-mask-image:linear-gradient(180deg,rgba(0,0,0,.35) 0,rgba(0,0,0,.35) 330px,rgba(0,0,0,.12) 560px,rgba(0,0,0,.0) 670px);mask-image:linear-gradient(180deg,rgba(0,0,0,.35) 0,rgba(0,0,0,.35) 330px,rgba(0,0,0,.12) 560px,rgba(0,0,0,.0) 670px)"><div class="L" style="overflow:visible;transform:translate(42px,57.5px)"><div class="r" style="left:304.0px;top:61.0px;width:1134.0px;height:699.0px;background:#e9eaee;"></div><div class="r" style="left:304.0px;top:19.0px;width:1134.0px;height:42.0px;background:#f7f7f7;"></div><span class="t" style="left:321.0px;transform-origin:0 50%;transform:scaleX(0.895);top:34.0px;font-size:10.5px;line-height:14px;color:#a9adb8;font-weight:400;-webkit-text-stroke:0.15px #a9adb8;">Device Status</span><span class="t" style="left:382.0px;transform-origin:0 50%;transform:scaleX(0.950);top:35.0px;font-size:9px;line-height:12px;color:#a9adb8;font-weight:400;-webkit-text-stroke:0.15px #a9adb8;">&gt;</span><span class="t" style="left:391.5px;transform-origin:0 50%;transform:scaleX(0.933);top:34.0px;font-size:10.5px;line-height:14px;color:#4a4d57;font-weight:400;-webkit-text-stroke:0.15px #4a4d57;">Device Info</span><svg class="r" style="left:1237.0px;top:33.0px;" width="14" height="14" viewBox="0 0 14 14" fill="none"><path d="M2 1h7.6L12.6 4v8a1 1 0 0 1-1 1H2a1 1 0 0 1-1-1V2a1 1 0 0 1 1-1z" stroke="#4e5159" stroke-width="1.4" stroke-linecap="round" stroke-linejoin="round"/><path d="M4.2 1.2v2.2h4.4V1.2" stroke="#4e5159" stroke-width="1.4" stroke-linecap="round" stroke-linejoin="round" stroke-width="1.8"/><path d="M4 7.7h5.8M4 10.2h3.4" stroke="#14c7bb" stroke-width="1.3" stroke-linecap="round"/></svg><span class="t" style="left:1257.0px;transform-origin:0 50%;transform:scaleX(0.913);top:34.5px;font-size:10px;line-height:13px;color:#4a4d57;font-weight:400;-webkit-text-stroke:0.15px #4a4d57;">Save All</span><svg class="r" style="left:1303.5px;top:33.0px;" width="15" height="15" viewBox="0 0 15 15" fill="none"><circle cx="6.8" cy="3.8" r="2.5" stroke="#4e5159" stroke-width="1.4" stroke-linecap="round" stroke-linejoin="round"/><path d="M1.2 13.2c0-3.4 2.4-5.6 5.6-5.6 1.3 0 2.4.3 3.3 1" stroke="#4e5159" stroke-width="1.4" stroke-linecap="round" stroke-linejoin="round"/><path d="M9.2 10.2h5l-1 3.4h-3z" fill="#14c7bb"/></svg><span class="t" style="left:1324.0px;transform-origin:0 50%;transform:scaleX(0.955);top:34.5px;font-size:10.2px;line-height:13px;color:#4a4d57;font-weight:400;-webkit-text-stroke:0.15px #4a4d57;">admin</span><svg class="r" style="left:1366.5px;top:34.0px;" width="12" height="13" viewBox="0 0 12 13" fill="none"><path d="M5.6 1H2a1 1 0 0 0-1 1v9a1 1 0 0 0 1 1h3.6" stroke="#4e5159" stroke-width="1.4" stroke-linecap="round" stroke-linejoin="round"/><path d="M4.2 6.5h5.2M7.4 4.2l2.2 2.3L7.4 8.8" stroke="#14c7bb" stroke-width="1.4" stroke-linecap="round" stroke-linejoin="round"/></svg><span class="t" style="left:1382.5px;transform-origin:0 50%;transform:scaleX(0.946);top:34.5px;font-size:10.2px;line-height:13px;color:#4a4d57;font-weight:400;-webkit-text-stroke:0.15px #4a4d57;">Logout</span><div class="r" style="left:321.0px;top:79.4px;width:777.0px;height:156.9px;background:#f7f7f7;border-radius:3px"></div><span class="t" style="left:343.0px;transform-origin:0 50%;transform:scaleX(0.953);top:90.3px;font-size:14.5px;line-height:19px;color:#1a1a2e;font-weight:400;-webkit-text-stroke:0.7px #1a1a2e;">System Information</span><svg class="r" style="left:1061.0px;top:96.0px;" width="11" height="7" viewBox="0 0 11 7" fill="none"><path d="M1 6l4.5-4.7L10 6" stroke="#b3b8c2" stroke-width="1.1" stroke-linecap="round" stroke-linejoin="round"/></svg><div class="r" style="left:343.0px;top:117.0px;width:752.0px;height:1.0px;background:#eaebef;"></div><svg class="r" style="left:360.0px;top:140.0px;" width="98" height="36" viewBox="0 0 98 36" fill="none"><defs><linearGradient id="sw1" x1="0" y1="0" x2="1" y2="0"><stop offset="0" stop-color="#1f1f21"/><stop offset=".5" stop-color="#555557"/><stop offset="1" stop-color="#1a1a1c"/></linearGradient><linearGradient id="sw2" x1="0" y1="0" x2="0" y2="1"><stop offset="0" stop-color="#3a3a3c" stop-opacity="0"/><stop offset="1" stop-color="#0c0c0d" stop-opacity=".75"/></linearGradient></defs><path d="M16 1.6h67L96.9 26.4H1.1z" fill="url(#sw1)"/><path d="M16 1.6h67L96.9 26.4H1.1z" fill="url(#sw2)"/><rect x="1" y="26.2" width="96" height="8.8" fill="#a7abb2"/><rect x="1" y="26.2" width="96" height=".9" fill="#c9ccd1"/><path d="M17.5 29.2h12M31 29.2h47M17.5 32.6h12M31 32.6h47" stroke="#2d2f33" stroke-width="1.4" stroke-dasharray="2.6 1.3"/><rect x="79" y="31.8" width="12" height="1.6" fill="#4a4d52"/><rect x="3.5" y="31.4" width="2" height="2" fill="#33363a"/><rect x="9.5" y="23.4" width="8" height="1.3" fill="#777"/></svg><span class="t" style="left:360.0px;transform-origin:0 50%;transform:scaleX(0.920);top:186.3px;font-size:10.5px;line-height:14px;color:#a3a8b3;font-weight:400;-webkit-text-stroke:0.15px #a3a8b3;">Model:</span><span class="t" style="left:391.3px;transform-origin:0 50%;transform:scaleX(0.909);top:186.3px;font-size:10.5px;line-height:14px;color:#4a4d55;font-weight:400;-webkit-text-stroke:0.15px #4a4d55;">S3900-24F4S-R</span><div class="r" style="left:507.0px;top:139.0px;width:1.0px;height:66.0px;background:#f1f1f3;"></div><span class="t" style="left:548.4px;transform-origin:0 50%;transform:scaleX(0.901);top:131.0px;font-size:10.5px;line-height:14px;color:#a3a8b3;font-weight:400;-webkit-text-stroke:0.15px #a3a8b3;">Device Type:</span><span class="t" style="left:611.5px;transform-origin:0 50%;transform:scaleX(0.912);top:131.0px;font-size:10.5px;line-height:14px;color:#4a4d55;font-weight:400;-webkit-text-stroke:0.15px #4a4d55;">S3900-24F4S-R</span><span class="t" style="left:548.4px;transform-origin:0 50%;transform:scaleX(0.910);top:150.5px;font-size:10.5px;line-height:14px;color:#a3a8b3;font-weight:400;-webkit-text-stroke:0.15px #a3a8b3;">Firmware Version:</span><span class="t" style="left:633.4px;transform-origin:0 50%;transform:scaleX(0.932);top:150.5px;font-size:10.5px;line-height:14px;color:#4a4d55;font-weight:400;-webkit-text-stroke:0.15px #4a4d55;">2.2.0F Build 107745</span><span class="t" style="left:548.4px;transform-origin:0 50%;transform:scaleX(0.897);top:170.0px;font-size:10.5px;line-height:14px;color:#a3a8b3;font-weight:400;-webkit-text-stroke:0.15px #a3a8b3;">Serial Num:</span><span class="t" style="left:606.0px;transform-origin:0 50%;transform:scaleX(0.951);top:170.0px;font-size:10.5px;line-height:14px;color:#4a4d55;font-weight:400;-webkit-text-stroke:0.15px #4a4d55;">CG2202218399N00071</span><span class="t" style="left:548.4px;transform-origin:0 50%;transform:scaleX(0.882);top:189.7px;font-size:10.5px;line-height:14px;color:#a3a8b3;font-weight:400;-webkit-text-stroke:0.15px #a3a8b3;">IP Address:</span><span class="t" style="left:604.0px;transform-origin:0 50%;transform:scaleX(0.943);top:189.7px;font-size:10.5px;line-height:14px;color:#4a4d55;font-weight:400;-webkit-text-stroke:0.15px #4a4d55;">10.36.220.174</span><span class="t" style="left:548.4px;transform-origin:0 50%;transform:scaleX(0.928);top:209.2px;font-size:10.5px;line-height:14px;color:#a3a8b3;font-weight:400;-webkit-text-stroke:0.15px #a3a8b3;">Uptime:</span><span class="t" style="left:590.6px;transform-origin:0 50%;transform:scaleX(0.929);top:209.2px;font-size:10.5px;line-height:14px;color:#4a4d55;font-weight:400;-webkit-text-stroke:0.15px #4a4d55;">0 day -17 hour -45 minute -8 second</span><span class="t" style="left:792.0px;transform-origin:0 50%;transform:scaleX(0.892);top:131.0px;font-size:10.5px;line-height:14px;color:#a3a8b3;font-weight:400;-webkit-text-stroke:0.15px #a3a8b3;">BIOS Version:</span><span class="t" style="left:859.3px;transform-origin:0 50%;transform:scaleX(0.929);top:131.0px;font-size:10.5px;line-height:14px;color:#4a4d55;font-weight:400;-webkit-text-stroke:0.15px #4a4d55;">0.1.4</span><span class="t" style="left:792.0px;transform-origin:0 50%;transform:scaleX(0.922);top:150.5px;font-size:10.5px;line-height:14px;color:#a3a8b3;font-weight:400;-webkit-text-stroke:0.15px #a3a8b3;">Web Version:</span><span class="t" style="left:857.3px;transform-origin:0 50%;transform:scaleX(0.951);top:150.5px;font-size:10.5px;line-height:14px;color:#4a4d55;font-weight:400;-webkit-text-stroke:0.15px #4a4d55;">web-v2.2.2.wrp</span><span class="t" style="left:792.0px;transform-origin:0 50%;transform:scaleX(0.913);top:170.0px;font-size:10.5px;line-height:14px;color:#a3a8b3;font-weight:400;-webkit-text-stroke:0.15px #a3a8b3;">MAC Address:</span><span class="t" style="left:861.3px;transform-origin:0 50%;transform:scaleX(0.931);top:170.0px;font-size:10.5px;line-height:14px;color:#4a4d55;font-weight:400;-webkit-text-stroke:0.15px #4a4d55;">64:9D:99:4F:82:6C</span><span class="t" style="left:792.0px;transform-origin:0 50%;transform:scaleX(0.924);top:189.7px;font-size:10.5px;line-height:14px;color:#a3a8b3;font-weight:400;-webkit-text-stroke:0.15px #a3a8b3;">Current Time:</span><span class="t" style="left:859.3px;transform-origin:0 50%;transform:scaleX(0.957);top:189.7px;font-size:10.5px;line-height:14px;color:#4a4d55;font-weight:400;-webkit-text-stroke:0.15px #4a4d55;">2000-1-1 17:45:55</span><div class="r" style="left:1114.7px;top:79.4px;width:307.3px;height:156.9px;background:#f7f7f7;border-radius:3px"></div><span class="t" style="left:1137.0px;transform-origin:0 50%;transform:scaleX(0.895);top:90.3px;font-size:14.5px;line-height:19px;color:#1a1a2e;font-weight:400;-webkit-text-stroke:0.7px #1a1a2e;">Usage</span><svg class="r" style="left:1390.0px;top:96.0px;" width="11" height="7" viewBox="0 0 11 7" fill="none"><path d="M1 6l4.5-4.7L10 6" stroke="#b3b8c2" stroke-width="1.1" stroke-linecap="round" stroke-linejoin="round"/></svg><div class="r" style="left:1137.0px;top:117.0px;width:282.0px;height:1.0px;background:#eaebef;"></div><span class="t" style="left:1137.0px;transform-origin:0 50%;transform:scaleX(0.866);top:134.2px;font-size:10.5px;line-height:14px;color:#4a4d55;font-weight:400;-webkit-text-stroke:0.15px #4a4d55;">CPU Usage</span><span class="t" style="right:167.5px;transform-origin:100% 50%;transform:scaleX(0.930);top:134.5px;font-size:14.5px;line-height:19px;color:#2cc9be;font-weight:400;">20%</span><div class="r" style="left:1137.0px;top:156.2px;width:263.5px;height:4.0px;background:#e6e7ea;border-radius:2px"></div><div class="r" style="left:1137.0px;top:156.2px;width:53.0px;height:4.0px;background:#17c7bb;border-radius:2px"></div><span class="t" style="left:1137.0px;transform-origin:0 50%;transform:scaleX(0.913);top:175.0px;font-size:10.5px;line-height:14px;color:#4a4d55;font-weight:400;-webkit-text-stroke:0.15px #4a4d55;">Memory Usage</span><span class="t" style="right:167.5px;transform-origin:100% 50%;transform:scaleX(0.930);top:175.2px;font-size:14.5px;line-height:19px;color:#5b9cf2;font-weight:400;">41%</span><div class="r" style="left:1137.0px;top:197.8px;width:263.5px;height:4.0px;background:#e6e7ea;border-radius:2px"></div><div class="r" style="left:1137.0px;top:197.8px;width:108.0px;height:4.0px;background:#4d96f5;border-radius:2px"></div><div class="r" style="left:321.0px;top:253.3px;width:1101.0px;height:202.5px;background:#f7f7f7;border-radius:3px"></div><span class="t" style="left:343.0px;transform-origin:0 50%;transform:scaleX(0.938);top:264.3px;font-size:14.5px;line-height:19px;color:#1a1a2e;font-weight:400;-webkit-text-stroke:0.7px #1a1a2e;">Interface Panel</span><div class="r" style="left:343.0px;top:291.6px;width:1076.0px;height:1.0px;background:#eaebef;"></div><div class="r" style="left:1171.4px;top:268.5px;width:8.6px;height:8.5px;background:#17c7bb;"></div><span class="t" style="left:1185.7px;transform-origin:0 50%;transform:scaleX(0.944);top:266.0px;font-size:10.5px;line-height:14px;color:#a3a8b3;font-weight:400;-webkit-text-stroke:0.15px #a3a8b3;">Active</span><div class="r" style="left:1229.8px;top:268.5px;width:8.4px;height:8.5px;background:#bcc5d2;"></div><span class="t" style="left:1243.5px;transform-origin:0 50%;transform:scaleX(0.926);top:266.0px;font-size:10.5px;line-height:14px;color:#a3a8b3;font-weight:400;-webkit-text-stroke:0.15px #a3a8b3;">Inactive</span><div class="r" style="left:1294.0px;top:268.5px;width:8.6px;height:8.5px;background:#747e8c;"></div><span class="t" style="left:1308.0px;transform-origin:0 50%;transform:scaleX(0.888);top:266.0px;font-size:10.5px;line-height:14px;color:#a3a8b3;font-weight:400;-webkit-text-stroke:0.15px #a3a8b3;">Errdisable</span><span class="t" style="left:1367.0px;transform-origin:0 50%;transform:scaleX(0.940);top:267.0px;font-size:10.5px;line-height:14px;color:#2cc9be;font-weight:400;-webkit-text-stroke:0.15px #2cc9be;">More</span><svg class="r" style="left:1393.3px;top:270.7px;" width="4.8" height="7.2" viewBox="0 0 6 9" fill="none"><path d="M1.5 1l3.5 3.5L1.5 8" stroke="#2cc9be" stroke-width="1.7" stroke-linecap="round" stroke-linejoin="round"/></svg><div class="r" style="left:343.0px;top:309.2px;width:1058.0px;height:105.3px;background:linear-gradient(180deg,#e3e7ef 0%,#dde2ea 60%,#d9dee7 100%);border-radius:2px"></div><div class="r" style="left:351.0px;top:317.2px;width:73.0px;height:13.6px;background:rgba(255,255,255,.42);border-radius:1px"></div><span class="t" style="left:355.2px;transform-origin:0 50%;transform:scaleX(0.907);top:318.0px;font-size:9px;line-height:12px;color:#b3bac6;font-weight:700;-webkit-text-stroke:0.15px #b3bac6;">S3900 - 24F4S-R</span><span class="t" style="left:383.0px;transform:translateX(-50%) scaleX(0.956);top:356.5px;font-size:5.5px;line-height:7px;color:#44474d;font-weight:700;-webkit-text-stroke:0.15px #44474d;">CONSOLE</span><div class="r" style="left:364.0px;top:367.2px;width:38.7px;height:30.6px;background:#f2f3f6;"></div><svg class="r" style="left:366.5px;top:369.8px;" width="33.8" height="25" viewBox="0 0 33.8 25" fill="none"><path d="M1 0h31.8a1 1 0 0 1 1 1v17.3h-6.6v3.6h-3.6v3h-11.4v-3h-3.6v-3.6H0V1a1 1 0 0 1 1-1z" fill="#bcc5d2"/></svg><span class="t" style="left:416.3px;transform:translateX(-50%) scaleX(0.885);top:359.3px;font-size:5.2px;line-height:7px;color:#4a4e56;font-weight:400;-webkit-text-stroke:0.2px #4a4e56;">SYS</span><span class="t" style="left:416.3px;transform:translateX(-50%) scaleX(0.991);top:391.3px;font-size:5.2px;line-height:7px;color:#4a4e56;font-weight:400;-webkit-text-stroke:0.2px #4a4e56;">PWR</span><div class="r" style="left:413.4px;top:367.6px;width:5.8px;height:5.8px;background:#c9cedb;border-radius:50%"></div><div class="r" style="left:413.4px;top:383.3px;width:5.8px;height:5.8px;background:#c9cedb;border-radius:50%"></div><div class="r" style="left:430.1px;top:335.5px;width:6.2px;height:6.2px;background:#c4cad9;border-radius:50%"></div><span class="t" style="left:430.5px;transform-origin:0 50%;transform:scaleX(0.899);top:342.8px;font-size:6.8px;line-height:9px;color:#44474d;font-weight:400;-webkit-text-stroke:0.15px #44474d;">4</span><div class="r" style="left:430.1px;top:351.5px;width:6.2px;height:6.2px;background:#c4cad9;border-radius:50%"></div><span class="t" style="left:430.5px;transform-origin:0 50%;transform:scaleX(0.899);top:358.9px;font-size:6.8px;line-height:9px;color:#44474d;font-weight:400;-webkit-text-stroke:0.15px #44474d;">3</span><div class="r" style="left:430.1px;top:367.5px;width:6.2px;height:6.2px;background:#17c7bb;border-radius:50%"></div><span class="t" style="left:430.5px;transform-origin:0 50%;transform:scaleX(0.899);top:374.9px;font-size:6.8px;line-height:9px;color:#44474d;font-weight:400;-webkit-text-stroke:0.15px #44474d;">2</span><div class="r" style="left:430.1px;top:383.5px;width:6.2px;height:6.2px;background:#c4cad9;border-radius:50%"></div><span class="t" style="left:430.5px;transform-origin:0 50%;transform:scaleX(0.899);top:390.7px;font-size:6.8px;line-height:9px;color:#44474d;font-weight:400;-webkit-text-stroke:0.15px #44474d;">1</span><div class="r" style="left:444.9px;top:335.5px;width:6.2px;height:6.2px;background:#c4cad9;border-radius:50%"></div><span class="t" style="left:445.3px;transform-origin:0 50%;transform:scaleX(0.899);top:342.8px;font-size:6.8px;line-height:9px;color:#44474d;font-weight:400;-webkit-text-stroke:0.15px #44474d;">8</span><div class="r" style="left:444.9px;top:351.5px;width:6.2px;height:6.2px;background:#c4cad9;border-radius:50%"></div><span class="t" style="left:445.3px;transform-origin:0 50%;transform:scaleX(0.899);top:358.9px;font-size:6.8px;line-height:9px;color:#44474d;font-weight:400;-webkit-text-stroke:0.15px #44474d;">7</span><div class="r" style="left:444.9px;top:367.5px;width:6.2px;height:6.2px;background:#c4cad9;border-radius:50%"></div><span class="t" style="left:445.3px;transform-origin:0 50%;transform:scaleX(0.899);top:374.9px;font-size:6.8px;line-height:9px;color:#44474d;font-weight:400;-webkit-text-stroke:0.15px #44474d;">6</span><div class="r" style="left:444.9px;top:383.5px;width:6.2px;height:6.2px;background:#c4cad9;border-radius:50%"></div><span class="t" style="left:445.3px;transform-origin:0 50%;transform:scaleX(0.899);top:390.7px;font-size:6.8px;line-height:9px;color:#44474d;font-weight:400;-webkit-text-stroke:0.15px #44474d;">5</span><div class="r" style="left:459.5px;top:335.5px;width:6.2px;height:6.2px;background:#c4cad9;border-radius:50%"></div><span class="t" style="left:459.9px;transform-origin:0 50%;transform:scaleX(0.952);top:342.8px;font-size:6.8px;line-height:9px;color:#44474d;font-weight:400;-webkit-text-stroke:0.15px #44474d;">12</span><div class="r" style="left:459.5px;top:351.5px;width:6.2px;height:6.2px;background:#c4cad9;border-radius:50%"></div><span class="t" style="left:459.9px;transform-origin:0 50%;transform:scaleX(1.019);top:358.9px;font-size:6.8px;line-height:9px;color:#44474d;font-weight:400;-webkit-text-stroke:0.15px #44474d;">11</span><div class="r" style="left:459.5px;top:367.5px;width:6.2px;height:6.2px;background:#c4cad9;border-radius:50%"></div><span class="t" style="left:459.9px;transform-origin:0 50%;transform:scaleX(0.952);top:374.9px;font-size:6.8px;line-height:9px;color:#44474d;font-weight:400;-webkit-text-stroke:0.15px #44474d;">10</span><div class="r" style="left:459.5px;top:383.5px;width:6.2px;height:6.2px;background:#c4cad9;border-radius:50%"></div><span class="t" style="left:459.9px;transform-origin:0 50%;transform:scaleX(0.899);top:390.7px;font-size:6.8px;line-height:9px;color:#44474d;font-weight:400;-webkit-text-stroke:0.15px #44474d;">9</span><div class="r" style="left:474.1px;top:335.5px;width:6.2px;height:6.2px;background:#c4cad9;border-radius:50%"></div><span class="t" style="left:474.5px;transform-origin:0 50%;transform:scaleX(0.952);top:342.8px;font-size:6.8px;line-height:9px;color:#44474d;font-weight:400;-webkit-text-stroke:0.15px #44474d;">16</span><div class="r" style="left:474.1px;top:351.5px;width:6.2px;height:6.2px;background:#c4cad9;border-radius:50%"></div><span class="t" style="left:474.5px;transform-origin:0 50%;transform:scaleX(0.952);top:358.9px;font-size:6.8px;line-height:9px;color:#44474d;font-weight:400;-webkit-text-stroke:0.15px #44474d;">15</span><div class="r" style="left:474.1px;top:367.5px;width:6.2px;height:6.2px;background:#c4cad9;border-radius:50%"></div><span class="t" style="left:474.5px;transform-origin:0 50%;transform:scaleX(0.952);top:374.9px;font-size:6.8px;line-height:9px;color:#44474d;font-weight:400;-webkit-text-stroke:0.15px #44474d;">14</span><div class="r" style="left:474.1px;top:383.5px;width:6.2px;height:6.2px;background:#c4cad9;border-radius:50%"></div><span class="t" style="left:474.5px;transform-origin:0 50%;transform:scaleX(0.952);top:390.7px;font-size:6.8px;line-height:9px;color:#44474d;font-weight:400;-webkit-text-stroke:0.15px #44474d;">13</span><div class="r" style="left:488.9px;top:335.5px;width:6.2px;height:6.2px;background:#c4cad9;border-radius:50%"></div><span class="t" style="left:489.3px;transform-origin:0 50%;transform:scaleX(0.952);top:342.8px;font-size:6.8px;line-height:9px;color:#44474d;font-weight:400;-webkit-text-stroke:0.15px #44474d;">20</span><div class="r" style="left:488.9px;top:351.5px;width:6.2px;height:6.2px;background:#c4cad9;border-radius:50%"></div><span class="t" style="left:489.3px;transform-origin:0 50%;transform:scaleX(0.952);top:358.9px;font-size:6.8px;line-height:9px;color:#44474d;font-weight:400;-webkit-text-stroke:0.15px #44474d;">19</span><div class="r" style="left:488.9px;top:367.5px;width:6.2px;height:6.2px;background:#c4cad9;border-radius:50%"></div><span class="t" style="left:489.3px;transform-origin:0 50%;transform:scaleX(0.952);top:374.9px;font-size:6.8px;line-height:9px;color:#44474d;font-weight:400;-webkit-text-stroke:0.15px #44474d;">18</span><div class="r" style="left:488.9px;top:383.5px;width:6.2px;height:6.2px;background:#c4cad9;border-radius:50%"></div><span class="t" style="left:489.3px;transform-origin:0 50%;transform:scaleX(0.952);top:390.7px;font-size:6.8px;line-height:9px;color:#44474d;font-weight:400;-webkit-text-stroke:0.15px #44474d;">17</span><div class="r" style="left:503.4px;top:335.5px;width:6.2px;height:6.2px;background:#c4cad9;border-radius:50%"></div><span class="t" style="left:503.8px;transform-origin:0 50%;transform:scaleX(0.952);top:342.8px;font-size:6.8px;line-height:9px;color:#44474d;font-weight:400;-webkit-text-stroke:0.15px #44474d;">24</span><div class="r" style="left:503.4px;top:351.5px;width:6.2px;height:6.2px;background:#c4cad9;border-radius:50%"></div><span class="t" style="left:503.8px;transform-origin:0 50%;transform:scaleX(0.952);top:358.9px;font-size:6.8px;line-height:9px;color:#44474d;font-weight:400;-webkit-text-stroke:0.15px #44474d;">23</span><div class="r" style="left:503.4px;top:367.5px;width:6.2px;height:6.2px;background:#c4cad9;border-radius:50%"></div><span class="t" style="left:503.8px;transform-origin:0 50%;transform:scaleX(0.952);top:374.9px;font-size:6.8px;line-height:9px;color:#44474d;font-weight:400;-webkit-text-stroke:0.15px #44474d;">22</span><div class="r" style="left:503.4px;top:383.5px;width:6.2px;height:6.2px;background:#c4cad9;border-radius:50%"></div><span class="t" style="left:503.8px;transform-origin:0 50%;transform:scaleX(0.952);top:390.7px;font-size:6.8px;line-height:9px;color:#44474d;font-weight:400;-webkit-text-stroke:0.15px #44474d;">21</span><div class="r" style="left:518.1px;top:335.5px;width:6.2px;height:6.2px;background:#6f7786;border-radius:50%"></div><span class="t" style="left:518.5px;transform-origin:0 50%;transform:scaleX(0.952);top:342.8px;font-size:6.8px;line-height:9px;color:#44474d;font-weight:400;-webkit-text-stroke:0.15px #44474d;">28</span><div class="r" style="left:518.1px;top:351.5px;width:6.2px;height:6.2px;background:#c4cad9;border-radius:50%"></div><span class="t" style="left:518.5px;transform-origin:0 50%;transform:scaleX(0.952);top:358.9px;font-size:6.8px;line-height:9px;color:#44474d;font-weight:400;-webkit-text-stroke:0.15px #44474d;">27</span><div class="r" style="left:518.1px;top:367.5px;width:6.2px;height:6.2px;background:#c4cad9;border-radius:50%"></div><span class="t" style="left:518.5px;transform-origin:0 50%;transform:scaleX(0.952);top:374.9px;font-size:6.8px;line-height:9px;color:#44474d;font-weight:400;-webkit-text-stroke:0.15px #44474d;">26</span><div class="r" style="left:518.1px;top:383.5px;width:6.2px;height:6.2px;background:#6f7786;border-radius:50%"></div><span class="t" style="left:518.5px;transform-origin:0 50%;transform:scaleX(0.952);top:390.7px;font-size:6.8px;line-height:9px;color:#44474d;font-weight:400;-webkit-text-stroke:0.15px #44474d;">25</span><div class="r" style="left:539.0px;top:331.0px;width:153.0px;height:61.0px;background:#f1f2f5;"></div><svg class="r" style="left:544.6px;top:334.6px;" width="33.2" height="24.6" viewBox="0 0 33.2 24.6" fill="none"><path d="M11.3 0h10.4a.8 .8 0 0 1 .8 .8v1.8h3.4a.8 .8 0 0 1 .8 .8v3.1h5.3a1.2 1.2 0 0 1 1.2 1.2v15.7a1.2 1.2 0 0 1-1.2 1.2H1.2a1.2 1.2 0 0 1-1.2-1.2V7.7a1.2 1.2 0 0 1 1.2-1.2h5.2V3.4a.8 .8 0 0 1 .8-.8h3.3V.8a.8 .8 0 0 1 .8-.8z" fill="#14c7bb"/></svg><svg class="r" style="left:544.6px;top:365.2px;" width="33.2" height="24.6" viewBox="0 0 33.2 24.6" fill="none"><path d="M1.2 0h30.8a1.2 1.2 0 0 1 1.2 1.2v15.8a1.2 1.2 0 0 1-1.2 1.2h-5.3v3a.8 .8 0 0 1-.8 .8h-3.4v1.8a.8 .8 0 0 1-.8 .8h-10.4a.8 .8 0 0 1-.8-.8v-1.8h-3.3a.8 .8 0 0 1-.8-.8v-3H1.2a1.2 1.2 0 0 1-1.2-1.2V1.2a1.2 1.2 0 0 1 1.2-1.2z" fill="#bcc5d2"/></svg><span class="t" style="left:560.8px;top:319.8px;transform:translateX(-50%);font-size:6.6px;line-height:9px;color:#2e3138;font-weight:400;-webkit-text-stroke:.2px #2e3138">1<i class="td"></i><i class="tu"></i>2</span><svg class="r" style="left:580.8px;top:334.6px;" width="33.2" height="24.6" viewBox="0 0 33.2 24.6" fill="none"><path d="M11.3 0h10.4a.8 .8 0 0 1 .8 .8v1.8h3.4a.8 .8 0 0 1 .8 .8v3.1h5.3a1.2 1.2 0 0 1 1.2 1.2v15.7a1.2 1.2 0 0 1-1.2 1.2H1.2a1.2 1.2 0 0 1-1.2-1.2V7.7a1.2 1.2 0 0 1 1.2-1.2h5.2V3.4a.8 .8 0 0 1 .8-.8h3.3V.8a.8 .8 0 0 1 .8-.8z" fill="#bcc5d2"/></svg><svg class="r" style="left:580.8px;top:365.2px;" width="33.2" height="24.6" viewBox="0 0 33.2 24.6" fill="none"><path d="M1.2 0h30.8a1.2 1.2 0 0 1 1.2 1.2v15.8a1.2 1.2 0 0 1-1.2 1.2h-5.3v3a.8 .8 0 0 1-.8 .8h-3.4v1.8a.8 .8 0 0 1-.8 .8h-10.4a.8 .8 0 0 1-.8-.8v-1.8h-3.3a.8 .8 0 0 1-.8-.8v-3H1.2a1.2 1.2 0 0 1-1.2-1.2V1.2a1.2 1.2 0 0 1 1.2-1.2z" fill="#bcc5d2"/></svg><span class="t" style="left:597.0px;top:319.8px;transform:translateX(-50%);font-size:6.6px;line-height:9px;color:#2e3138;font-weight:400;-webkit-text-stroke:.2px #2e3138">3<i class="td"></i><i class="tu"></i>4</span><svg class="r" style="left:617.0px;top:334.6px;" width="33.2" height="24.6" viewBox="0 0 33.2 24.6" fill="none"><path d="M11.3 0h10.4a.8 .8 0 0 1 .8 .8v1.8h3.4a.8 .8 0 0 1 .8 .8v3.1h5.3a1.2 1.2 0 0 1 1.2 1.2v15.7a1.2 1.2 0 0 1-1.2 1.2H1.2a1.2 1.2 0 0 1-1.2-1.2V7.7a1.2 1.2 0 0 1 1.2-1.2h5.2V3.4a.8 .8 0 0 1 .8-.8h3.3V.8a.8 .8 0 0 1 .8-.8z" fill="#bcc5d2"/></svg><svg class="r" style="left:617.0px;top:365.2px;" width="33.2" height="24.6" viewBox="0 0 33.2 24.6" fill="none"><path d="M1.2 0h30.8a1.2 1.2 0 0 1 1.2 1.2v15.8a1.2 1.2 0 0 1-1.2 1.2h-5.3v3a.8 .8 0 0 1-.8 .8h-3.4v1.8a.8 .8 0 0 1-.8 .8h-10.4a.8 .8 0 0 1-.8-.8v-1.8h-3.3a.8 .8 0 0 1-.8-.8v-3H1.2a1.2 1.2 0 0 1-1.2-1.2V1.2a1.2 1.2 0 0 1 1.2-1.2z" fill="#bcc5d2"/></svg><span class="t" style="left:633.2px;top:319.8px;transform:translateX(-50%);font-size:6.6px;line-height:9px;color:#2e3138;font-weight:400;-webkit-text-stroke:.2px #2e3138">5<i class="td"></i><i class="tu"></i>6</span><svg class="r" style="left:653.2px;top:334.6px;" width="33.2" height="24.6" viewBox="0 0 33.2 24.6" fill="none"><path d="M11.3 0h10.4a.8 .8 0 0 1 .8 .8v1.8h3.4a.8 .8 0 0 1 .8 .8v3.1h5.3a1.2 1.2 0 0 1 1.2 1.2v15.7a1.2 1.2 0 0 1-1.2 1.2H1.2a1.2 1.2 0 0 1-1.2-1.2V7.7a1.2 1.2 0 0 1 1.2-1.2h5.2V3.4a.8 .8 0 0 1 .8-.8h3.3V.8a.8 .8 0 0 1 .8-.8z" fill="#bcc5d2"/></svg><svg class="r" style="left:653.2px;top:365.2px;" width="33.2" height="24.6" viewBox="0 0 33.2 24.6" fill="none"><path d="M1.2 0h30.8a1.2 1.2 0 0 1 1.2 1.2v15.8a1.2 1.2 0 0 1-1.2 1.2h-5.3v3a.8 .8 0 0 1-.8 .8h-3.4v1.8a.8 .8 0 0 1-.8 .8h-10.4a.8 .8 0 0 1-.8-.8v-1.8h-3.3a.8 .8 0 0 1-.8-.8v-3H1.2a1.2 1.2 0 0 1-1.2-1.2V1.2a1.2 1.2 0 0 1 1.2-1.2z" fill="#bcc5d2"/></svg><span class="t" style="left:669.4px;top:319.8px;transform:translateX(-50%);font-size:6.6px;line-height:9px;color:#2e3138;font-weight:400;-webkit-text-stroke:.2px #2e3138">7<i class="td"></i><i class="tu"></i>8</span><div class="r" style="left:539.2px;top:397.6px;width:0.8px;height:3.0px;background:#bcc3d0;"></div><div class="r" style="left:539.2px;top:399.8px;width:158.8px;height:0.8px;background:#bcc3d0;"></div><span class="t" style="left:712.6px;transform:translateX(-50%) scaleX(1.011);top:396.7px;font-size:5.5px;line-height:7px;color:#5f6570;font-weight:400;-webkit-text-stroke:0.15px #5f6570;">COMBO</span><div class="r" style="left:727.0px;top:399.8px;width:160.6px;height:0.8px;background:#bcc3d0;"></div><div class="r" style="left:886.8px;top:397.6px;width:0.8px;height:3.0px;background:#bcc3d0;"></div><div class="r" style="left:706.4px;top:331.0px;width:40.1px;height:61.0px;background:#f1f2f5;"></div><svg class="r" style="left:708.3px;top:334.3px;" width="36.3" height="22.2" viewBox="0 0 36.3 22.2" fill="none"><path d="M0 0h36.3 v22.2 h-10.164 v-1.5 h-15.972 v1.5 H0z" fill="#bcc5d2"/></svg><svg class="r" style="left:708.3px;top:368.2px;" width="36.3" height="22.2" viewBox="0 0 36.3 22.2" fill="none"><path d="M0 22.2 V0 h10.164 v1.5 h15.972 v-1.5 H36.3 V22.2 z" fill="#bcc5d2"/></svg><span class="t" style="left:726.4px;top:319.8px;transform:translateX(-50%);font-size:6.6px;line-height:9px;color:#2e3138;font-weight:400;-webkit-text-stroke:.2px #2e3138">1<i class="td"></i><i class="tu"></i>2</span><div class="r" style="left:753.8px;top:331.0px;width:40.1px;height:61.0px;background:#f1f2f5;"></div><svg class="r" style="left:755.7px;top:334.3px;" width="36.3" height="22.2" viewBox="0 0 36.3 22.2" fill="none"><path d="M0 0h36.3 v22.2 h-10.164 v-1.5 h-15.972 v1.5 H0z" fill="#bcc5d2"/></svg><svg class="r" style="left:755.7px;top:368.2px;" width="36.3" height="22.2" viewBox="0 0 36.3 22.2" fill="none"><path d="M0 22.2 V0 h10.164 v1.5 h15.972 v-1.5 H36.3 V22.2 z" fill="#bcc5d2"/></svg><span class="t" style="left:773.8px;top:319.8px;transform:translateX(-50%);font-size:6.6px;line-height:9px;color:#2e3138;font-weight:400;-webkit-text-stroke:.2px #2e3138">3<i class="td"></i><i class="tu"></i>4</span><div class="r" style="left:801.2px;top:331.0px;width:40.1px;height:61.0px;background:#f1f2f5;"></div><svg class="r" style="left:803.1px;top:334.3px;" width="36.3" height="22.2" viewBox="0 0 36.3 22.2" fill="none"><path d="M0 0h36.3 v22.2 h-10.164 v-1.5 h-15.972 v1.5 H0z" fill="#bcc5d2"/></svg><svg class="r" style="left:803.1px;top:368.2px;" width="36.3" height="22.2" viewBox="0 0 36.3 22.2" fill="none"><path d="M0 22.2 V0 h10.164 v1.5 h15.972 v-1.5 H36.3 V22.2 z" fill="#bcc5d2"/></svg><span class="t" style="left:821.2px;top:319.8px;transform:translateX(-50%);font-size:6.6px;line-height:9px;color:#2e3138;font-weight:400;-webkit-text-stroke:.2px #2e3138">5<i class="td"></i><i class="tu"></i>6</span><div class="r" style="left:848.6px;top:331.0px;width:40.1px;height:61.0px;background:#f1f2f5;"></div><svg class="r" style="left:850.5px;top:334.3px;" width="36.3" height="22.2" viewBox="0 0 36.3 22.2" fill="none"><path d="M0 0h36.3 v22.2 h-10.164 v-1.5 h-15.972 v1.5 H0z" fill="#bcc5d2"/></svg><svg class="r" style="left:850.5px;top:368.2px;" width="36.3" height="22.2" viewBox="0 0 36.3 22.2" fill="none"><path d="M0 22.2 V0 h10.164 v1.5 h15.972 v-1.5 H36.3 V22.2 z" fill="#bcc5d2"/></svg><span class="t" style="left:868.6px;top:319.8px;transform:translateX(-50%);font-size:6.6px;line-height:9px;color:#2e3138;font-weight:400;-webkit-text-stroke:.2px #2e3138">7<i class="td"></i><i class="tu"></i>8</span><div class="r" style="left:896.0px;top:331.0px;width:40.1px;height:61.0px;background:#f1f2f5;"></div><svg class="r" style="left:897.9px;top:334.3px;" width="36.3" height="22.2" viewBox="0 0 36.3 22.2" fill="none"><path d="M0 0h36.3 v22.2 h-10.164 v-1.5 h-15.972 v1.5 H0z" fill="#bcc5d2"/></svg><svg class="r" style="left:897.9px;top:368.2px;" width="36.3" height="22.2" viewBox="0 0 36.3 22.2" fill="none"><path d="M0 22.2 V0 h10.164 v1.5 h15.972 v-1.5 H36.3 V22.2 z" fill="#bcc5d2"/></svg><span class="t" style="left:916.0px;top:319.8px;transform:translateX(-50%);font-size:6.6px;line-height:9px;color:#2e3138;font-weight:400;-webkit-text-stroke:.2px #2e3138">9<i class="td"></i><i class="tu"></i>10</span><div class="r" style="left:943.3px;top:331.0px;width:40.1px;height:61.0px;background:#f1f2f5;"></div><svg class="r" style="left:945.2px;top:334.3px;" width="36.3" height="22.2" viewBox="0 0 36.3 22.2" fill="none"><path d="M0 0h36.3 v22.2 h-10.164 v-1.5 h-15.972 v1.5 H0z" fill="#bcc5d2"/></svg><svg class="r" style="left:945.2px;top:368.2px;" width="36.3" height="22.2" viewBox="0 0 36.3 22.2" fill="none"><path d="M0 22.2 V0 h10.164 v1.5 h15.972 v-1.5 H36.3 V22.2 z" fill="#bcc5d2"/></svg><span class="t" style="left:963.3px;top:319.8px;transform:translateX(-50%);font-size:6.6px;line-height:9px;color:#2e3138;font-weight:400;-webkit-text-stroke:.2px #2e3138">11<i class="td"></i><i class="tu"></i>12</span><div class="r" style="left:990.7px;top:331.0px;width:40.1px;height:61.0px;background:#f1f2f5;"></div><svg class="r" style="left:992.6px;top:334.3px;" width="36.3" height="22.2" viewBox="0 0 36.3 22.2" fill="none"><path d="M0 0h36.3 v22.2 h-10.164 v-1.5 h-15.972 v1.5 H0z" fill="#bcc5d2"/></svg><svg class="r" style="left:992.6px;top:368.2px;" width="36.3" height="22.2" viewBox="0 0 36.3 22.2" fill="none"><path d="M0 22.2 V0 h10.164 v1.5 h15.972 v-1.5 H36.3 V22.2 z" fill="#bcc5d2"/></svg><span class="t" style="left:1010.7px;top:319.8px;transform:translateX(-50%);font-size:6.6px;line-height:9px;color:#2e3138;font-weight:400;-webkit-text-stroke:.2px #2e3138">13<i class="td"></i><i class="tu"></i>14</span><div class="r" style="left:1038.1px;top:331.0px;width:40.1px;height:61.0px;background:#f1f2f5;"></div><svg class="r" style="left:1040.0px;top:334.3px;" width="36.3" height="22.2" viewBox="0 0 36.3 22.2" fill="none"><path d="M0 0h36.3 v22.2 h-10.164 v-1.5 h-15.972 v1.5 H0z" fill="#bcc5d2"/></svg><svg class="r" style="left:1040.0px;top:368.2px;" width="36.3" height="22.2" viewBox="0 0 36.3 22.2" fill="none"><path d="M0 22.2 V0 h10.164 v1.5 h15.972 v-1.5 H36.3 V22.2 z" fill="#bcc5d2"/></svg><span class="t" style="left:1058.1px;top:319.8px;transform:translateX(-50%);font-size:6.6px;line-height:9px;color:#2e3138;font-weight:400;-webkit-text-stroke:.2px #2e3138">15<i class="td"></i><i class="tu"></i>16</span><div class="r" style="left:1085.5px;top:331.0px;width:40.1px;height:61.0px;background:#f1f2f5;"></div><svg class="r" style="left:1087.4px;top:334.3px;" width="36.3" height="22.2" viewBox="0 0 36.3 22.2" fill="none"><path d="M0 0h36.3 v22.2 h-10.164 v-1.5 h-15.972 v1.5 H0z" fill="#bcc5d2"/></svg><svg class="r" style="left:1087.4px;top:368.2px;" width="36.3" height="22.2" viewBox="0 0 36.3 22.2" fill="none"><path d="M0 22.2 V0 h10.164 v1.5 h15.972 v-1.5 H36.3 V22.2 z" fill="#bcc5d2"/></svg><span class="t" style="left:1105.5px;top:319.8px;transform:translateX(-50%);font-size:6.6px;line-height:9px;color:#2e3138;font-weight:400;-webkit-text-stroke:.2px #2e3138">17<i class="td"></i><i class="tu"></i>18</span><div class="r" style="left:1132.9px;top:331.0px;width:40.1px;height:61.0px;background:#f1f2f5;"></div><svg class="r" style="left:1134.8px;top:334.3px;" width="36.3" height="22.2" viewBox="0 0 36.3 22.2" fill="none"><path d="M0 0h36.3 v22.2 h-10.164 v-1.5 h-15.972 v1.5 H0z" fill="#bcc5d2"/></svg><svg class="r" style="left:1134.8px;top:368.2px;" width="36.3" height="22.2" viewBox="0 0 36.3 22.2" fill="none"><path d="M0 22.2 V0 h10.164 v1.5 h15.972 v-1.5 H36.3 V22.2 z" fill="#bcc5d2"/></svg><span class="t" style="left:1152.9px;top:319.8px;transform:translateX(-50%);font-size:6.6px;line-height:9px;color:#2e3138;font-weight:400;-webkit-text-stroke:.2px #2e3138">19<i class="td"></i><i class="tu"></i>20</span><div class="r" style="left:1180.3px;top:331.0px;width:40.1px;height:61.0px;background:#f1f2f5;"></div><svg class="r" style="left:1182.2px;top:334.3px;" width="36.3" height="22.2" viewBox="0 0 36.3 22.2" fill="none"><path d="M0 0h36.3 v22.2 h-10.164 v-1.5 h-15.972 v1.5 H0z" fill="#bcc5d2"/></svg><svg class="r" style="left:1182.2px;top:368.2px;" width="36.3" height="22.2" viewBox="0 0 36.3 22.2" fill="none"><path d="M0 22.2 V0 h10.164 v1.5 h15.972 v-1.5 H36.3 V22.2 z" fill="#bcc5d2"/></svg><span class="t" style="left:1200.3px;top:319.8px;transform:translateX(-50%);font-size:6.6px;line-height:9px;color:#2e3138;font-weight:400;-webkit-text-stroke:.2px #2e3138">21<i class="td"></i><i class="tu"></i>22</span><div class="r" style="left:1227.7px;top:331.0px;width:40.1px;height:61.0px;background:#f1f2f5;"></div><svg class="r" style="left:1229.6px;top:334.3px;" width="36.3" height="22.2" viewBox="0 0 36.3 22.2" fill="none"><path d="M0 0h36.3 v22.2 h-10.164 v-1.5 h-15.972 v1.5 H0z" fill="#bcc5d2"/></svg><svg class="r" style="left:1229.6px;top:368.2px;" width="36.3" height="22.2" viewBox="0 0 36.3 22.2" fill="none"><path d="M0 22.2 V0 h10.164 v1.5 h15.972 v-1.5 H36.3 V22.2 z" fill="#bcc5d2"/></svg><span class="t" style="left:1247.7px;top:319.8px;transform:translateX(-50%);font-size:6.6px;line-height:9px;color:#2e3138;font-weight:400;-webkit-text-stroke:.2px #2e3138">23<i class="td"></i><i class="tu"></i>24</span><div class="r" style="left:1282.0px;top:364.6px;width:119.0px;height:26.6px;background:#f1f2f5;"></div><svg class="r" style="left:1284.5px;top:366.5px;" width="36.5" height="22.6" viewBox="0 0 36.5 22.6" fill="none"><path d="M0 0h36.5 v22.6 h-10.22 v-1.5 h-16.06 v1.5 H0z" fill="#747e8c"/></svg><span class="t" style="left:1302.5px;transform:translateX(-50%) scaleX(0.928);top:354.6px;font-size:6.4px;line-height:8px;color:#2e3138;font-weight:400;-webkit-text-stroke:0.2px #2e3138;">25</span><svg class="r" style="left:1323.6px;top:366.5px;" width="36.2" height="22.6" viewBox="0 0 36.2 22.6" fill="none"><path d="M0 0h36.2 v22.6 h-10.136 v-1.5 h-15.928 v1.5 H0z" fill="#bcc5d2"/></svg><span class="t" style="left:1341.4px;transform:translateX(-50%) scaleX(0.928);top:354.6px;font-size:6.4px;line-height:8px;color:#2e3138;font-weight:400;-webkit-text-stroke:0.2px #2e3138;">26</span><svg class="r" style="left:1362.6px;top:366.5px;" width="36" height="22.6" viewBox="0 0 36 22.6" fill="none"><path d="M0 0h36 v22.6 h-10.08 v-1.5 h-15.84 v1.5 H0z" fill="#bcc5d2"/></svg><span class="t" style="left:1380.3px;transform:translateX(-50%) scaleX(0.928);top:354.6px;font-size:6.4px;line-height:8px;color:#2e3138;font-weight:400;-webkit-text-stroke:0.2px #2e3138;">27</span><div class="r" style="left:1302.0px;top:348.8px;width:0.8px;height:3.0px;background:#bcc3d0;"></div><div class="r" style="left:1302.0px;top:348.8px;width:48.0px;height:0.8px;background:#bcc3d0;"></div><div class="r" style="left:1369.5px;top:348.8px;width:31.5px;height:0.8px;background:#bcc3d0;"></div><span class="t" style="left:1359.8px;transform:translateX(-50%) scaleX(0.898);top:345.5px;font-size:5.5px;line-height:7px;color:#555a64;font-weight:400;-webkit-text-stroke:0.15px #555a64;">SFP+</span><svg class="r" style="left:1269.8px;top:432.0px;" width="19.5" height="11.5" viewBox="0 0 19.5 11.5" fill="none"><path d="M0 0h19.5 v11.5 h-5.46 v-1.5 h-8.58 v1.5 H0z" fill="#bcc5d2"/></svg><span class="t" style="left:1297.5px;transform-origin:0 50%;transform:scaleX(0.948);top:432.7px;font-size:10.5px;line-height:14px;color:#a3a8b3;font-weight:400;-webkit-text-stroke:0.15px #a3a8b3;">Optical</span><svg class="r" style="left:1344.5px;top:431.5px;" width="17" height="12" viewBox="0 0 17 12" fill="none"><path d="M5 0h7l1.6 2.2h3.4V12H0V2.2h3.4z" fill="#bcc5d2"/></svg><span class="t" style="left:1369.0px;transform-origin:0 50%;transform:scaleX(0.929);top:432.7px;font-size:10.5px;line-height:14px;color:#a3a8b3;font-weight:400;-webkit-text-stroke:0.15px #a3a8b3;">Copper</span><div class="r" style="left:321.0px;top:471.7px;width:1101.0px;height:288.3px;background:#f7f7f7;border-radius:3px"></div><span class="t" style="left:343.0px;transform-origin:0 50%;transform:scaleX(0.942);top:482.5px;font-size:14.5px;line-height:19px;color:#1a1a2e;font-weight:400;-webkit-text-stroke:0.7px #1a1a2e;">MAC Address</span><span class="t" style="left:1367.0px;transform-origin:0 50%;transform:scaleX(0.940);top:486.5px;font-size:10.5px;line-height:14px;color:#2cc9be;font-weight:400;-webkit-text-stroke:0.15px #2cc9be;">More</span><svg class="r" style="left:1393.3px;top:490.2px;" width="4.8" height="7.2" viewBox="0 0 6 9" fill="none"><path d="M1.5 1l3.5 3.5L1.5 8" stroke="#2cc9be" stroke-width="1.7" stroke-linecap="round" stroke-linejoin="round"/></svg><div class="r" style="left:343.0px;top:511.0px;width:1076.0px;height:1.0px;background:#eaebef;"></div><div class="r" style="left:343.0px;top:528.0px;width:1058.0px;height:33.3px;background:#f0f1f3;"></div><div class="r" style="left:343.0px;top:560.5px;width:1058.0px;height:1.0px;background:#d9dbe0;"></div><span class="t" style="left:365.3px;transform-origin:0 50%;transform:scaleX(0.984);top:537.5px;font-size:11.4px;line-height:15px;color:#23252f;font-weight:400;-webkit-text-stroke:0.3px #23252f;">VLAN</span><span class="t" style="left:570.7px;transform-origin:0 50%;transform:scaleX(0.960);top:537.5px;font-size:11.4px;line-height:15px;color:#23252f;font-weight:400;-webkit-text-stroke:0.3px #23252f;">MAC</span><span class="t" style="left:896.0px;transform-origin:0 50%;transform:scaleX(0.969);top:537.5px;font-size:11.4px;line-height:15px;color:#23252f;font-weight:400;-webkit-text-stroke:0.3px #23252f;">Item Category</span><span class="t" style="left:1213.0px;transform-origin:0 50%;transform:scaleX(1.005);top:537.5px;font-size:11.4px;line-height:15px;color:#23252f;font-weight:400;-webkit-text-stroke:0.3px #23252f;">Port</span><div class="r" style="left:343.0px;top:594.7px;width:1058.0px;height:33.4px;background:#f0f1f3;"></div><div class="r" style="left:343.0px;top:661.5px;width:1058.0px;height:33.5px;background:#f0f1f3;"></div><span class="t" style="left:365.3px;transform-origin:0 50%;transform:scaleX(0.984);top:571.4px;font-size:10.5px;line-height:14px;color:#555962;font-weight:400;-webkit-text-stroke:0.15px #555962;">10</span><span class="t" style="left:570.7px;transform-origin:0 50%;transform:scaleX(0.968);top:571.4px;font-size:10.5px;line-height:14px;color:#555962;font-weight:400;-webkit-text-stroke:0.15px #555962;">0011.2233.4480</span><span class="t" style="left:896.0px;transform-origin:0 50%;transform:scaleX(0.930);top:571.4px;font-size:10.5px;line-height:14px;color:#555962;font-weight:400;-webkit-text-stroke:0.15px #555962;">Dynamic</span><span class="t" style="left:1213.0px;transform-origin:0 50%;transform:scaleX(1.062);top:571.4px;font-size:10.5px;line-height:14px;color:#555962;font-weight:400;-webkit-text-stroke:0.15px #555962;">g2/0/2</span><span class="t" style="left:365.3px;transform-origin:0 50%;transform:scaleX(0.984);top:604.8px;font-size:10.5px;line-height:14px;color:#555962;font-weight:400;-webkit-text-stroke:0.15px #555962;">10</span><span class="t" style="left:570.7px;transform-origin:0 50%;transform:scaleX(0.931);top:604.8px;font-size:10.5px;line-height:14px;color:#555962;font-weight:400;-webkit-text-stroke:0.15px #555962;">649d.99d0.7ea1</span><span class="t" style="left:896.0px;transform-origin:0 50%;transform:scaleX(0.930);top:604.8px;font-size:10.5px;line-height:14px;color:#555962;font-weight:400;-webkit-text-stroke:0.15px #555962;">Dynamic</span><span class="t" style="left:1213.0px;transform-origin:0 50%;transform:scaleX(1.062);top:604.8px;font-size:10.5px;line-height:14px;color:#555962;font-weight:400;-webkit-text-stroke:0.15px #555962;">g1/0/2</span><span class="t" style="left:365.3px;transform-origin:0 50%;transform:scaleX(0.984);top:638.2px;font-size:10.5px;line-height:14px;color:#555962;font-weight:400;-webkit-text-stroke:0.15px #555962;">10</span><span class="t" style="left:570.7px;transform-origin:0 50%;transform:scaleX(0.931);top:638.2px;font-size:10.5px;line-height:14px;color:#555962;font-weight:400;-webkit-text-stroke:0.15px #555962;">649d.99d0.46ae</span><span class="t" style="left:896.0px;transform-origin:0 50%;transform:scaleX(0.930);top:638.2px;font-size:10.5px;line-height:14px;color:#555962;font-weight:400;-webkit-text-stroke:0.15px #555962;">Dynamic</span><span class="t" style="left:1213.0px;transform-origin:0 50%;transform:scaleX(1.062);top:638.2px;font-size:10.5px;line-height:14px;color:#555962;font-weight:400;-webkit-text-stroke:0.15px #555962;">g1/0/2</span><span class="t" style="left:365.3px;transform-origin:0 50%;transform:scaleX(0.984);top:671.6px;font-size:10.5px;line-height:14px;color:#555962;font-weight:400;-webkit-text-stroke:0.15px #555962;">10</span><span class="t" style="left:570.7px;transform-origin:0 50%;transform:scaleX(0.944);top:671.6px;font-size:10.5px;line-height:14px;color:#555962;font-weight:400;-webkit-text-stroke:0.15px #555962;">5416.515d.71ed</span><span class="t" style="left:896.0px;transform-origin:0 50%;transform:scaleX(0.930);top:671.6px;font-size:10.5px;line-height:14px;color:#555962;font-weight:400;-webkit-text-stroke:0.15px #555962;">Dynamic</span><span class="t" style="left:1213.0px;transform-origin:0 50%;transform:scaleX(1.062);top:671.6px;font-size:10.5px;line-height:14px;color:#555962;font-weight:400;-webkit-text-stroke:0.15px #555962;">g1/0/2</span></div></div><div class="r" style="left:152.3px;top:1.6px;width:1271.6px;height:703px;border-radius:19px 17px 16px 17px;background:linear-gradient(90deg,#3b3b3b 0,#383838 8%,#2b2b2b 25%,#0c0c0c 42%,#000 52%) 0 0/100% 22px no-repeat,linear-gradient(180deg,#000 0,#000 45%,#131313 72%,#222 94%) 100% 0/22px 100% no-repeat,linear-gradient(90deg,#343434 0,#2c2c2c 40%,#222 80%) 0 100%/100% 22px no-repeat,linear-gradient(180deg,#3b3b3b 0,#393939 60%,#343434 97%);box-shadow:0 0 1.2px rgba(0,0,0,.6)"></div><div class="r" style="left:152.3px;top:1.6px;width:1271.6px;height:703px;border-radius:19px 17px 16px 17px;box-sizing:border-box;box-shadow:inset 0 0 0 3.2px rgba(255,255,255,.17),inset 0 0 0 1.3px rgba(255,255,255,.22);-webkit-mask-image:linear-gradient(90deg,#000 0,rgba(0,0,0,.8) 25%,rgba(0,0,0,.35) 42%,transparent 58%);mask-image:linear-gradient(90deg,#000 0,rgba(0,0,0,.8) 25%,rgba(0,0,0,.35) 42%,transparent 58%)"></div><div class="r" style="left:166.6px;top:17.6px;width:1243px;height:673.5px;border-radius:7px 4px 3px 7px;background:rgba(0,0,0,.24)"></div><div class="r" style="left:1152.3px;top:8.4px;width:3.6px;height:3.6px;background:#4a4a4a;border-radius:50%"></div><div class="r" style="left:1168.3px;top:8.4px;width:3.6px;height:3.6px;background:#4a4a4a;border-radius:50%"></div><div class="r" style="left:1210.2px;top:7.2px;width:6.2px;height:6.2px;background:#c4c4c4;border-radius:50%;box-shadow:0 0 1px #888"></div><div class="L" style="clip-path:inset(19px 159.7px 16.4px 170px round 5px 3px 1.5px 5px)"><div class="r" style="left:304.0px;top:61.0px;width:1134.0px;height:699.0px;background:#e9eaee;"></div><div class="r" style="left:304.0px;top:19.0px;width:1134.0px;height:42.0px;background:#f7f7f7;"></div><span class="t" style="left:321.0px;transform-origin:0 50%;transform:scaleX(0.895);top:34.0px;font-size:10.5px;line-height:14px;color:#a9adb8;font-weight:400;-webkit-text-stroke:0.15px #a9adb8;">Device Status</span><span class="t" style="left:382.0px;transform-origin:0 50%;transform:scaleX(0.950);top:35.0px;font-size:9px;line-height:12px;color:#a9adb8;font-weight:400;-webkit-text-stroke:0.15px #a9adb8;">&gt;</span><span class="t" style="left:391.5px;transform-origin:0 50%;transform:scaleX(0.933);top:34.0px;font-size:10.5px;line-height:14px;color:#4a4d57;font-weight:400;-webkit-text-stroke:0.15px #4a4d57;">Device Info</span><svg class="r" style="left:1237.0px;top:33.0px;" width="14" height="14" viewBox="0 0 14 14" fill="none"><path d="M2 1h7.6L12.6 4v8a1 1 0 0 1-1 1H2a1 1 0 0 1-1-1V2a1 1 0 0 1 1-1z" stroke="#4e5159" stroke-width="1.4" stroke-linecap="round" stroke-linejoin="round"/><path d="M4.2 1.2v2.2h4.4V1.2" stroke="#4e5159" stroke-width="1.4" stroke-linecap="round" stroke-linejoin="round" stroke-width="1.8"/><path d="M4 7.7h5.8M4 10.2h3.4" stroke="#14c7bb" stroke-width="1.3" stroke-linecap="round"/></svg><span class="t" style="left:1257.0px;transform-origin:0 50%;transform:scaleX(0.913);top:34.5px;font-size:10px;line-height:13px;color:#4a4d57;font-weight:400;-webkit-text-stroke:0.15px #4a4d57;">Save All</span><svg class="r" style="left:1303.5px;top:33.0px;" width="15" height="15" viewBox="0 0 15 15" fill="none"><circle cx="6.8" cy="3.8" r="2.5" stroke="#4e5159" stroke-width="1.4" stroke-linecap="round" stroke-linejoin="round"/><path d="M1.2 13.2c0-3.4 2.4-5.6 5.6-5.6 1.3 0 2.4.3 3.3 1" stroke="#4e5159" stroke-width="1.4" stroke-linecap="round" stroke-linejoin="round"/><path d="M9.2 10.2h5l-1 3.4h-3z" fill="#14c7bb"/></svg><span class="t" style="left:1324.0px;transform-origin:0 50%;transform:scaleX(0.955);top:34.5px;font-size:10.2px;line-height:13px;color:#4a4d57;font-weight:400;-webkit-text-stroke:0.15px #4a4d57;">admin</span><svg class="r" style="left:1366.5px;top:34.0px;" width="12" height="13" viewBox="0 0 12 13" fill="none"><path d="M5.6 1H2a1 1 0 0 0-1 1v9a1 1 0 0 0 1 1h3.6" stroke="#4e5159" stroke-width="1.4" stroke-linecap="round" stroke-linejoin="round"/><path d="M4.2 6.5h5.2M7.4 4.2l2.2 2.3L7.4 8.8" stroke="#14c7bb" stroke-width="1.4" stroke-linecap="round" stroke-linejoin="round"/></svg><span class="t" style="left:1382.5px;transform-origin:0 50%;transform:scaleX(0.946);top:34.5px;font-size:10.2px;line-height:13px;color:#4a4d57;font-weight:400;-webkit-text-stroke:0.15px #4a4d57;">Logout</span><div class="r" style="left:321.0px;top:79.4px;width:777.0px;height:156.9px;background:#f7f7f7;border-radius:3px"></div><span class="t" style="left:343.0px;transform-origin:0 50%;transform:scaleX(0.953);top:90.3px;font-size:14.5px;line-height:19px;color:#1a1a2e;font-weight:400;-webkit-text-stroke:0.7px #1a1a2e;">System Information</span><svg class="r" style="left:1061.0px;top:96.0px;" width="11" height="7" viewBox="0 0 11 7" fill="none"><path d="M1 6l4.5-4.7L10 6" stroke="#b3b8c2" stroke-width="1.1" stroke-linecap="round" stroke-linejoin="round"/></svg><div class="r" style="left:343.0px;top:117.0px;width:752.0px;height:1.0px;background:#eaebef;"></div><svg class="r" style="left:360.0px;top:140.0px;" width="98" height="36" viewBox="0 0 98 36" fill="none"><defs><linearGradient id="sw1" x1="0" y1="0" x2="1" y2="0"><stop offset="0" stop-color="#1f1f21"/><stop offset=".5" stop-color="#555557"/><stop offset="1" stop-color="#1a1a1c"/></linearGradient><linearGradient id="sw2" x1="0" y1="0" x2="0" y2="1"><stop offset="0" stop-color="#3a3a3c" stop-opacity="0"/><stop offset="1" stop-color="#0c0c0d" stop-opacity=".75"/></linearGradient></defs><path d="M16 1.6h67L96.9 26.4H1.1z" fill="url(#sw1)"/><path d="M16 1.6h67L96.9 26.4H1.1z" fill="url(#sw2)"/><rect x="1" y="26.2" width="96" height="8.8" fill="#a7abb2"/><rect x="1" y="26.2" width="96" height=".9" fill="#c9ccd1"/><path d="M17.5 29.2h12M31 29.2h47M17.5 32.6h12M31 32.6h47" stroke="#2d2f33" stroke-width="1.4" stroke-dasharray="2.6 1.3"/><rect x="79" y="31.8" width="12" height="1.6" fill="#4a4d52"/><rect x="3.5" y="31.4" width="2" height="2" fill="#33363a"/><rect x="9.5" y="23.4" width="8" height="1.3" fill="#777"/></svg><span class="t" style="left:360.0px;transform-origin:0 50%;transform:scaleX(0.920);top:186.3px;font-size:10.5px;line-height:14px;color:#a3a8b3;font-weight:400;-webkit-text-stroke:0.15px #a3a8b3;">Model:</span><span class="t" style="left:391.3px;transform-origin:0 50%;transform:scaleX(0.909);top:186.3px;font-size:10.5px;line-height:14px;color:#4a4d55;font-weight:400;-webkit-text-stroke:0.15px #4a4d55;">S3900-24F4S-R</span><div class="r" style="left:507.0px;top:139.0px;width:1.0px;height:66.0px;background:#f1f1f3;"></div><span class="t" style="left:548.4px;transform-origin:0 50%;transform:scaleX(0.901);top:131.0px;font-size:10.5px;line-height:14px;color:#a3a8b3;font-weight:400;-webkit-text-stroke:0.15px #a3a8b3;">Device Type:</span><span class="t" style="left:611.5px;transform-origin:0 50%;transform:scaleX(0.912);top:131.0px;font-size:10.5px;line-height:14px;color:#4a4d55;font-weight:400;-webkit-text-stroke:0.15px #4a4d55;">S3900-24F4S-R</span><span class="t" style="left:548.4px;transform-origin:0 50%;transform:scaleX(0.910);top:150.5px;font-size:10.5px;line-height:14px;color:#a3a8b3;font-weight:400;-webkit-text-stroke:0.15px #a3a8b3;">Firmware Version:</span><span class="t" style="left:633.4px;transform-origin:0 50%;transform:scaleX(0.932);top:150.5px;font-size:10.5px;line-height:14px;color:#4a4d55;font-weight:400;-webkit-text-stroke:0.15px #4a4d55;">2.2.0F Build 107745</span><span class="t" style="left:548.4px;transform-origin:0 50%;transform:scaleX(0.897);top:170.0px;font-size:10.5px;line-height:14px;color:#a3a8b3;font-weight:400;-webkit-text-stroke:0.15px #a3a8b3;">Serial Num:</span><span class="t" style="left:606.0px;transform-origin:0 50%;transform:scaleX(0.951);top:170.0px;font-size:10.5px;line-height:14px;color:#4a4d55;font-weight:400;-webkit-text-stroke:0.15px #4a4d55;">CG2202218399N00071</span><span class="t" style="left:548.4px;transform-origin:0 50%;transform:scaleX(0.882);top:189.7px;font-size:10.5px;line-height:14px;color:#a3a8b3;font-weight:400;-webkit-text-stroke:0.15px #a3a8b3;">IP Address:</span><span class="t" style="left:604.0px;transform-origin:0 50%;transform:scaleX(0.943);top:189.7px;font-size:10.5px;line-height:14px;color:#4a4d55;font-weight:400;-webkit-text-stroke:0.15px #4a4d55;">10.36.220.174</span><span class="t" style="left:548.4px;transform-origin:0 50%;transform:scaleX(0.928);top:209.2px;font-size:10.5px;line-height:14px;color:#a3a8b3;font-weight:400;-webkit-text-stroke:0.15px #a3a8b3;">Uptime:</span><span class="t" style="left:590.6px;transform-origin:0 50%;transform:scaleX(0.929);top:209.2px;font-size:10.5px;line-height:14px;color:#4a4d55;font-weight:400;-webkit-text-stroke:0.15px #4a4d55;">0 day -17 hour -45 minute -8 second</span><span class="t" style="left:792.0px;transform-origin:0 50%;transform:scaleX(0.892);top:131.0px;font-size:10.5px;line-height:14px;color:#a3a8b3;font-weight:400;-webkit-text-stroke:0.15px #a3a8b3;">BIOS Version:</span><span class="t" style="left:859.3px;transform-origin:0 50%;transform:scaleX(0.929);top:131.0px;font-size:10.5px;line-height:14px;color:#4a4d55;font-weight:400;-webkit-text-stroke:0.15px #4a4d55;">0.1.4</span><span class="t" style="left:792.0px;transform-origin:0 50%;transform:scaleX(0.922);top:150.5px;font-size:10.5px;line-height:14px;color:#a3a8b3;font-weight:400;-webkit-text-stroke:0.15px #a3a8b3;">Web Version:</span><span class="t" style="left:857.3px;transform-origin:0 50%;transform:scaleX(0.951);top:150.5px;font-size:10.5px;line-height:14px;color:#4a4d55;font-weight:400;-webkit-text-stroke:0.15px #4a4d55;">web-v2.2.2.wrp</span><span class="t" style="left:792.0px;transform-origin:0 50%;transform:scaleX(0.913);top:170.0px;font-size:10.5px;line-height:14px;color:#a3a8b3;font-weight:400;-webkit-text-stroke:0.15px #a3a8b3;">MAC Address:</span><span class="t" style="left:861.3px;transform-origin:0 50%;transform:scaleX(0.931);top:170.0px;font-size:10.5px;line-height:14px;color:#4a4d55;font-weight:400;-webkit-text-stroke:0.15px #4a4d55;">64:9D:99:4F:82:6C</span><span class="t" style="left:792.0px;transform-origin:0 50%;transform:scaleX(0.924);top:189.7px;font-size:10.5px;line-height:14px;color:#a3a8b3;font-weight:400;-webkit-text-stroke:0.15px #a3a8b3;">Current Time:</span><span class="t" style="left:859.3px;transform-origin:0 50%;transform:scaleX(0.957);top:189.7px;font-size:10.5px;line-height:14px;color:#4a4d55;font-weight:400;-webkit-text-stroke:0.15px #4a4d55;">2000-1-1 17:45:55</span><div class="r" style="left:1114.7px;top:79.4px;width:307.3px;height:156.9px;background:#f7f7f7;border-radius:3px"></div><span class="t" style="left:1137.0px;transform-origin:0 50%;transform:scaleX(0.895);top:90.3px;font-size:14.5px;line-height:19px;color:#1a1a2e;font-weight:400;-webkit-text-stroke:0.7px #1a1a2e;">Usage</span><svg class="r" style="left:1390.0px;top:96.0px;" width="11" height="7" viewBox="0 0 11 7" fill="none"><path d="M1 6l4.5-4.7L10 6" stroke="#b3b8c2" stroke-width="1.1" stroke-linecap="round" stroke-linejoin="round"/></svg><div class="r" style="left:1137.0px;top:117.0px;width:282.0px;height:1.0px;background:#eaebef;"></div><span class="t" style="left:1137.0px;transform-origin:0 50%;transform:scaleX(0.866);top:134.2px;font-size:10.5px;line-height:14px;color:#4a4d55;font-weight:400;-webkit-text-stroke:0.15px #4a4d55;">CPU Usage</span><span class="t" style="right:167.5px;transform-origin:100% 50%;transform:scaleX(0.930);top:134.5px;font-size:14.5px;line-height:19px;color:#2cc9be;font-weight:400;">20%</span><div class="r" style="left:1137.0px;top:156.2px;width:263.5px;height:4.0px;background:#e6e7ea;border-radius:2px"></div><div class="r" style="left:1137.0px;top:156.2px;width:53.0px;height:4.0px;background:#17c7bb;border-radius:2px"></div><span class="t" style="left:1137.0px;transform-origin:0 50%;transform:scaleX(0.913);top:175.0px;font-size:10.5px;line-height:14px;color:#4a4d55;font-weight:400;-webkit-text-stroke:0.15px #4a4d55;">Memory Usage</span><span class="t" style="right:167.5px;transform-origin:100% 50%;transform:scaleX(0.930);top:175.2px;font-size:14.5px;line-height:19px;color:#5b9cf2;font-weight:400;">41%</span><div class="r" style="left:1137.0px;top:197.8px;width:263.5px;height:4.0px;background:#e6e7ea;border-radius:2px"></div><div class="r" style="left:1137.0px;top:197.8px;width:108.0px;height:4.0px;background:#4d96f5;border-radius:2px"></div><div class="r" style="left:321.0px;top:253.3px;width:1101.0px;height:202.5px;background:#f7f7f7;border-radius:3px"></div><span class="t" style="left:343.0px;transform-origin:0 50%;transform:scaleX(0.938);top:264.3px;font-size:14.5px;line-height:19px;color:#1a1a2e;font-weight:400;-webkit-text-stroke:0.7px #1a1a2e;">Interface Panel</span><div class="r" style="left:343.0px;top:291.6px;width:1076.0px;height:1.0px;background:#eaebef;"></div><div class="r" style="left:1171.4px;top:268.5px;width:8.6px;height:8.5px;background:#17c7bb;"></div><span class="t" style="left:1185.7px;transform-origin:0 50%;transform:scaleX(0.944);top:266.0px;font-size:10.5px;line-height:14px;color:#a3a8b3;font-weight:400;-webkit-text-stroke:0.15px #a3a8b3;">Active</span><div class="r" style="left:1229.8px;top:268.5px;width:8.4px;height:8.5px;background:#bcc5d2;"></div><span class="t" style="left:1243.5px;transform-origin:0 50%;transform:scaleX(0.926);top:266.0px;font-size:10.5px;line-height:14px;color:#a3a8b3;font-weight:400;-webkit-text-stroke:0.15px #a3a8b3;">Inactive</span><div class="r" style="left:1294.0px;top:268.5px;width:8.6px;height:8.5px;background:#747e8c;"></div><span class="t" style="left:1308.0px;transform-origin:0 50%;transform:scaleX(0.888);top:266.0px;font-size:10.5px;line-height:14px;color:#a3a8b3;font-weight:400;-webkit-text-stroke:0.15px #a3a8b3;">Errdisable</span><span class="t" style="left:1367.0px;transform-origin:0 50%;transform:scaleX(0.940);top:267.0px;font-size:10.5px;line-height:14px;color:#2cc9be;font-weight:400;-webkit-text-stroke:0.15px #2cc9be;">More</span><svg class="r" style="left:1393.3px;top:270.7px;" width="4.8" height="7.2" viewBox="0 0 6 9" fill="none"><path d="M1.5 1l3.5 3.5L1.5 8" stroke="#2cc9be" stroke-width="1.7" stroke-linecap="round" stroke-linejoin="round"/></svg><div class="r" style="left:343.0px;top:309.2px;width:1058.0px;height:105.3px;background:linear-gradient(180deg,#e3e7ef 0%,#dde2ea 60%,#d9dee7 100%);border-radius:2px"></div><div class="r" style="left:351.0px;top:317.2px;width:73.0px;height:13.6px;background:rgba(255,255,255,.42);border-radius:1px"></div><span class="t" style="left:355.2px;transform-origin:0 50%;transform:scaleX(0.907);top:318.0px;font-size:9px;line-height:12px;color:#b3bac6;font-weight:700;-webkit-text-stroke:0.15px #b3bac6;">S3900 - 24F4S-R</span><span class="t" style="left:383.0px;transform:translateX(-50%) scaleX(0.956);top:356.5px;font-size:5.5px;line-height:7px;color:#44474d;font-weight:700;-webkit-text-stroke:0.15px #44474d;">CONSOLE</span><div class="r" style="left:364.0px;top:367.2px;width:38.7px;height:30.6px;background:#f2f3f6;"></div><svg class="r" style="left:366.5px;top:369.8px;" width="33.8" height="25" viewBox="0 0 33.8 25" fill="none"><path d="M1 0h31.8a1 1 0 0 1 1 1v17.3h-6.6v3.6h-3.6v3h-11.4v-3h-3.6v-3.6H0V1a1 1 0 0 1 1-1z" fill="#bcc5d2"/></svg><span class="t" style="left:416.3px;transform:translateX(-50%) scaleX(0.885);top:359.3px;font-size:5.2px;line-height:7px;color:#4a4e56;font-weight:400;-webkit-text-stroke:0.2px #4a4e56;">SYS</span><span class="t" style="left:416.3px;transform:translateX(-50%) scaleX(0.991);top:391.3px;font-size:5.2px;line-height:7px;color:#4a4e56;font-weight:400;-webkit-text-stroke:0.2px #4a4e56;">PWR</span><div class="r" style="left:413.4px;top:367.6px;width:5.8px;height:5.8px;background:#c9cedb;border-radius:50%"></div><div class="r" style="left:413.4px;top:383.3px;width:5.8px;height:5.8px;background:#c9cedb;border-radius:50%"></div><div class="r" style="left:430.1px;top:335.5px;width:6.2px;height:6.2px;background:#c4cad9;border-radius:50%"></div><span class="t" style="left:430.5px;transform-origin:0 50%;transform:scaleX(0.899);top:342.8px;font-size:6.8px;line-height:9px;color:#44474d;font-weight:400;-webkit-text-stroke:0.15px #44474d;">4</span><div class="r" style="left:430.1px;top:351.5px;width:6.2px;height:6.2px;background:#c4cad9;border-radius:50%"></div><span class="t" style="left:430.5px;transform-origin:0 50%;transform:scaleX(0.899);top:358.9px;font-size:6.8px;line-height:9px;color:#44474d;font-weight:400;-webkit-text-stroke:0.15px #44474d;">3</span><div class="r" style="left:430.1px;top:367.5px;width:6.2px;height:6.2px;background:#17c7bb;border-radius:50%"></div><span class="t" style="left:430.5px;transform-origin:0 50%;transform:scaleX(0.899);top:374.9px;font-size:6.8px;line-height:9px;color:#44474d;font-weight:400;-webkit-text-stroke:0.15px #44474d;">2</span><div class="r" style="left:430.1px;top:383.5px;width:6.2px;height:6.2px;background:#c4cad9;border-radius:50%"></div><span class="t" style="left:430.5px;transform-origin:0 50%;transform:scaleX(0.899);top:390.7px;font-size:6.8px;line-height:9px;color:#44474d;font-weight:400;-webkit-text-stroke:0.15px #44474d;">1</span><div class="r" style="left:444.9px;top:335.5px;width:6.2px;height:6.2px;background:#c4cad9;border-radius:50%"></div><span class="t" style="left:445.3px;transform-origin:0 50%;transform:scaleX(0.899);top:342.8px;font-size:6.8px;line-height:9px;color:#44474d;font-weight:400;-webkit-text-stroke:0.15px #44474d;">8</span><div class="r" style="left:444.9px;top:351.5px;width:6.2px;height:6.2px;background:#c4cad9;border-radius:50%"></div><span class="t" style="left:445.3px;transform-origin:0 50%;transform:scaleX(0.899);top:358.9px;font-size:6.8px;line-height:9px;color:#44474d;font-weight:400;-webkit-text-stroke:0.15px #44474d;">7</span><div class="r" style="left:444.9px;top:367.5px;width:6.2px;height:6.2px;background:#c4cad9;border-radius:50%"></div><span class="t" style="left:445.3px;transform-origin:0 50%;transform:scaleX(0.899);top:374.9px;font-size:6.8px;line-height:9px;color:#44474d;font-weight:400;-webkit-text-stroke:0.15px #44474d;">6</span><div class="r" style="left:444.9px;top:383.5px;width:6.2px;height:6.2px;background:#c4cad9;border-radius:50%"></div><span class="t" style="left:445.3px;transform-origin:0 50%;transform:scaleX(0.899);top:390.7px;font-size:6.8px;line-height:9px;color:#44474d;font-weight:400;-webkit-text-stroke:0.15px #44474d;">5</span><div class="r" style="left:459.5px;top:335.5px;width:6.2px;height:6.2px;background:#c4cad9;border-radius:50%"></div><span class="t" style="left:459.9px;transform-origin:0 50%;transform:scaleX(0.952);top:342.8px;font-size:6.8px;line-height:9px;color:#44474d;font-weight:400;-webkit-text-stroke:0.15px #44474d;">12</span><div class="r" style="left:459.5px;top:351.5px;width:6.2px;height:6.2px;background:#c4cad9;border-radius:50%"></div><span class="t" style="left:459.9px;transform-origin:0 50%;transform:scaleX(1.019);top:358.9px;font-size:6.8px;line-height:9px;color:#44474d;font-weight:400;-webkit-text-stroke:0.15px #44474d;">11</span><div class="r" style="left:459.5px;top:367.5px;width:6.2px;height:6.2px;background:#c4cad9;border-radius:50%"></div><span class="t" style="left:459.9px;transform-origin:0 50%;transform:scaleX(0.952);top:374.9px;font-size:6.8px;line-height:9px;color:#44474d;font-weight:400;-webkit-text-stroke:0.15px #44474d;">10</span><div class="r" style="left:459.5px;top:383.5px;width:6.2px;height:6.2px;background:#c4cad9;border-radius:50%"></div><span class="t" style="left:459.9px;transform-origin:0 50%;transform:scaleX(0.899);top:390.7px;font-size:6.8px;line-height:9px;color:#44474d;font-weight:400;-webkit-text-stroke:0.15px #44474d;">9</span><div class="r" style="left:474.1px;top:335.5px;width:6.2px;height:6.2px;background:#c4cad9;border-radius:50%"></div><span class="t" style="left:474.5px;transform-origin:0 50%;transform:scaleX(0.952);top:342.8px;font-size:6.8px;line-height:9px;color:#44474d;font-weight:400;-webkit-text-stroke:0.15px #44474d;">16</span><div class="r" style="left:474.1px;top:351.5px;width:6.2px;height:6.2px;background:#c4cad9;border-radius:50%"></div><span class="t" style="left:474.5px;transform-origin:0 50%;transform:scaleX(0.952);top:358.9px;font-size:6.8px;line-height:9px;color:#44474d;font-weight:400;-webkit-text-stroke:0.15px #44474d;">15</span><div class="r" style="left:474.1px;top:367.5px;width:6.2px;height:6.2px;background:#c4cad9;border-radius:50%"></div><span class="t" style="left:474.5px;transform-origin:0 50%;transform:scaleX(0.952);top:374.9px;font-size:6.8px;line-height:9px;color:#44474d;font-weight:400;-webkit-text-stroke:0.15px #44474d;">14</span><div class="r" style="left:474.1px;top:383.5px;width:6.2px;height:6.2px;background:#c4cad9;border-radius:50%"></div><span class="t" style="left:474.5px;transform-origin:0 50%;transform:scaleX(0.952);top:390.7px;font-size:6.8px;line-height:9px;color:#44474d;font-weight:400;-webkit-text-stroke:0.15px #44474d;">13</span><div class="r" style="left:488.9px;top:335.5px;width:6.2px;height:6.2px;background:#c4cad9;border-radius:50%"></div><span class="t" style="left:489.3px;transform-origin:0 50%;transform:scaleX(0.952);top:342.8px;font-size:6.8px;line-height:9px;color:#44474d;font-weight:400;-webkit-text-stroke:0.15px #44474d;">20</span><div class="r" style="left:488.9px;top:351.5px;width:6.2px;height:6.2px;background:#c4cad9;border-radius:50%"></div><span class="t" style="left:489.3px;transform-origin:0 50%;transform:scaleX(0.952);top:358.9px;font-size:6.8px;line-height:9px;color:#44474d;font-weight:400;-webkit-text-stroke:0.15px #44474d;">19</span><div class="r" style="left:488.9px;top:367.5px;width:6.2px;height:6.2px;background:#c4cad9;border-radius:50%"></div><span class="t" style="left:489.3px;transform-origin:0 50%;transform:scaleX(0.952);top:374.9px;font-size:6.8px;line-height:9px;color:#44474d;font-weight:400;-webkit-text-stroke:0.15px #44474d;">18</span><div class="r" style="left:488.9px;top:383.5px;width:6.2px;height:6.2px;background:#c4cad9;border-radius:50%"></div><span class="t" style="left:489.3px;transform-origin:0 50%;transform:scaleX(0.952);top:390.7px;font-size:6.8px;line-height:9px;color:#44474d;font-weight:400;-webkit-text-stroke:0.15px #44474d;">17</span><div class="r" style="left:503.4px;top:335.5px;width:6.2px;height:6.2px;background:#c4cad9;border-radius:50%"></div><span class="t" style="left:503.8px;transform-origin:0 50%;transform:scaleX(0.952);top:342.8px;font-size:6.8px;line-height:9px;color:#44474d;font-weight:400;-webkit-text-stroke:0.15px #44474d;">24</span><div class="r" style="left:503.4px;top:351.5px;width:6.2px;height:6.2px;background:#c4cad9;border-radius:50%"></div><span class="t" style="left:503.8px;transform-origin:0 50%;transform:scaleX(0.952);top:358.9px;font-size:6.8px;line-height:9px;color:#44474d;font-weight:400;-webkit-text-stroke:0.15px #44474d;">23</span><div class="r" style="left:503.4px;top:367.5px;width:6.2px;height:6.2px;background:#c4cad9;border-radius:50%"></div><span class="t" style="left:503.8px;transform-origin:0 50%;transform:scaleX(0.952);top:374.9px;font-size:6.8px;line-height:9px;color:#44474d;font-weight:400;-webkit-text-stroke:0.15px #44474d;">22</span><div class="r" style="left:503.4px;top:383.5px;width:6.2px;height:6.2px;background:#c4cad9;border-radius:50%"></div><span class="t" style="left:503.8px;transform-origin:0 50%;transform:scaleX(0.952);top:390.7px;font-size:6.8px;line-height:9px;color:#44474d;font-weight:400;-webkit-text-stroke:0.15px #44474d;">21</span><div class="r" style="left:518.1px;top:335.5px;width:6.2px;height:6.2px;background:#6f7786;border-radius:50%"></div><span class="t" style="left:518.5px;transform-origin:0 50%;transform:scaleX(0.952);top:342.8px;font-size:6.8px;line-height:9px;color:#44474d;font-weight:400;-webkit-text-stroke:0.15px #44474d;">28</span><div class="r" style="left:518.1px;top:351.5px;width:6.2px;height:6.2px;background:#c4cad9;border-radius:50%"></div><span class="t" style="left:518.5px;transform-origin:0 50%;transform:scaleX(0.952);top:358.9px;font-size:6.8px;line-height:9px;color:#44474d;font-weight:400;-webkit-text-stroke:0.15px #44474d;">27</span><div class="r" style="left:518.1px;top:367.5px;width:6.2px;height:6.2px;background:#c4cad9;border-radius:50%"></div><span class="t" style="left:518.5px;transform-origin:0 50%;transform:scaleX(0.952);top:374.9px;font-size:6.8px;line-height:9px;color:#44474d;font-weight:400;-webkit-text-stroke:0.15px #44474d;">26</span><div class="r" style="left:518.1px;top:383.5px;width:6.2px;height:6.2px;background:#6f7786;border-radius:50%"></div><span class="t" style="left:518.5px;transform-origin:0 50%;transform:scaleX(0.952);top:390.7px;font-size:6.8px;line-height:9px;color:#44474d;font-weight:400;-webkit-text-stroke:0.15px #44474d;">25</span><div class="r" style="left:539.0px;top:331.0px;width:153.0px;height:61.0px;background:#f1f2f5;"></div><svg class="r" style="left:544.6px;top:334.6px;" width="33.2" height="24.6" viewBox="0 0 33.2 24.6" fill="none"><path d="M11.3 0h10.4a.8 .8 0 0 1 .8 .8v1.8h3.4a.8 .8 0 0 1 .8 .8v3.1h5.3a1.2 1.2 0 0 1 1.2 1.2v15.7a1.2 1.2 0 0 1-1.2 1.2H1.2a1.2 1.2 0 0 1-1.2-1.2V7.7a1.2 1.2 0 0 1 1.2-1.2h5.2V3.4a.8 .8 0 0 1 .8-.8h3.3V.8a.8 .8 0 0 1 .8-.8z" fill="#14c7bb"/></svg><svg class="r" style="left:544.6px;top:365.2px;" width="33.2" height="24.6" viewBox="0 0 33.2 24.6" fill="none"><path d="M1.2 0h30.8a1.2 1.2 0 0 1 1.2 1.2v15.8a1.2 1.2 0 0 1-1.2 1.2h-5.3v3a.8 .8 0 0 1-.8 .8h-3.4v1.8a.8 .8 0 0 1-.8 .8h-10.4a.8 .8 0 0 1-.8-.8v-1.8h-3.3a.8 .8 0 0 1-.8-.8v-3H1.2a1.2 1.2 0 0 1-1.2-1.2V1.2a1.2 1.2 0 0 1 1.2-1.2z" fill="#bcc5d2"/></svg><span class="t" style="left:560.8px;top:319.8px;transform:translateX(-50%);font-size:6.6px;line-height:9px;color:#2e3138;font-weight:400;-webkit-text-stroke:.2px #2e3138">1<i class="td"></i><i class="tu"></i>2</span><svg class="r" style="left:580.8px;top:334.6px;" width="33.2" height="24.6" viewBox="0 0 33.2 24.6" fill="none"><path d="M11.3 0h10.4a.8 .8 0 0 1 .8 .8v1.8h3.4a.8 .8 0 0 1 .8 .8v3.1h5.3a1.2 1.2 0 0 1 1.2 1.2v15.7a1.2 1.2 0 0 1-1.2 1.2H1.2a1.2 1.2 0 0 1-1.2-1.2V7.7a1.2 1.2 0 0 1 1.2-1.2h5.2V3.4a.8 .8 0 0 1 .8-.8h3.3V.8a.8 .8 0 0 1 .8-.8z" fill="#bcc5d2"/></svg><svg class="r" style="left:580.8px;top:365.2px;" width="33.2" height="24.6" viewBox="0 0 33.2 24.6" fill="none"><path d="M1.2 0h30.8a1.2 1.2 0 0 1 1.2 1.2v15.8a1.2 1.2 0 0 1-1.2 1.2h-5.3v3a.8 .8 0 0 1-.8 .8h-3.4v1.8a.8 .8 0 0 1-.8 .8h-10.4a.8 .8 0 0 1-.8-.8v-1.8h-3.3a.8 .8 0 0 1-.8-.8v-3H1.2a1.2 1.2 0 0 1-1.2-1.2V1.2a1.2 1.2 0 0 1 1.2-1.2z" fill="#bcc5d2"/></svg><span class="t" style="left:597.0px;top:319.8px;transform:translateX(-50%);font-size:6.6px;line-height:9px;color:#2e3138;font-weight:400;-webkit-text-stroke:.2px #2e3138">3<i class="td"></i><i class="tu"></i>4</span><svg class="r" style="left:617.0px;top:334.6px;" width="33.2" height="24.6" viewBox="0 0 33.2 24.6" fill="none"><path d="M11.3 0h10.4a.8 .8 0 0 1 .8 .8v1.8h3.4a.8 .8 0 0 1 .8 .8v3.1h5.3a1.2 1.2 0 0 1 1.2 1.2v15.7a1.2 1.2 0 0 1-1.2 1.2H1.2a1.2 1.2 0 0 1-1.2-1.2V7.7a1.2 1.2 0 0 1 1.2-1.2h5.2V3.4a.8 .8 0 0 1 .8-.8h3.3V.8a.8 .8 0 0 1 .8-.8z" fill="#bcc5d2"/></svg><svg class="r" style="left:617.0px;top:365.2px;" width="33.2" height="24.6" viewBox="0 0 33.2 24.6" fill="none"><path d="M1.2 0h30.8a1.2 1.2 0 0 1 1.2 1.2v15.8a1.2 1.2 0 0 1-1.2 1.2h-5.3v3a.8 .8 0 0 1-.8 .8h-3.4v1.8a.8 .8 0 0 1-.8 .8h-10.4a.8 .8 0 0 1-.8-.8v-1.8h-3.3a.8 .8 0 0 1-.8-.8v-3H1.2a1.2 1.2 0 0 1-1.2-1.2V1.2a1.2 1.2 0 0 1 1.2-1.2z" fill="#bcc5d2"/></svg><span class="t" style="left:633.2px;top:319.8px;transform:translateX(-50%);font-size:6.6px;line-height:9px;color:#2e3138;font-weight:400;-webkit-text-stroke:.2px #2e3138">5<i class="td"></i><i class="tu"></i>6</span><svg class="r" style="left:653.2px;top:334.6px;" width="33.2" height="24.6" viewBox="0 0 33.2 24.6" fill="none"><path d="M11.3 0h10.4a.8 .8 0 0 1 .8 .8v1.8h3.4a.8 .8 0 0 1 .8 .8v3.1h5.3a1.2 1.2 0 0 1 1.2 1.2v15.7a1.2 1.2 0 0 1-1.2 1.2H1.2a1.2 1.2 0 0 1-1.2-1.2V7.7a1.2 1.2 0 0 1 1.2-1.2h5.2V3.4a.8 .8 0 0 1 .8-.8h3.3V.8a.8 .8 0 0 1 .8-.8z" fill="#bcc5d2"/></svg><svg class="r" style="left:653.2px;top:365.2px;" width="33.2" height="24.6" viewBox="0 0 33.2 24.6" fill="none"><path d="M1.2 0h30.8a1.2 1.2 0 0 1 1.2 1.2v15.8a1.2 1.2 0 0 1-1.2 1.2h-5.3v3a.8 .8 0 0 1-.8 .8h-3.4v1.8a.8 .8 0 0 1-.8 .8h-10.4a.8 .8 0 0 1-.8-.8v-1.8h-3.3a.8 .8 0 0 1-.8-.8v-3H1.2a1.2 1.2 0 0 1-1.2-1.2V1.2a1.2 1.2 0 0 1 1.2-1.2z" fill="#bcc5d2"/></svg><span class="t" style="left:669.4px;top:319.8px;transform:translateX(-50%);font-size:6.6px;line-height:9px;color:#2e3138;font-weight:400;-webkit-text-stroke:.2px #2e3138">7<i class="td"></i><i class="tu"></i>8</span><div class="r" style="left:539.2px;top:397.6px;width:0.8px;height:3.0px;background:#bcc3d0;"></div><div class="r" style="left:539.2px;top:399.8px;width:158.8px;height:0.8px;background:#bcc3d0;"></div><span class="t" style="left:712.6px;transform:translateX(-50%) scaleX(1.011);top:396.7px;font-size:5.5px;line-height:7px;color:#5f6570;font-weight:400;-webkit-text-stroke:0.15px #5f6570;">COMBO</span><div class="r" style="left:727.0px;top:399.8px;width:160.6px;height:0.8px;background:#bcc3d0;"></div><div class="r" style="left:886.8px;top:397.6px;width:0.8px;height:3.0px;background:#bcc3d0;"></div><div class="r" style="left:706.4px;top:331.0px;width:40.1px;height:61.0px;background:#f1f2f5;"></div><svg class="r" style="left:708.3px;top:334.3px;" width="36.3" height="22.2" viewBox="0 0 36.3 22.2" fill="none"><path d="M0 0h36.3 v22.2 h-10.164 v-1.5 h-15.972 v1.5 H0z" fill="#bcc5d2"/></svg><svg class="r" style="left:708.3px;top:368.2px;" width="36.3" height="22.2" viewBox="0 0 36.3 22.2" fill="none"><path d="M0 22.2 V0 h10.164 v1.5 h15.972 v-1.5 H36.3 V22.2 z" fill="#bcc5d2"/></svg><span class="t" style="left:726.4px;top:319.8px;transform:translateX(-50%);font-size:6.6px;line-height:9px;color:#2e3138;font-weight:400;-webkit-text-stroke:.2px #2e3138">1<i class="td"></i><i class="tu"></i>2</span><div class="r" style="left:753.8px;top:331.0px;width:40.1px;height:61.0px;background:#f1f2f5;"></div><svg class="r" style="left:755.7px;top:334.3px;" width="36.3" height="22.2" viewBox="0 0 36.3 22.2" fill="none"><path d="M0 0h36.3 v22.2 h-10.164 v-1.5 h-15.972 v1.5 H0z" fill="#bcc5d2"/></svg><svg class="r" style="left:755.7px;top:368.2px;" width="36.3" height="22.2" viewBox="0 0 36.3 22.2" fill="none"><path d="M0 22.2 V0 h10.164 v1.5 h15.972 v-1.5 H36.3 V22.2 z" fill="#bcc5d2"/></svg><span class="t" style="left:773.8px;top:319.8px;transform:translateX(-50%);font-size:6.6px;line-height:9px;color:#2e3138;font-weight:400;-webkit-text-stroke:.2px #2e3138">3<i class="td"></i><i class="tu"></i>4</span><div class="r" style="left:801.2px;top:331.0px;width:40.1px;height:61.0px;background:#f1f2f5;"></div><svg class="r" style="left:803.1px;top:334.3px;" width="36.3" height="22.2" viewBox="0 0 36.3 22.2" fill="none"><path d="M0 0h36.3 v22.2 h-10.164 v-1.5 h-15.972 v1.5 H0z" fill="#bcc5d2"/></svg><svg class="r" style="left:803.1px;top:368.2px;" width="36.3" height="22.2" viewBox="0 0 36.3 22.2" fill="none"><path d="M0 22.2 V0 h10.164 v1.5 h15.972 v-1.5 H36.3 V22.2 z" fill="#bcc5d2"/></svg><span class="t" style="left:821.2px;top:319.8px;transform:translateX(-50%);font-size:6.6px;line-height:9px;color:#2e3138;font-weight:400;-webkit-text-stroke:.2px #2e3138">5<i class="td"></i><i class="tu"></i>6</span><div class="r" style="left:848.6px;top:331.0px;width:40.1px;height:61.0px;background:#f1f2f5;"></div><svg class="r" style="left:850.5px;top:334.3px;" width="36.3" height="22.2" viewBox="0 0 36.3 22.2" fill="none"><path d="M0 0h36.3 v22.2 h-10.164 v-1.5 h-15.972 v1.5 H0z" fill="#bcc5d2"/></svg><svg class="r" style="left:850.5px;top:368.2px;" width="36.3" height="22.2" viewBox="0 0 36.3 22.2" fill="none"><path d="M0 22.2 V0 h10.164 v1.5 h15.972 v-1.5 H36.3 V22.2 z" fill="#bcc5d2"/></svg><span class="t" style="left:868.6px;top:319.8px;transform:translateX(-50%);font-size:6.6px;line-height:9px;color:#2e3138;font-weight:400;-webkit-text-stroke:.2px #2e3138">7<i class="td"></i><i class="tu"></i>8</span><div class="r" style="left:896.0px;top:331.0px;width:40.1px;height:61.0px;background:#f1f2f5;"></div><svg class="r" style="left:897.9px;top:334.3px;" width="36.3" height="22.2" viewBox="0 0 36.3 22.2" fill="none"><path d="M0 0h36.3 v22.2 h-10.164 v-1.5 h-15.972 v1.5 H0z" fill="#bcc5d2"/></svg><svg class="r" style="left:897.9px;top:368.2px;" width="36.3" height="22.2" viewBox="0 0 36.3 22.2" fill="none"><path d="M0 22.2 V0 h10.164 v1.5 h15.972 v-1.5 H36.3 V22.2 z" fill="#bcc5d2"/></svg><span class="t" style="left:916.0px;top:319.8px;transform:translateX(-50%);font-size:6.6px;line-height:9px;color:#2e3138;font-weight:400;-webkit-text-stroke:.2px #2e3138">9<i class="td"></i><i class="tu"></i>10</span><div class="r" style="left:943.3px;top:331.0px;width:40.1px;height:61.0px;background:#f1f2f5;"></div><svg class="r" style="left:945.2px;top:334.3px;" width="36.3" height="22.2" viewBox="0 0 36.3 22.2" fill="none"><path d="M0 0h36.3 v22.2 h-10.164 v-1.5 h-15.972 v1.5 H0z" fill="#bcc5d2"/></svg><svg class="r" style="left:945.2px;top:368.2px;" width="36.3" height="22.2" viewBox="0 0 36.3 22.2" fill="none"><path d="M0 22.2 V0 h10.164 v1.5 h15.972 v-1.5 H36.3 V22.2 z" fill="#bcc5d2"/></svg><span class="t" style="left:963.3px;top:319.8px;transform:translateX(-50%);font-size:6.6px;line-height:9px;color:#2e3138;font-weight:400;-webkit-text-stroke:.2px #2e3138">11<i class="td"></i><i class="tu"></i>12</span><div class="r" style="left:990.7px;top:331.0px;width:40.1px;height:61.0px;background:#f1f2f5;"></div><svg class="r" style="left:992.6px;top:334.3px;" width="36.3" height="22.2" viewBox="0 0 36.3 22.2" fill="none"><path d="M0 0h36.3 v22.2 h-10.164 v-1.5 h-15.972 v1.5 H0z" fill="#bcc5d2"/></svg><svg class="r" style="left:992.6px;top:368.2px;" width="36.3" height="22.2" viewBox="0 0 36.3 22.2" fill="none"><path d="M0 22.2 V0 h10.164 v1.5 h15.972 v-1.5 H36.3 V22.2 z" fill="#bcc5d2"/></svg><span class="t" style="left:1010.7px;top:319.8px;transform:translateX(-50%);font-size:6.6px;line-height:9px;color:#2e3138;font-weight:400;-webkit-text-stroke:.2px #2e3138">13<i class="td"></i><i class="tu"></i>14</span><div class="r" style="left:1038.1px;top:331.0px;width:40.1px;height:61.0px;background:#f1f2f5;"></div><svg class="r" style="left:1040.0px;top:334.3px;" width="36.3" height="22.2" viewBox="0 0 36.3 22.2" fill="none"><path d="M0 0h36.3 v22.2 h-10.164 v-1.5 h-15.972 v1.5 H0z" fill="#bcc5d2"/></svg><svg class="r" style="left:1040.0px;top:368.2px;" width="36.3" height="22.2" viewBox="0 0 36.3 22.2" fill="none"><path d="M0 22.2 V0 h10.164 v1.5 h15.972 v-1.5 H36.3 V22.2 z" fill="#bcc5d2"/></svg><span class="t" style="left:1058.1px;top:319.8px;transform:translateX(-50%);font-size:6.6px;line-height:9px;color:#2e3138;font-weight:400;-webkit-text-stroke:.2px #2e3138">15<i class="td"></i><i class="tu"></i>16</span><div class="r" style="left:1085.5px;top:331.0px;width:40.1px;height:61.0px;background:#f1f2f5;"></div><svg class="r" style="left:1087.4px;top:334.3px;" width="36.3" height="22.2" viewBox="0 0 36.3 22.2" fill="none"><path d="M0 0h36.3 v22.2 h-10.164 v-1.5 h-15.972 v1.5 H0z" fill="#bcc5d2"/></svg><svg class="r" style="left:1087.4px;top:368.2px;" width="36.3" height="22.2" viewBox="0 0 36.3 22.2" fill="none"><path d="M0 22.2 V0 h10.164 v1.5 h15.972 v-1.5 H36.3 V22.2 z" fill="#bcc5d2"/></svg><span class="t" style="left:1105.5px;top:319.8px;transform:translateX(-50%);font-size:6.6px;line-height:9px;color:#2e3138;font-weight:400;-webkit-text-stroke:.2px #2e3138">17<i class="td"></i><i class="tu"></i>18</span><div class="r" style="left:1132.9px;top:331.0px;width:40.1px;height:61.0px;background:#f1f2f5;"></div><svg class="r" style="left:1134.8px;top:334.3px;" width="36.3" height="22.2" viewBox="0 0 36.3 22.2" fill="none"><path d="M0 0h36.3 v22.2 h-10.164 v-1.5 h-15.972 v1.5 H0z" fill="#bcc5d2"/></svg><svg class="r" style="left:1134.8px;top:368.2px;" width="36.3" height="22.2" viewBox="0 0 36.3 22.2" fill="none"><path d="M0 22.2 V0 h10.164 v1.5 h15.972 v-1.5 H36.3 V22.2 z" fill="#bcc5d2"/></svg><span class="t" style="left:1152.9px;top:319.8px;transform:translateX(-50%);font-size:6.6px;line-height:9px;color:#2e3138;font-weight:400;-webkit-text-stroke:.2px #2e3138">19<i class="td"></i><i class="tu"></i>20</span><div class="r" style="left:1180.3px;top:331.0px;width:40.1px;height:61.0px;background:#f1f2f5;"></div><svg class="r" style="left:1182.2px;top:334.3px;" width="36.3" height="22.2" viewBox="0 0 36.3 22.2" fill="none"><path d="M0 0h36.3 v22.2 h-10.164 v-1.5 h-15.972 v1.5 H0z" fill="#bcc5d2"/></svg><svg class="r" style="left:1182.2px;top:368.2px;" width="36.3" height="22.2" viewBox="0 0 36.3 22.2" fill="none"><path d="M0 22.2 V0 h10.164 v1.5 h15.972 v-1.5 H36.3 V22.2 z" fill="#bcc5d2"/></svg><span class="t" style="left:1200.3px;top:319.8px;transform:translateX(-50%);font-size:6.6px;line-height:9px;color:#2e3138;font-weight:400;-webkit-text-stroke:.2px #2e3138">21<i class="td"></i><i class="tu"></i>22</span><div class="r" style="left:1227.7px;top:331.0px;width:40.1px;height:61.0px;background:#f1f2f5;"></div><svg class="r" style="left:1229.6px;top:334.3px;" width="36.3" height="22.2" viewBox="0 0 36.3 22.2" fill="none"><path d="M0 0h36.3 v22.2 h-10.164 v-1.5 h-15.972 v1.5 H0z" fill="#bcc5d2"/></svg><svg class="r" style="left:1229.6px;top:368.2px;" width="36.3" height="22.2" viewBox="0 0 36.3 22.2" fill="none"><path d="M0 22.2 V0 h10.164 v1.5 h15.972 v-1.5 H36.3 V22.2 z" fill="#bcc5d2"/></svg><span class="t" style="left:1247.7px;top:319.8px;transform:translateX(-50%);font-size:6.6px;line-height:9px;color:#2e3138;font-weight:400;-webkit-text-stroke:.2px #2e3138">23<i class="td"></i><i class="tu"></i>24</span><div class="r" style="left:1282.0px;top:364.6px;width:119.0px;height:26.6px;background:#f1f2f5;"></div><svg class="r" style="left:1284.5px;top:366.5px;" width="36.5" height="22.6" viewBox="0 0 36.5 22.6" fill="none"><path d="M0 0h36.5 v22.6 h-10.22 v-1.5 h-16.06 v1.5 H0z" fill="#747e8c"/></svg><span class="t" style="left:1302.5px;transform:translateX(-50%) scaleX(0.928);top:354.6px;font-size:6.4px;line-height:8px;color:#2e3138;font-weight:400;-webkit-text-stroke:0.2px #2e3138;">25</span><svg class="r" style="left:1323.6px;top:366.5px;" width="36.2" height="22.6" viewBox="0 0 36.2 22.6" fill="none"><path d="M0 0h36.2 v22.6 h-10.136 v-1.5 h-15.928 v1.5 H0z" fill="#bcc5d2"/></svg><span class="t" style="left:1341.4px;transform:translateX(-50%) scaleX(0.928);top:354.6px;font-size:6.4px;line-height:8px;color:#2e3138;font-weight:400;-webkit-text-stroke:0.2px #2e3138;">26</span><svg class="r" style="left:1362.6px;top:366.5px;" width="36" height="22.6" viewBox="0 0 36 22.6" fill="none"><path d="M0 0h36 v22.6 h-10.08 v-1.5 h-15.84 v1.5 H0z" fill="#bcc5d2"/></svg><span class="t" style="left:1380.3px;transform:translateX(-50%) scaleX(0.928);top:354.6px;font-size:6.4px;line-height:8px;color:#2e3138;font-weight:400;-webkit-text-stroke:0.2px #2e3138;">27</span><div class="r" style="left:1302.0px;top:348.8px;width:0.8px;height:3.0px;background:#bcc3d0;"></div><div class="r" style="left:1302.0px;top:348.8px;width:48.0px;height:0.8px;background:#bcc3d0;"></div><div class="r" style="left:1369.5px;top:348.8px;width:31.5px;height:0.8px;background:#bcc3d0;"></div><span class="t" style="left:1359.8px;transform:translateX(-50%) scaleX(0.898);top:345.5px;font-size:5.5px;line-height:7px;color:#555a64;font-weight:400;-webkit-text-stroke:0.15px #555a64;">SFP+</span><svg class="r" style="left:1269.8px;top:432.0px;" width="19.5" height="11.5" viewBox="0 0 19.5 11.5" fill="none"><path d="M0 0h19.5 v11.5 h-5.46 v-1.5 h-8.58 v1.5 H0z" fill="#bcc5d2"/></svg><span class="t" style="left:1297.5px;transform-origin:0 50%;transform:scaleX(0.948);top:432.7px;font-size:10.5px;line-height:14px;color:#a3a8b3;font-weight:400;-webkit-text-stroke:0.15px #a3a8b3;">Optical</span><svg class="r" style="left:1344.5px;top:431.5px;" width="17" height="12" viewBox="0 0 17 12" fill="none"><path d="M5 0h7l1.6 2.2h3.4V12H0V2.2h3.4z" fill="#bcc5d2"/></svg><span class="t" style="left:1369.0px;transform-origin:0 50%;transform:scaleX(0.929);top:432.7px;font-size:10.5px;line-height:14px;color:#a3a8b3;font-weight:400;-webkit-text-stroke:0.15px #a3a8b3;">Copper</span><div class="r" style="left:321.0px;top:471.7px;width:1101.0px;height:288.3px;background:#f7f7f7;border-radius:3px"></div><span class="t" style="left:343.0px;transform-origin:0 50%;transform:scaleX(0.942);top:482.5px;font-size:14.5px;line-height:19px;color:#1a1a2e;font-weight:400;-webkit-text-stroke:0.7px #1a1a2e;">MAC Address</span><span class="t" style="left:1367.0px;transform-origin:0 50%;transform:scaleX(0.940);top:486.5px;font-size:10.5px;line-height:14px;color:#2cc9be;font-weight:400;-webkit-text-stroke:0.15px #2cc9be;">More</span><svg class="r" style="left:1393.3px;top:490.2px;" width="4.8" height="7.2" viewBox="0 0 6 9" fill="none"><path d="M1.5 1l3.5 3.5L1.5 8" stroke="#2cc9be" stroke-width="1.7" stroke-linecap="round" stroke-linejoin="round"/></svg><div class="r" style="left:343.0px;top:511.0px;width:1076.0px;height:1.0px;background:#eaebef;"></div><div class="r" style="left:343.0px;top:528.0px;width:1058.0px;height:33.3px;background:#f0f1f3;"></div><div class="r" style="left:343.0px;top:560.5px;width:1058.0px;height:1.0px;background:#d9dbe0;"></div><span class="t" style="left:365.3px;transform-origin:0 50%;transform:scaleX(0.984);top:537.5px;font-size:11.4px;line-height:15px;color:#23252f;font-weight:400;-webkit-text-stroke:0.3px #23252f;">VLAN</span><span class="t" style="left:570.7px;transform-origin:0 50%;transform:scaleX(0.960);top:537.5px;font-size:11.4px;line-height:15px;color:#23252f;font-weight:400;-webkit-text-stroke:0.3px #23252f;">MAC</span><span class="t" style="left:896.0px;transform-origin:0 50%;transform:scaleX(0.969);top:537.5px;font-size:11.4px;line-height:15px;color:#23252f;font-weight:400;-webkit-text-stroke:0.3px #23252f;">Item Category</span><span class="t" style="left:1213.0px;transform-origin:0 50%;transform:scaleX(1.005);top:537.5px;font-size:11.4px;line-height:15px;color:#23252f;font-weight:400;-webkit-text-stroke:0.3px #23252f;">Port</span><div class="r" style="left:343.0px;top:594.7px;width:1058.0px;height:33.4px;background:#f0f1f3;"></div><div class="r" style="left:343.0px;top:661.5px;width:1058.0px;height:33.5px;background:#f0f1f3;"></div><span class="t" style="left:365.3px;transform-origin:0 50%;transform:scaleX(0.984);top:571.4px;font-size:10.5px;line-height:14px;color:#555962;font-weight:400;-webkit-text-stroke:0.15px #555962;">10</span><span class="t" style="left:570.7px;transform-origin:0 50%;transform:scaleX(0.968);top:571.4px;font-size:10.5px;line-height:14px;color:#555962;font-weight:400;-webkit-text-stroke:0.15px #555962;">0011.2233.4480</span><span class="t" style="left:896.0px;transform-origin:0 50%;transform:scaleX(0.930);top:571.4px;font-size:10.5px;line-height:14px;color:#555962;font-weight:400;-webkit-text-stroke:0.15px #555962;">Dynamic</span><span class="t" style="left:1213.0px;transform-origin:0 50%;transform:scaleX(1.062);top:571.4px;font-size:10.5px;line-height:14px;color:#555962;font-weight:400;-webkit-text-stroke:0.15px #555962;">g2/0/2</span><span class="t" style="left:365.3px;transform-origin:0 50%;transform:scaleX(0.984);top:604.8px;font-size:10.5px;line-height:14px;color:#555962;font-weight:400;-webkit-text-stroke:0.15px #555962;">10</span><span class="t" style="left:570.7px;transform-origin:0 50%;transform:scaleX(0.931);top:604.8px;font-size:10.5px;line-height:14px;color:#555962;font-weight:400;-webkit-text-stroke:0.15px #555962;">649d.99d0.7ea1</span><span class="t" style="left:896.0px;transform-origin:0 50%;transform:scaleX(0.930);top:604.8px;font-size:10.5px;line-height:14px;color:#555962;font-weight:400;-webkit-text-stroke:0.15px #555962;">Dynamic</span><span class="t" style="left:1213.0px;transform-origin:0 50%;transform:scaleX(1.062);top:604.8px;font-size:10.5px;line-height:14px;color:#555962;font-weight:400;-webkit-text-stroke:0.15px #555962;">g1/0/2</span><span class="t" style="left:365.3px;transform-origin:0 50%;transform:scaleX(0.984);top:638.2px;font-size:10.5px;line-height:14px;color:#555962;font-weight:400;-webkit-text-stroke:0.15px #555962;">10</span><span class="t" style="left:570.7px;transform-origin:0 50%;transform:scaleX(0.931);top:638.2px;font-size:10.5px;line-height:14px;color:#555962;font-weight:400;-webkit-text-stroke:0.15px #555962;">649d.99d0.46ae</span><span class="t" style="left:896.0px;transform-origin:0 50%;transform:scaleX(0.930);top:638.2px;font-size:10.5px;line-height:14px;color:#555962;font-weight:400;-webkit-text-stroke:0.15px #555962;">Dynamic</span><span class="t" style="left:1213.0px;transform-origin:0 50%;transform:scaleX(1.062);top:638.2px;font-size:10.5px;line-height:14px;color:#555962;font-weight:400;-webkit-text-stroke:0.15px #555962;">g1/0/2</span><span class="t" style="left:365.3px;transform-origin:0 50%;transform:scaleX(0.984);top:671.6px;font-size:10.5px;line-height:14px;color:#555962;font-weight:400;-webkit-text-stroke:0.15px #555962;">10</span><span class="t" style="left:570.7px;transform-origin:0 50%;transform:scaleX(0.944);top:671.6px;font-size:10.5px;line-height:14px;color:#555962;font-weight:400;-webkit-text-stroke:0.15px #555962;">5416.515d.71ed</span><span class="t" style="left:896.0px;transform-origin:0 50%;transform:scaleX(0.930);top:671.6px;font-size:10.5px;line-height:14px;color:#555962;font-weight:400;-webkit-text-stroke:0.15px #555962;">Dynamic</span><span class="t" style="left:1213.0px;transform-origin:0 50%;transform:scaleX(1.062);top:671.6px;font-size:10.5px;line-height:14px;color:#555962;font-weight:400;-webkit-text-stroke:0.15px #555962;">g1/0/2</span><div class="r" style="left:150.0px;top:19.0px;width:154.0px;height:681.0px;background:#14c7bb;"></div><div class="r" style="left:150.0px;top:61.0px;width:154.0px;height:1.0px;background:rgba(255,255,255,.18);"></div><div class="r" style="left:300.0px;top:61.7px;width:3.5px;height:614.3px;background:#88e1da;border-radius:2px"></div><svg class="r" style="left:180.0px;top:28.0px;" width="24" height="24" viewBox="0 0 24 24" fill="none"><circle cx="11.5" cy="11.3" r="8.85" fill="#fff"/><path d="M8.6 6.9h10.6M8.6 11.4h7.4M8.2 15.8h3.8" stroke="#14c7bb" stroke-width="2.2" stroke-linecap="round"/><circle cx="19.9" cy="6.2" r="1.05" fill="#fff"/></svg><span class="t" style="left:203.9px;transform-origin:0 50%;transform:scaleX(0.753);top:28.7px;font-size:16px;line-height:21px;color:#fff;font-weight:700;-webkit-text-stroke:0.15px #fff;">FS</span><span class="t" style="left:234.1px;transform-origin:0 50%;transform:scaleX(0.910);top:34.4px;font-size:9px;line-height:12px;color:#fff;font-weight:400;-webkit-text-stroke:0.15px #fff;opacity:.93">S3900-24F4S-R</span><div class="r" style="left:150.0px;top:76.0px;width:150.0px;height:33.0px;background:#5cd8cf;"></div><svg class="r" style="left:176.0px;top:85.0px;" width="14" height="14" viewBox="0 0 14 14" fill="none"><rect x="0.8" y="1.3" width="12.4" height="11.4" rx="1" stroke="#fff" stroke-width="1.3" stroke-linecap="round" stroke-linejoin="round"/><path d="M3.2 7.3h1.8l1.2-1.8 1.6 3 1.1-1.5h1.9" stroke="#fff" stroke-width="1.3" stroke-linecap="round" stroke-linejoin="round" stroke-width="1.1"/></svg><span class="t" style="left:201.0px;transform-origin:0 50%;transform:scaleX(0.929);top:84.8px;font-size:11.7px;line-height:15px;color:#fff;font-weight:400;-webkit-text-stroke:0.25px #fff;">Device Status</span><svg class="r" style="left:282.0px;top:89.5px;" width="9" height="6" viewBox="0 0 9 6" fill="none"><path d="M1.4 1.3l3.1 3.1L7.6 1.3" stroke="#fff" stroke-width="1.4" stroke-linecap="round" stroke-linejoin="round"/></svg><div class="r" style="left:150.0px;top:142.0px;width:150.0px;height:168.0px;background:#2ccdc2;"></div><div class="r" style="left:150.0px;top:109.0px;width:150.0px;height:33.0px;background:#f7f7f7;"></div><span class="t" style="left:200.0px;transform-origin:0 50%;transform:scaleX(0.949);top:118.5px;font-size:11.7px;line-height:15px;color:#14c7bb;font-weight:400;-webkit-text-stroke:0.25px #14c7bb;">Device Info</span><span class="t" style="left:200.0px;transform-origin:0 50%;transform:scaleX(0.941);top:151.8px;font-size:11.7px;line-height:15px;color:#fff;font-weight:400;-webkit-text-stroke:0.25px #fff;">Interface State</span><span class="t" style="left:200.0px;transform-origin:0 50%;transform:scaleX(0.960);top:185.3px;font-size:11.7px;line-height:15px;color:#fff;font-weight:400;-webkit-text-stroke:0.25px #fff;">Interface Flow</span><span class="t" style="left:200.0px;transform-origin:0 50%;transform:scaleX(0.922);top:218.8px;font-size:11.7px;line-height:15px;color:#fff;font-weight:400;-webkit-text-stroke:0.25px #fff;">Mac Address T...</span><span class="t" style="left:200.0px;transform-origin:0 50%;transform:scaleX(0.934);top:252.3px;font-size:11.7px;line-height:15px;color:#fff;font-weight:400;-webkit-text-stroke:0.25px #fff;">Log Query</span><span class="t" style="left:200.0px;transform-origin:0 50%;transform:scaleX(0.967);top:285.8px;font-size:11.7px;line-height:15px;color:#fff;font-weight:400;-webkit-text-stroke:0.25px #fff;">Optical Modul...</span><svg class="r" style="left:176.0px;top:333.3px;" width="15" height="14" viewBox="0 0 15 14" fill="none"><path d="M5 12.7H1.8a1 1 0 0 1-1-1V2.3a1 1 0 0 1 1-1h9.4a1 1 0 0 1 1 1V4" stroke="#fff" stroke-width="1.3" stroke-linecap="round" stroke-linejoin="round"/><path d="M.8 3.6h4" stroke="#fff" stroke-width="1.3" stroke-linecap="round" stroke-linejoin="round"/><circle cx="9.6" cy="9.2" r="3.9" stroke="#fff" stroke-width="1.3" stroke-linecap="round" stroke-linejoin="round"/><circle cx="9.6" cy="9.2" r="1.3" stroke="#fff" stroke-width="1.3" stroke-linecap="round" stroke-linejoin="round"/></svg><span class="t" style="left:201.0px;transform-origin:0 50%;transform:scaleX(0.910);top:332.1px;font-size:11.7px;line-height:15px;color:#fff;font-weight:400;-webkit-text-stroke:0.25px #fff;">Basic Configu...</span><svg class="r" style="left:282.0px;top:336.6px;" width="4.68" height="7.02" viewBox="0 0 6 9" fill="none"><path d="M1.5 1l3.5 3.5L1.5 8" stroke="#fff" stroke-width="1.5" stroke-linecap="round" stroke-linejoin="round"/></svg><svg class="r" style="left:176.0px;top:380.6px;" width="14" height="14" viewBox="0 0 14 14" fill="none"><path d="M1.8 1.3h10.4a1 1 0 0 1 1 1v6.2a1 1 0 0 1-1 1H10.6v2.2H3.4V9.5H1.8a1 1 0 0 1-1-1V2.3a1 1 0 0 1 1-1z" stroke="#fff" stroke-width="1.3" stroke-linecap="round" stroke-linejoin="round"/><path d="M4.6 3.6v2.6M7 3.6v2.6M9.4 3.6v2.6" stroke="#fff" stroke-width="1.3" stroke-linecap="round" stroke-linejoin="round"/></svg><span class="t" style="left:201.0px;transform-origin:0 50%;transform:scaleX(0.949);top:379.4px;font-size:11.7px;line-height:15px;color:#fff;font-weight:400;-webkit-text-stroke:0.25px #fff;">Port Configur...</span><svg class="r" style="left:282.0px;top:383.9px;" width="4.68" height="7.02" viewBox="0 0 6 9" fill="none"><path d="M1.5 1l3.5 3.5L1.5 8" stroke="#fff" stroke-width="1.5" stroke-linecap="round" stroke-linejoin="round"/></svg><svg class="r" style="left:176.0px;top:428.0px;" width="14" height="14" viewBox="0 0 14 14" fill="none"><rect x="0.8" y="1" width="12.4" height="3" rx=".6" stroke="#fff" stroke-width="1.3" stroke-linecap="round" stroke-linejoin="round"/><rect x="0.8" y="5.6" width="12.4" height="3" rx=".6" stroke="#fff" stroke-width="1.3" stroke-linecap="round" stroke-linejoin="round"/><path d="M7 8.6v3.6M4 12.6h6M3 2.5h2M3 7.1h2" stroke="#fff" stroke-width="1.3" stroke-linecap="round" stroke-linejoin="round"/></svg><span class="t" style="left:201.0px;transform-origin:0 50%;transform:scaleX(0.933);top:426.8px;font-size:11.7px;line-height:15px;color:#fff;font-weight:400;-webkit-text-stroke:0.25px #fff;">L2 Configura...</span><svg class="r" style="left:282.0px;top:431.3px;" width="4.68" height="7.02" viewBox="0 0 6 9" fill="none"><path d="M1.5 1l3.5 3.5L1.5 8" stroke="#fff" stroke-width="1.5" stroke-linecap="round" stroke-linejoin="round"/></svg><svg class="r" style="left:176.0px;top:474.9px;" width="14" height="15" viewBox="0 0 14 15" fill="none"><rect x="0.8" y=".8" width="12.4" height="2.7" rx=".6" stroke="#fff" stroke-width="1.3" stroke-linecap="round" stroke-linejoin="round"/><rect x="0.8" y="4.7" width="12.4" height="2.7" rx=".6" stroke="#fff" stroke-width="1.3" stroke-linecap="round" stroke-linejoin="round"/><rect x="0.8" y="8.6" width="12.4" height="2.7" rx=".6" stroke="#fff" stroke-width="1.3" stroke-linecap="round" stroke-linejoin="round"/><path d="M7 11.3v2.2M4 13.9h6M3 2.1h2M3 6h2M3 9.9h2" stroke="#fff" stroke-width="1.3" stroke-linecap="round" stroke-linejoin="round"/></svg><span class="t" style="left:201.0px;transform-origin:0 50%;transform:scaleX(0.933);top:474.2px;font-size:11.7px;line-height:15px;color:#fff;font-weight:400;-webkit-text-stroke:0.25px #fff;">L3 Configura...</span><svg class="r" style="left:282.0px;top:478.7px;" width="4.68" height="7.02" viewBox="0 0 6 9" fill="none"><path d="M1.5 1l3.5 3.5L1.5 8" stroke="#fff" stroke-width="1.5" stroke-linecap="round" stroke-linejoin="round"/></svg><svg class="r" style="left:176.5px;top:523.3px;" width="13" height="13" viewBox="0 0 13 13" fill="none"><rect x="0.7" y=".7" width="11.6" height="11.6" rx="1" stroke="#fff" stroke-width="1.3" stroke-linecap="round" stroke-linejoin="round"/><path d="M3.6 3v7M6.5 3v7M9.4 3v7" stroke="#fff" stroke-width="1.3" stroke-linecap="round" stroke-linejoin="round" stroke-width="1"/><path d="M2.7 5.2h1.8M5.6 8h1.8M8.5 5.2h1.8" stroke="#fff" stroke-width="1.3" stroke-linecap="round" stroke-linejoin="round" stroke-width="1.4"/></svg><span class="t" style="left:201.0px;transform-origin:0 50%;transform:scaleX(0.913);top:521.6px;font-size:11.7px;line-height:15px;color:#fff;font-weight:400;-webkit-text-stroke:0.25px #fff;">Advanced Co...</span><svg class="r" style="left:282.0px;top:526.1px;" width="4.68" height="7.02" viewBox="0 0 6 9" fill="none"><path d="M1.5 1l3.5 3.5L1.5 8" stroke="#fff" stroke-width="1.5" stroke-linecap="round" stroke-linejoin="round"/></svg><svg class="r" style="left:176.0px;top:570.2px;" width="14" height="14" viewBox="0 0 14 14" fill="none"><circle cx="7" cy="7" r="6.2" stroke="#fff" stroke-width="1.3" stroke-linecap="round" stroke-linejoin="round"/><ellipse cx="7" cy="7" rx="2.7" ry="6.2" stroke="#fff" stroke-width="1.3" stroke-linecap="round" stroke-linejoin="round" stroke-width="1.1"/><path d="M.8 7h12.4M1.7 3.9h10.6M1.7 10.1h10.6" stroke="#fff" stroke-width="1.3" stroke-linecap="round" stroke-linejoin="round" stroke-width="1.1"/></svg><span class="t" style="left:201.0px;transform-origin:0 50%;transform:scaleX(0.967);top:569.0px;font-size:11.7px;line-height:15px;color:#fff;font-weight:400;-webkit-text-stroke:0.25px #fff;">Network Man...</span><svg class="r" style="left:282.0px;top:573.5px;" width="4.68" height="7.02" viewBox="0 0 6 9" fill="none"><path d="M1.5 1l3.5 3.5L1.5 8" stroke="#fff" stroke-width="1.5" stroke-linecap="round" stroke-linejoin="round"/></svg><svg class="r" style="left:176.0px;top:617.1px;" width="14" height="15" viewBox="0 0 14 15" fill="none"><rect x="0.8" y="2" width="12.4" height="11.8" rx="1" stroke="#fff" stroke-width="1.3" stroke-linecap="round" stroke-linejoin="round"/><path d="M3.8 .8v2.2M10.2 .8v2.2M3.2 8.6h1.8l1.2-1.8 1.6 3 1.1-1.5h1.9" stroke="#fff" stroke-width="1.3" stroke-linecap="round" stroke-linejoin="round" stroke-width="1.1"/></svg><span class="t" style="left:201.0px;transform-origin:0 50%;transform:scaleX(0.949);top:616.4px;font-size:11.7px;line-height:15px;color:#fff;font-weight:400;-webkit-text-stroke:0.25px #fff;">Diagnostic Tool</span><svg class="r" style="left:282.0px;top:620.9px;" width="4.68" height="7.02" viewBox="0 0 6 9" fill="none"><path d="M1.5 1l3.5 3.5L1.5 8" stroke="#fff" stroke-width="1.5" stroke-linecap="round" stroke-linejoin="round"/></svg><svg class="r" style="left:176.0px;top:665.0px;" width="15" height="15" viewBox="0 0 15 15" fill="none"><path d="M7.6 11H5.4L4 12.6 2.8 11H1.8a1 1 0 0 1-1-1V2a1 1 0 0 1 1-1h10a1 1 0 0 1 1 1v4.5" stroke="#fff" stroke-width="1.3" stroke-linecap="round" stroke-linejoin="round"/><path d="M3.2 4h6M3.2 6.6h3.6" stroke="#fff" stroke-width="1.3" stroke-linecap="round" stroke-linejoin="round"/><circle cx="10.4" cy="10" r="2.2" stroke="#fff" stroke-width="1.3" stroke-linecap="round" stroke-linejoin="round"/><path d="M12.1 11.7l1.6 1.6" stroke="#fff" stroke-width="1.3" stroke-linecap="round" stroke-linejoin="round"/></svg><span class="t" style="left:201.0px;transform-origin:0 50%;transform:scaleX(0.905);top:663.8px;font-size:11.7px;line-height:15px;color:#fff;font-weight:400;-webkit-text-stroke:0.25px #fff;">System Mana...</span><svg class="r" style="left:282.0px;top:668.3px;" width="4.68" height="7.02" viewBox="0 0 6 9" fill="none"><path d="M1.5 1l3.5 3.5L1.5 8" stroke="#fff" stroke-width="1.5" stroke-linecap="round" stroke-linejoin="round"/></svg><div class="r" style="left:253.0px;top:688.8px;width:42.0px;height:1.0px;background:#a8622a;"></div></div></body></html>
